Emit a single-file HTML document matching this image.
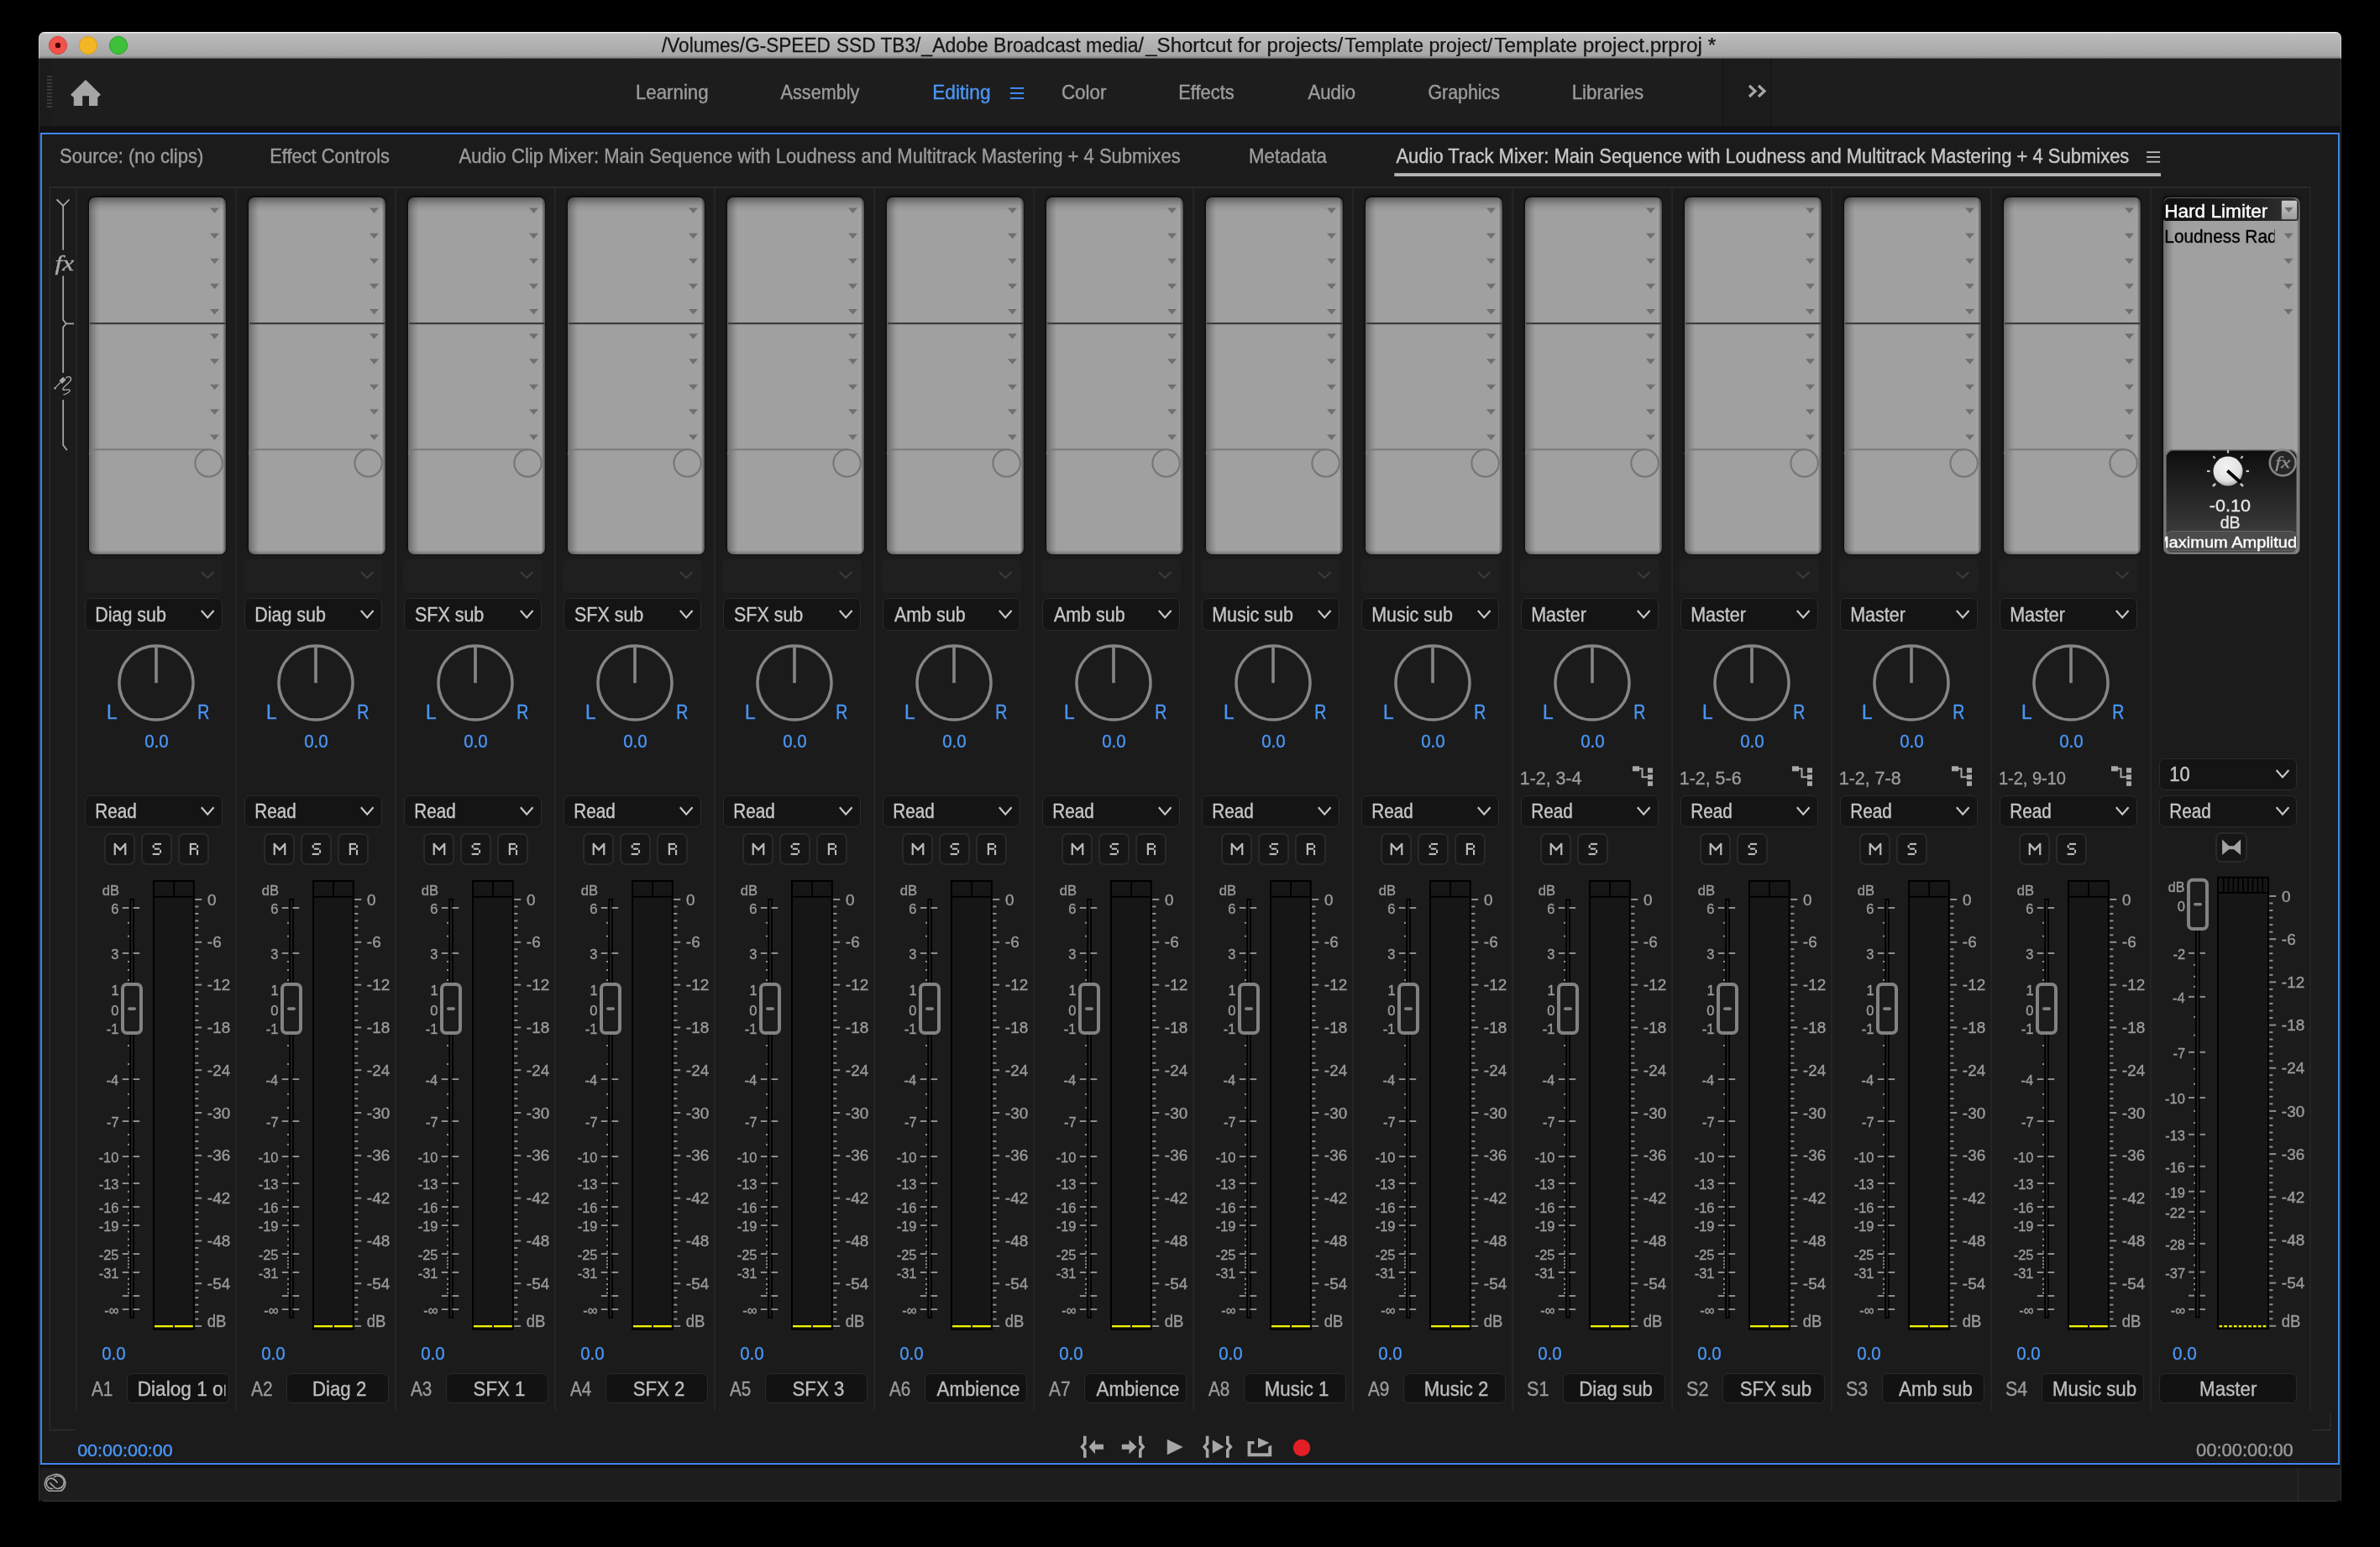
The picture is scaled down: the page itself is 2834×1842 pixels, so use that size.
<!DOCTYPE html>
<html><head><meta charset="utf-8"><style>
html,body{margin:0;padding:0;background:#000;}
body{width:2834px;height:1842px;position:relative;overflow:hidden;font-family:"Liberation Sans",sans-serif;}
#d>div{position:absolute;}
svg{position:absolute;left:0;top:0;}
svg text{font-family:"Liberation Sans",sans-serif;white-space:pre;}
svg{will-change:transform;}
</style></head><body>
<div id="d">
<div style="left:46.00px;top:38.00px;width:2742.00px;height:1750.00px;background:#1d1d1d;border-radius:7px 7px 6px 6px;overflow:hidden"></div>
<div style="left:46.00px;top:38.00px;width:2742.00px;height:32.00px;background:linear-gradient(#efefef 0px,#e6e6e6 1px,#bcbcbc 2.5px,#a6a6a6 28px,#8c8c8c 30.5px,#3a3a3a 32px);border-radius:7px 7px 0 0;box-shadow:inset 1px 0 0 rgba(255,255,255,.35),inset -1px 0 0 rgba(255,255,255,.35)"></div>
<div style="left:46.00px;top:70.00px;width:2742.00px;height:80.00px;background:#1d1d1d"></div>
<div style="left:46.00px;top:70.00px;width:16.00px;height:80.00px;background:#1b1b1b"></div>
<div style="left:2051.00px;top:70.00px;width:58.00px;height:80.00px;background:#1b1b1b"></div>
<div style="left:46.00px;top:150.00px;width:2742.00px;height:8.00px;background:#121212"></div>
<div style="left:48.00px;top:158.00px;width:2738.00px;height:1586.00px;background:#1b1b1b;box-sizing:border-box;border:2.4px solid #3f84ef"></div>
<div style="left:46.00px;top:1744.00px;width:2742.00px;height:44.00px;background:#1d1d1d;border-radius:0 0 6px 6px"></div>
<div style="left:46.00px;top:1744.00px;width:2742.00px;height:4.00px;background:#121212"></div>
<div style="left:105.80px;top:235.00px;width:163.70px;height:424.50px;border-radius:7px;background:linear-gradient(180deg,rgba(0,0,0,.41) 0px,rgba(0,0,0,.22) 5px,rgba(0,0,0,.08) 10px,rgba(0,0,0,0) 16px),linear-gradient(90deg,rgba(0,0,0,.34) 0px,rgba(0,0,0,.18) 5px,rgba(0,0,0,.05) 10px,rgba(0,0,0,0) 13px),linear-gradient(270deg,rgba(0,0,0,.5) 0px,rgba(0,0,0,0) 4px,rgba(255,255,255,.05) 5px,rgba(255,255,255,0) 7px),linear-gradient(0deg,rgba(0,0,0,.28) 0px,rgba(0,0,0,0) 5px),#a0a0a0;box-shadow:-1px -2px 3px rgba(0,0,0,.55), 0 0 0 1px rgba(0,0,0,.25)"></div>
<div style="left:100.20px;top:665.90px;width:165.70px;height:40.00px;background:#1f1f1f;border-radius:6px"></div>
<div style="left:101.00px;top:712.40px;width:164.40px;height:39.10px;background:#141414;box-sizing:border-box;border:1.6px solid #2b2b2b;border-radius:7px"></div>
<div style="left:101.00px;top:947.00px;width:164.20px;height:38.00px;background:#141414;box-sizing:border-box;border:1.6px solid #2b2b2b;border-radius:7px"></div>
<div style="left:124.20px;top:992.40px;width:37.30px;height:37.30px;background:#161616;box-sizing:border-box;border:2px solid #292929;border-radius:7px"></div>
<div style="left:168.15px;top:992.40px;width:37.30px;height:37.30px;background:#161616;box-sizing:border-box;border:2px solid #292929;border-radius:7px"></div>
<div style="left:212.10px;top:992.40px;width:37.30px;height:37.30px;background:#161616;box-sizing:border-box;border:2px solid #292929;border-radius:7px"></div>
<div style="left:150.70px;top:1634.80px;width:122.60px;height:36.40px;background:#121212;box-sizing:border-box;border:1.6px solid #2a2a2a;border-radius:7px"></div>
<div style="left:295.80px;top:235.00px;width:163.70px;height:424.50px;border-radius:7px;background:linear-gradient(180deg,rgba(0,0,0,.41) 0px,rgba(0,0,0,.22) 5px,rgba(0,0,0,.08) 10px,rgba(0,0,0,0) 16px),linear-gradient(90deg,rgba(0,0,0,.34) 0px,rgba(0,0,0,.18) 5px,rgba(0,0,0,.05) 10px,rgba(0,0,0,0) 13px),linear-gradient(270deg,rgba(0,0,0,.5) 0px,rgba(0,0,0,0) 4px,rgba(255,255,255,.05) 5px,rgba(255,255,255,0) 7px),linear-gradient(0deg,rgba(0,0,0,.28) 0px,rgba(0,0,0,0) 5px),#a0a0a0;box-shadow:-1px -2px 3px rgba(0,0,0,.55), 0 0 0 1px rgba(0,0,0,.25)"></div>
<div style="left:290.20px;top:665.90px;width:165.70px;height:40.00px;background:#1f1f1f;border-radius:6px"></div>
<div style="left:291.00px;top:712.40px;width:164.40px;height:39.10px;background:#141414;box-sizing:border-box;border:1.6px solid #2b2b2b;border-radius:7px"></div>
<div style="left:291.00px;top:947.00px;width:164.20px;height:38.00px;background:#141414;box-sizing:border-box;border:1.6px solid #2b2b2b;border-radius:7px"></div>
<div style="left:314.20px;top:992.40px;width:37.30px;height:37.30px;background:#161616;box-sizing:border-box;border:2px solid #292929;border-radius:7px"></div>
<div style="left:358.15px;top:992.40px;width:37.30px;height:37.30px;background:#161616;box-sizing:border-box;border:2px solid #292929;border-radius:7px"></div>
<div style="left:402.10px;top:992.40px;width:37.30px;height:37.30px;background:#161616;box-sizing:border-box;border:2px solid #292929;border-radius:7px"></div>
<div style="left:340.70px;top:1634.80px;width:122.60px;height:36.40px;background:#121212;box-sizing:border-box;border:1.6px solid #2a2a2a;border-radius:7px"></div>
<div style="left:485.80px;top:235.00px;width:163.70px;height:424.50px;border-radius:7px;background:linear-gradient(180deg,rgba(0,0,0,.41) 0px,rgba(0,0,0,.22) 5px,rgba(0,0,0,.08) 10px,rgba(0,0,0,0) 16px),linear-gradient(90deg,rgba(0,0,0,.34) 0px,rgba(0,0,0,.18) 5px,rgba(0,0,0,.05) 10px,rgba(0,0,0,0) 13px),linear-gradient(270deg,rgba(0,0,0,.5) 0px,rgba(0,0,0,0) 4px,rgba(255,255,255,.05) 5px,rgba(255,255,255,0) 7px),linear-gradient(0deg,rgba(0,0,0,.28) 0px,rgba(0,0,0,0) 5px),#a0a0a0;box-shadow:-1px -2px 3px rgba(0,0,0,.55), 0 0 0 1px rgba(0,0,0,.25)"></div>
<div style="left:480.20px;top:665.90px;width:165.70px;height:40.00px;background:#1f1f1f;border-radius:6px"></div>
<div style="left:481.00px;top:712.40px;width:164.40px;height:39.10px;background:#141414;box-sizing:border-box;border:1.6px solid #2b2b2b;border-radius:7px"></div>
<div style="left:481.00px;top:947.00px;width:164.20px;height:38.00px;background:#141414;box-sizing:border-box;border:1.6px solid #2b2b2b;border-radius:7px"></div>
<div style="left:504.20px;top:992.40px;width:37.30px;height:37.30px;background:#161616;box-sizing:border-box;border:2px solid #292929;border-radius:7px"></div>
<div style="left:548.15px;top:992.40px;width:37.30px;height:37.30px;background:#161616;box-sizing:border-box;border:2px solid #292929;border-radius:7px"></div>
<div style="left:592.10px;top:992.40px;width:37.30px;height:37.30px;background:#161616;box-sizing:border-box;border:2px solid #292929;border-radius:7px"></div>
<div style="left:530.70px;top:1634.80px;width:122.60px;height:36.40px;background:#121212;box-sizing:border-box;border:1.6px solid #2a2a2a;border-radius:7px"></div>
<div style="left:675.80px;top:235.00px;width:163.70px;height:424.50px;border-radius:7px;background:linear-gradient(180deg,rgba(0,0,0,.41) 0px,rgba(0,0,0,.22) 5px,rgba(0,0,0,.08) 10px,rgba(0,0,0,0) 16px),linear-gradient(90deg,rgba(0,0,0,.34) 0px,rgba(0,0,0,.18) 5px,rgba(0,0,0,.05) 10px,rgba(0,0,0,0) 13px),linear-gradient(270deg,rgba(0,0,0,.5) 0px,rgba(0,0,0,0) 4px,rgba(255,255,255,.05) 5px,rgba(255,255,255,0) 7px),linear-gradient(0deg,rgba(0,0,0,.28) 0px,rgba(0,0,0,0) 5px),#a0a0a0;box-shadow:-1px -2px 3px rgba(0,0,0,.55), 0 0 0 1px rgba(0,0,0,.25)"></div>
<div style="left:670.20px;top:665.90px;width:165.70px;height:40.00px;background:#1f1f1f;border-radius:6px"></div>
<div style="left:671.00px;top:712.40px;width:164.40px;height:39.10px;background:#141414;box-sizing:border-box;border:1.6px solid #2b2b2b;border-radius:7px"></div>
<div style="left:671.00px;top:947.00px;width:164.20px;height:38.00px;background:#141414;box-sizing:border-box;border:1.6px solid #2b2b2b;border-radius:7px"></div>
<div style="left:694.20px;top:992.40px;width:37.30px;height:37.30px;background:#161616;box-sizing:border-box;border:2px solid #292929;border-radius:7px"></div>
<div style="left:738.15px;top:992.40px;width:37.30px;height:37.30px;background:#161616;box-sizing:border-box;border:2px solid #292929;border-radius:7px"></div>
<div style="left:782.10px;top:992.40px;width:37.30px;height:37.30px;background:#161616;box-sizing:border-box;border:2px solid #292929;border-radius:7px"></div>
<div style="left:720.70px;top:1634.80px;width:122.60px;height:36.40px;background:#121212;box-sizing:border-box;border:1.6px solid #2a2a2a;border-radius:7px"></div>
<div style="left:865.80px;top:235.00px;width:163.70px;height:424.50px;border-radius:7px;background:linear-gradient(180deg,rgba(0,0,0,.41) 0px,rgba(0,0,0,.22) 5px,rgba(0,0,0,.08) 10px,rgba(0,0,0,0) 16px),linear-gradient(90deg,rgba(0,0,0,.34) 0px,rgba(0,0,0,.18) 5px,rgba(0,0,0,.05) 10px,rgba(0,0,0,0) 13px),linear-gradient(270deg,rgba(0,0,0,.5) 0px,rgba(0,0,0,0) 4px,rgba(255,255,255,.05) 5px,rgba(255,255,255,0) 7px),linear-gradient(0deg,rgba(0,0,0,.28) 0px,rgba(0,0,0,0) 5px),#a0a0a0;box-shadow:-1px -2px 3px rgba(0,0,0,.55), 0 0 0 1px rgba(0,0,0,.25)"></div>
<div style="left:860.20px;top:665.90px;width:165.70px;height:40.00px;background:#1f1f1f;border-radius:6px"></div>
<div style="left:861.00px;top:712.40px;width:164.40px;height:39.10px;background:#141414;box-sizing:border-box;border:1.6px solid #2b2b2b;border-radius:7px"></div>
<div style="left:861.00px;top:947.00px;width:164.20px;height:38.00px;background:#141414;box-sizing:border-box;border:1.6px solid #2b2b2b;border-radius:7px"></div>
<div style="left:884.20px;top:992.40px;width:37.30px;height:37.30px;background:#161616;box-sizing:border-box;border:2px solid #292929;border-radius:7px"></div>
<div style="left:928.15px;top:992.40px;width:37.30px;height:37.30px;background:#161616;box-sizing:border-box;border:2px solid #292929;border-radius:7px"></div>
<div style="left:972.10px;top:992.40px;width:37.30px;height:37.30px;background:#161616;box-sizing:border-box;border:2px solid #292929;border-radius:7px"></div>
<div style="left:910.70px;top:1634.80px;width:122.60px;height:36.40px;background:#121212;box-sizing:border-box;border:1.6px solid #2a2a2a;border-radius:7px"></div>
<div style="left:1055.80px;top:235.00px;width:163.70px;height:424.50px;border-radius:7px;background:linear-gradient(180deg,rgba(0,0,0,.41) 0px,rgba(0,0,0,.22) 5px,rgba(0,0,0,.08) 10px,rgba(0,0,0,0) 16px),linear-gradient(90deg,rgba(0,0,0,.34) 0px,rgba(0,0,0,.18) 5px,rgba(0,0,0,.05) 10px,rgba(0,0,0,0) 13px),linear-gradient(270deg,rgba(0,0,0,.5) 0px,rgba(0,0,0,0) 4px,rgba(255,255,255,.05) 5px,rgba(255,255,255,0) 7px),linear-gradient(0deg,rgba(0,0,0,.28) 0px,rgba(0,0,0,0) 5px),#a0a0a0;box-shadow:-1px -2px 3px rgba(0,0,0,.55), 0 0 0 1px rgba(0,0,0,.25)"></div>
<div style="left:1050.20px;top:665.90px;width:165.70px;height:40.00px;background:#1f1f1f;border-radius:6px"></div>
<div style="left:1051.00px;top:712.40px;width:164.40px;height:39.10px;background:#141414;box-sizing:border-box;border:1.6px solid #2b2b2b;border-radius:7px"></div>
<div style="left:1051.00px;top:947.00px;width:164.20px;height:38.00px;background:#141414;box-sizing:border-box;border:1.6px solid #2b2b2b;border-radius:7px"></div>
<div style="left:1074.20px;top:992.40px;width:37.30px;height:37.30px;background:#161616;box-sizing:border-box;border:2px solid #292929;border-radius:7px"></div>
<div style="left:1118.15px;top:992.40px;width:37.30px;height:37.30px;background:#161616;box-sizing:border-box;border:2px solid #292929;border-radius:7px"></div>
<div style="left:1162.10px;top:992.40px;width:37.30px;height:37.30px;background:#161616;box-sizing:border-box;border:2px solid #292929;border-radius:7px"></div>
<div style="left:1100.70px;top:1634.80px;width:122.60px;height:36.40px;background:#121212;box-sizing:border-box;border:1.6px solid #2a2a2a;border-radius:7px"></div>
<div style="left:1245.80px;top:235.00px;width:163.70px;height:424.50px;border-radius:7px;background:linear-gradient(180deg,rgba(0,0,0,.41) 0px,rgba(0,0,0,.22) 5px,rgba(0,0,0,.08) 10px,rgba(0,0,0,0) 16px),linear-gradient(90deg,rgba(0,0,0,.34) 0px,rgba(0,0,0,.18) 5px,rgba(0,0,0,.05) 10px,rgba(0,0,0,0) 13px),linear-gradient(270deg,rgba(0,0,0,.5) 0px,rgba(0,0,0,0) 4px,rgba(255,255,255,.05) 5px,rgba(255,255,255,0) 7px),linear-gradient(0deg,rgba(0,0,0,.28) 0px,rgba(0,0,0,0) 5px),#a0a0a0;box-shadow:-1px -2px 3px rgba(0,0,0,.55), 0 0 0 1px rgba(0,0,0,.25)"></div>
<div style="left:1240.20px;top:665.90px;width:165.70px;height:40.00px;background:#1f1f1f;border-radius:6px"></div>
<div style="left:1241.00px;top:712.40px;width:164.40px;height:39.10px;background:#141414;box-sizing:border-box;border:1.6px solid #2b2b2b;border-radius:7px"></div>
<div style="left:1241.00px;top:947.00px;width:164.20px;height:38.00px;background:#141414;box-sizing:border-box;border:1.6px solid #2b2b2b;border-radius:7px"></div>
<div style="left:1264.20px;top:992.40px;width:37.30px;height:37.30px;background:#161616;box-sizing:border-box;border:2px solid #292929;border-radius:7px"></div>
<div style="left:1308.15px;top:992.40px;width:37.30px;height:37.30px;background:#161616;box-sizing:border-box;border:2px solid #292929;border-radius:7px"></div>
<div style="left:1352.10px;top:992.40px;width:37.30px;height:37.30px;background:#161616;box-sizing:border-box;border:2px solid #292929;border-radius:7px"></div>
<div style="left:1290.70px;top:1634.80px;width:122.60px;height:36.40px;background:#121212;box-sizing:border-box;border:1.6px solid #2a2a2a;border-radius:7px"></div>
<div style="left:1435.80px;top:235.00px;width:163.70px;height:424.50px;border-radius:7px;background:linear-gradient(180deg,rgba(0,0,0,.41) 0px,rgba(0,0,0,.22) 5px,rgba(0,0,0,.08) 10px,rgba(0,0,0,0) 16px),linear-gradient(90deg,rgba(0,0,0,.34) 0px,rgba(0,0,0,.18) 5px,rgba(0,0,0,.05) 10px,rgba(0,0,0,0) 13px),linear-gradient(270deg,rgba(0,0,0,.5) 0px,rgba(0,0,0,0) 4px,rgba(255,255,255,.05) 5px,rgba(255,255,255,0) 7px),linear-gradient(0deg,rgba(0,0,0,.28) 0px,rgba(0,0,0,0) 5px),#a0a0a0;box-shadow:-1px -2px 3px rgba(0,0,0,.55), 0 0 0 1px rgba(0,0,0,.25)"></div>
<div style="left:1430.20px;top:665.90px;width:165.70px;height:40.00px;background:#1f1f1f;border-radius:6px"></div>
<div style="left:1431.00px;top:712.40px;width:164.40px;height:39.10px;background:#141414;box-sizing:border-box;border:1.6px solid #2b2b2b;border-radius:7px"></div>
<div style="left:1431.00px;top:947.00px;width:164.20px;height:38.00px;background:#141414;box-sizing:border-box;border:1.6px solid #2b2b2b;border-radius:7px"></div>
<div style="left:1454.20px;top:992.40px;width:37.30px;height:37.30px;background:#161616;box-sizing:border-box;border:2px solid #292929;border-radius:7px"></div>
<div style="left:1498.15px;top:992.40px;width:37.30px;height:37.30px;background:#161616;box-sizing:border-box;border:2px solid #292929;border-radius:7px"></div>
<div style="left:1542.10px;top:992.40px;width:37.30px;height:37.30px;background:#161616;box-sizing:border-box;border:2px solid #292929;border-radius:7px"></div>
<div style="left:1480.70px;top:1634.80px;width:122.60px;height:36.40px;background:#121212;box-sizing:border-box;border:1.6px solid #2a2a2a;border-radius:7px"></div>
<div style="left:1625.80px;top:235.00px;width:163.70px;height:424.50px;border-radius:7px;background:linear-gradient(180deg,rgba(0,0,0,.41) 0px,rgba(0,0,0,.22) 5px,rgba(0,0,0,.08) 10px,rgba(0,0,0,0) 16px),linear-gradient(90deg,rgba(0,0,0,.34) 0px,rgba(0,0,0,.18) 5px,rgba(0,0,0,.05) 10px,rgba(0,0,0,0) 13px),linear-gradient(270deg,rgba(0,0,0,.5) 0px,rgba(0,0,0,0) 4px,rgba(255,255,255,.05) 5px,rgba(255,255,255,0) 7px),linear-gradient(0deg,rgba(0,0,0,.28) 0px,rgba(0,0,0,0) 5px),#a0a0a0;box-shadow:-1px -2px 3px rgba(0,0,0,.55), 0 0 0 1px rgba(0,0,0,.25)"></div>
<div style="left:1620.20px;top:665.90px;width:165.70px;height:40.00px;background:#1f1f1f;border-radius:6px"></div>
<div style="left:1621.00px;top:712.40px;width:164.40px;height:39.10px;background:#141414;box-sizing:border-box;border:1.6px solid #2b2b2b;border-radius:7px"></div>
<div style="left:1621.00px;top:947.00px;width:164.20px;height:38.00px;background:#141414;box-sizing:border-box;border:1.6px solid #2b2b2b;border-radius:7px"></div>
<div style="left:1644.20px;top:992.40px;width:37.30px;height:37.30px;background:#161616;box-sizing:border-box;border:2px solid #292929;border-radius:7px"></div>
<div style="left:1688.15px;top:992.40px;width:37.30px;height:37.30px;background:#161616;box-sizing:border-box;border:2px solid #292929;border-radius:7px"></div>
<div style="left:1732.10px;top:992.40px;width:37.30px;height:37.30px;background:#161616;box-sizing:border-box;border:2px solid #292929;border-radius:7px"></div>
<div style="left:1670.70px;top:1634.80px;width:122.60px;height:36.40px;background:#121212;box-sizing:border-box;border:1.6px solid #2a2a2a;border-radius:7px"></div>
<div style="left:1815.80px;top:235.00px;width:163.70px;height:424.50px;border-radius:7px;background:linear-gradient(180deg,rgba(0,0,0,.41) 0px,rgba(0,0,0,.22) 5px,rgba(0,0,0,.08) 10px,rgba(0,0,0,0) 16px),linear-gradient(90deg,rgba(0,0,0,.34) 0px,rgba(0,0,0,.18) 5px,rgba(0,0,0,.05) 10px,rgba(0,0,0,0) 13px),linear-gradient(270deg,rgba(0,0,0,.5) 0px,rgba(0,0,0,0) 4px,rgba(255,255,255,.05) 5px,rgba(255,255,255,0) 7px),linear-gradient(0deg,rgba(0,0,0,.28) 0px,rgba(0,0,0,0) 5px),#a0a0a0;box-shadow:-1px -2px 3px rgba(0,0,0,.55), 0 0 0 1px rgba(0,0,0,.25)"></div>
<div style="left:1810.20px;top:665.90px;width:165.70px;height:40.00px;background:#1f1f1f;border-radius:6px"></div>
<div style="left:1811.00px;top:712.40px;width:164.40px;height:39.10px;background:#141414;box-sizing:border-box;border:1.6px solid #2b2b2b;border-radius:7px"></div>
<div style="left:1811.00px;top:947.00px;width:164.20px;height:38.00px;background:#141414;box-sizing:border-box;border:1.6px solid #2b2b2b;border-radius:7px"></div>
<div style="left:1834.20px;top:992.40px;width:37.30px;height:37.30px;background:#161616;box-sizing:border-box;border:2px solid #292929;border-radius:7px"></div>
<div style="left:1878.15px;top:992.40px;width:37.30px;height:37.30px;background:#161616;box-sizing:border-box;border:2px solid #292929;border-radius:7px"></div>
<div style="left:1860.70px;top:1634.80px;width:122.60px;height:36.40px;background:#121212;box-sizing:border-box;border:1.6px solid #2a2a2a;border-radius:7px"></div>
<div style="left:2005.80px;top:235.00px;width:163.70px;height:424.50px;border-radius:7px;background:linear-gradient(180deg,rgba(0,0,0,.41) 0px,rgba(0,0,0,.22) 5px,rgba(0,0,0,.08) 10px,rgba(0,0,0,0) 16px),linear-gradient(90deg,rgba(0,0,0,.34) 0px,rgba(0,0,0,.18) 5px,rgba(0,0,0,.05) 10px,rgba(0,0,0,0) 13px),linear-gradient(270deg,rgba(0,0,0,.5) 0px,rgba(0,0,0,0) 4px,rgba(255,255,255,.05) 5px,rgba(255,255,255,0) 7px),linear-gradient(0deg,rgba(0,0,0,.28) 0px,rgba(0,0,0,0) 5px),#a0a0a0;box-shadow:-1px -2px 3px rgba(0,0,0,.55), 0 0 0 1px rgba(0,0,0,.25)"></div>
<div style="left:2000.20px;top:665.90px;width:165.70px;height:40.00px;background:#1f1f1f;border-radius:6px"></div>
<div style="left:2001.00px;top:712.40px;width:164.40px;height:39.10px;background:#141414;box-sizing:border-box;border:1.6px solid #2b2b2b;border-radius:7px"></div>
<div style="left:2001.00px;top:947.00px;width:164.20px;height:38.00px;background:#141414;box-sizing:border-box;border:1.6px solid #2b2b2b;border-radius:7px"></div>
<div style="left:2024.20px;top:992.40px;width:37.30px;height:37.30px;background:#161616;box-sizing:border-box;border:2px solid #292929;border-radius:7px"></div>
<div style="left:2068.15px;top:992.40px;width:37.30px;height:37.30px;background:#161616;box-sizing:border-box;border:2px solid #292929;border-radius:7px"></div>
<div style="left:2050.70px;top:1634.80px;width:122.60px;height:36.40px;background:#121212;box-sizing:border-box;border:1.6px solid #2a2a2a;border-radius:7px"></div>
<div style="left:2195.80px;top:235.00px;width:163.70px;height:424.50px;border-radius:7px;background:linear-gradient(180deg,rgba(0,0,0,.41) 0px,rgba(0,0,0,.22) 5px,rgba(0,0,0,.08) 10px,rgba(0,0,0,0) 16px),linear-gradient(90deg,rgba(0,0,0,.34) 0px,rgba(0,0,0,.18) 5px,rgba(0,0,0,.05) 10px,rgba(0,0,0,0) 13px),linear-gradient(270deg,rgba(0,0,0,.5) 0px,rgba(0,0,0,0) 4px,rgba(255,255,255,.05) 5px,rgba(255,255,255,0) 7px),linear-gradient(0deg,rgba(0,0,0,.28) 0px,rgba(0,0,0,0) 5px),#a0a0a0;box-shadow:-1px -2px 3px rgba(0,0,0,.55), 0 0 0 1px rgba(0,0,0,.25)"></div>
<div style="left:2190.20px;top:665.90px;width:165.70px;height:40.00px;background:#1f1f1f;border-radius:6px"></div>
<div style="left:2191.00px;top:712.40px;width:164.40px;height:39.10px;background:#141414;box-sizing:border-box;border:1.6px solid #2b2b2b;border-radius:7px"></div>
<div style="left:2191.00px;top:947.00px;width:164.20px;height:38.00px;background:#141414;box-sizing:border-box;border:1.6px solid #2b2b2b;border-radius:7px"></div>
<div style="left:2214.20px;top:992.40px;width:37.30px;height:37.30px;background:#161616;box-sizing:border-box;border:2px solid #292929;border-radius:7px"></div>
<div style="left:2258.15px;top:992.40px;width:37.30px;height:37.30px;background:#161616;box-sizing:border-box;border:2px solid #292929;border-radius:7px"></div>
<div style="left:2240.70px;top:1634.80px;width:122.60px;height:36.40px;background:#121212;box-sizing:border-box;border:1.6px solid #2a2a2a;border-radius:7px"></div>
<div style="left:2385.80px;top:235.00px;width:163.70px;height:424.50px;border-radius:7px;background:linear-gradient(180deg,rgba(0,0,0,.41) 0px,rgba(0,0,0,.22) 5px,rgba(0,0,0,.08) 10px,rgba(0,0,0,0) 16px),linear-gradient(90deg,rgba(0,0,0,.34) 0px,rgba(0,0,0,.18) 5px,rgba(0,0,0,.05) 10px,rgba(0,0,0,0) 13px),linear-gradient(270deg,rgba(0,0,0,.5) 0px,rgba(0,0,0,0) 4px,rgba(255,255,255,.05) 5px,rgba(255,255,255,0) 7px),linear-gradient(0deg,rgba(0,0,0,.28) 0px,rgba(0,0,0,0) 5px),#a0a0a0;box-shadow:-1px -2px 3px rgba(0,0,0,.55), 0 0 0 1px rgba(0,0,0,.25)"></div>
<div style="left:2380.20px;top:665.90px;width:165.70px;height:40.00px;background:#1f1f1f;border-radius:6px"></div>
<div style="left:2381.00px;top:712.40px;width:164.40px;height:39.10px;background:#141414;box-sizing:border-box;border:1.6px solid #2b2b2b;border-radius:7px"></div>
<div style="left:2381.00px;top:947.00px;width:164.20px;height:38.00px;background:#141414;box-sizing:border-box;border:1.6px solid #2b2b2b;border-radius:7px"></div>
<div style="left:2404.20px;top:992.40px;width:37.30px;height:37.30px;background:#161616;box-sizing:border-box;border:2px solid #292929;border-radius:7px"></div>
<div style="left:2448.15px;top:992.40px;width:37.30px;height:37.30px;background:#161616;box-sizing:border-box;border:2px solid #292929;border-radius:7px"></div>
<div style="left:2430.70px;top:1634.80px;width:122.60px;height:36.40px;background:#121212;box-sizing:border-box;border:1.6px solid #2a2a2a;border-radius:7px"></div>
<div style="left:2575.80px;top:235.00px;width:163.70px;height:424.50px;border-radius:7px;background:linear-gradient(180deg,rgba(0,0,0,.41) 0px,rgba(0,0,0,.22) 5px,rgba(0,0,0,.08) 10px,rgba(0,0,0,0) 16px),linear-gradient(90deg,rgba(0,0,0,.34) 0px,rgba(0,0,0,.18) 5px,rgba(0,0,0,.05) 10px,rgba(0,0,0,0) 13px),linear-gradient(270deg,rgba(0,0,0,.5) 0px,rgba(0,0,0,0) 4px,rgba(255,255,255,.05) 5px,rgba(255,255,255,0) 7px),linear-gradient(0deg,rgba(0,0,0,.28) 0px,rgba(0,0,0,0) 5px),#a0a0a0;box-shadow:-1px -2px 3px rgba(0,0,0,.55), 0 0 0 1px rgba(0,0,0,.25)"></div>
<div style="left:2575.50px;top:236.00px;width:161.00px;height:27.40px;background:linear-gradient(90deg,#0e0e0e,#222 70%,#333);border-radius:8px 8px 3px 3px"></div>
<div style="left:2716.00px;top:237.50px;width:19.50px;height:24.50px;background:linear-gradient(#c8c8c8,#9c9c9c);box-sizing:border-box;border:1px solid #444;border-radius:2px"></div>
<div style="left:2577.80px;top:535.40px;width:158.20px;height:123.30px;background:linear-gradient(#0d0d0d,#262626 45%,#3a3a3a 80%,#444);border-radius:10px 10px 8px 8px;box-shadow:inset 0 0 0 1.5px #7a7a7a"></div>
<div style="left:2577.80px;top:631.80px;width:158.20px;height:24.50px;background:#4b4b4b;box-sizing:border-box;border:1.5px solid #666;border-radius:8px"></div>
<div style="left:2570.90px;top:902.50px;width:164.40px;height:38.80px;background:#141414;box-sizing:border-box;border:1.6px solid #2b2b2b;border-radius:7px"></div>
<div style="left:2570.90px;top:946.70px;width:164.40px;height:38.80px;background:#141414;box-sizing:border-box;border:1.6px solid #2b2b2b;border-radius:7px"></div>
<div style="left:2638.00px;top:990.50px;width:37.60px;height:36.90px;background:#161616;box-sizing:border-box;border:2px solid #292929;border-radius:7px"></div>
<div style="left:2571.00px;top:1635.00px;width:164.00px;height:36.00px;background:#121212;box-sizing:border-box;border:1.6px solid #2a2a2a;border-radius:7px"></div>
</div>
<svg width="2834" height="1842" viewBox="0 0 2834 1842">
<defs><clipPath id="nm0"><rect x="153" y="1630" width="115.5" height="50"/></clipPath><clipPath id="lr"><rect x="2575" y="265" width="133.5" height="30"/></clipPath><clipPath id="ma"><rect x="2577.8" y="625" width="158.2" height="35"/></clipPath></defs>
<circle cx="69" cy="54" r="10.6" fill="#f2524c" stroke="#d8403a" stroke-width="1"/>
<circle cx="105" cy="54" r="10.6" fill="#f5b625" stroke="#d9a017" stroke-width="1"/>
<circle cx="141" cy="54" r="10.6" fill="#3ec03a" stroke="#2aa22a" stroke-width="1"/>
<circle cx="69" cy="54" r="3.2" fill="#4d0000"/>
<text transform="translate(788.00,62.00) scale(0.9808,1)" font-size="23.04" fill="#141414" stroke="#141414" stroke-width="0.25" >/Volumes/G-SPEED</text>
<text transform="translate(995.98,62.00) scale(0.9847,1)" font-size="23.04" fill="#141414" stroke="#141414" stroke-width="0.25" >SSD TB3/</text>
<text transform="translate(1097.35,62.00) scale(0.9986,1)" font-size="23.04" fill="#141414" stroke="#141414" stroke-width="0.25" >_Adobe Broadcast media/</text>
<text transform="translate(1364.26,62.00) scale(1.0433,1)" font-size="23.04" fill="#141414" stroke="#141414" stroke-width="0.25" >_Shortcut for projects/</text>
<text transform="translate(1601.34,62.00) scale(1.0033,1)" font-size="23.04" fill="#141414" stroke="#141414" stroke-width="0.25" >Template project/</text>
<text transform="translate(1779.21,62.00) scale(1.0575,1)" font-size="23.04" fill="#141414" stroke="#141414" stroke-width="0.25" >Template project.prproj *</text>
<rect x="46.00" y="70.00" width="1.00" height="1718.00" fill="#2e2e2e" />
<rect x="2787.00" y="70.00" width="1.00" height="1718.00" fill="#2e2e2e" />
<rect x="56.00" y="90.00" width="6.00" height="2.00" fill="#3a3a3a" />
<rect x="56.00" y="94.00" width="6.00" height="2.00" fill="#3a3a3a" />
<rect x="56.00" y="98.00" width="6.00" height="2.00" fill="#3a3a3a" />
<rect x="56.00" y="102.00" width="6.00" height="2.00" fill="#3a3a3a" />
<rect x="56.00" y="106.00" width="6.00" height="2.00" fill="#3a3a3a" />
<rect x="56.00" y="110.00" width="6.00" height="2.00" fill="#3a3a3a" />
<rect x="56.00" y="114.00" width="6.00" height="2.00" fill="#3a3a3a" />
<rect x="56.00" y="118.00" width="6.00" height="2.00" fill="#3a3a3a" />
<rect x="56.00" y="122.00" width="6.00" height="2.00" fill="#3a3a3a" />
<rect x="56.00" y="126.00" width="6.00" height="2.00" fill="#3a3a3a" />
<path d="M102 95 L120 112.8 L116.3 116 L116.3 126 L106 126 L106 114.2 L98.2 114.2 L98.2 126 L87.8 126 L87.8 116 L84 112.8 Z" fill="#a6a6a6"/>
<text transform="translate(756.92,118.00) scale(0.9676,1)" font-size="23.04" fill="#9c9c9c" stroke="#9c9c9c" stroke-width="0.4" >Learning</text>
<text transform="translate(929.60,118.00) scale(0.9390,1)" font-size="23.04" fill="#9c9c9c" stroke="#9c9c9c" stroke-width="0.4" >Assembly</text>
<text transform="translate(1110.19,118.00) scale(0.9842,1)" font-size="23.04" fill="#4a96f5" stroke="#4a96f5" stroke-width="0.4" >Editing</text>
<text transform="translate(1263.88,118.00) scale(0.9727,1)" font-size="23.04" fill="#9c9c9c" stroke="#9c9c9c" stroke-width="0.4" >Color</text>
<text transform="translate(1403.25,118.00) scale(0.9495,1)" font-size="23.04" fill="#9c9c9c" stroke="#9c9c9c" stroke-width="0.4" >Effects</text>
<text transform="translate(1557.40,118.00) scale(0.9628,1)" font-size="23.04" fill="#9c9c9c" stroke="#9c9c9c" stroke-width="0.4" >Audio</text>
<text transform="translate(1700.43,118.00) scale(0.9289,1)" font-size="23.04" fill="#9c9c9c" stroke="#9c9c9c" stroke-width="0.4" >Graphics</text>
<text transform="translate(1871.72,118.00) scale(0.9682,1)" font-size="23.04" fill="#9c9c9c" stroke="#9c9c9c" stroke-width="0.4" >Libraries</text>
<rect x="1203.00" y="104.00" width="16.20" height="2.00" fill="#3f88f2" />
<rect x="1203.00" y="110.00" width="16.20" height="2.00" fill="#3f88f2" />
<rect x="1203.00" y="116.00" width="16.20" height="2.00" fill="#3f88f2" />
<rect x="2050.00" y="70.00" width="1.50" height="80.00" fill="#161616" />
<rect x="2108.50" y="70.00" width="1.50" height="80.00" fill="#161616" />
<path d="M2083 102 L2090 108.5 L2083 115 M2094 102 L2101 108.5 L2094 115" fill="none" stroke="#a6a6a6" stroke-width="3.2"/>
<rect x="52.00" y="1786.60" width="2730.00" height="1.20" fill="#343434" />
<rect x="2735.50" y="1749.00" width="1.50" height="39.00" fill="#2a2a2a" />
<g fill="none" stroke="#a3a3a3" stroke-width="1.6" stroke-linecap="round"><path d="M58.4 1775.3 A10 10 0 0 1 61.8 1756.8 A10.6 10.6 0 1 1 72.5 1775.3 Z"/><path d="M62.8 1772.5 A6.3 6.3 0 1 1 60.5 1760.1 Q64.5 1760.1 68.2 1765.2"/><path d="M59.6 1765.8 L65.5 1771.3 Q67.3 1772.9 69.8 1772.4 A7.6 7.6 0 1 0 64.6 1758.5"/></g>
<text transform="translate(71.01,194.40) scale(0.9044,1)" font-size="24.35" fill="#9c9c9c" stroke="#9c9c9c" stroke-width="0.4" >Source: (no clips)</text>
<text transform="translate(321.25,194.40) scale(0.8962,1)" font-size="24.35" fill="#9c9c9c" stroke="#9c9c9c" stroke-width="0.4" >Effect Controls</text>
<text transform="translate(546.50,194.40) scale(0.9051,1)" font-size="24.35" fill="#9c9c9c" stroke="#9c9c9c" stroke-width="0.4" >Audio Clip Mixer: Main Sequence with Loudness and Multitrack Mastering + 4 Submixes</text>
<text transform="translate(1487.02,194.40) scale(0.9158,1)" font-size="24.35" fill="#9c9c9c" stroke="#9c9c9c" stroke-width="0.4" >Metadata</text>
<text transform="translate(1662.40,194.40) scale(0.9033,1)" font-size="24.35" fill="#c8c8c8" stroke="#c8c8c8" stroke-width="0.4" >Audio Track Mixer: Main Sequence with Loudness and Multitrack Mastering + 4 Submixes</text>
<rect x="2556.10" y="180.30" width="16.00" height="1.80" fill="#bdbdbd" />
<rect x="2556.10" y="186.10" width="16.00" height="1.80" fill="#bdbdbd" />
<rect x="2556.10" y="191.80" width="16.00" height="1.80" fill="#bdbdbd" />
<rect x="1660.30" y="206.10" width="912.70" height="3.90" fill="#b4b4b4" />
<rect x="58.50" y="222.00" width="2692.50" height="2.00" fill="#2a2a2a" />
<rect x="58.50" y="222.00" width="1.60" height="1481.70" fill="#2a2a2a" />
<rect x="58.50" y="1701.90" width="31.20" height="1.80" fill="#2a2a2a" />
<rect x="2774.00" y="1682.00" width="1.60" height="21.70" fill="#2a2a2a" />
<rect x="2754.00" y="1701.90" width="21.60" height="1.80" fill="#2a2a2a" />
<path d="M67.5 237.5 L75.2 245 L82.5 237.5 M75.2 245 L75.2 297.8" fill="none" stroke="#a8a8a8" stroke-width="1.75"/>
<text transform="translate(65.49,322.00) scale(1.2304,1)" font-size="25.36" fill="#a8a8a8" font-style="italic" font-family="Liberation Serif" stroke="#a8a8a8" stroke-width="0.4" style="font-family:Liberation Serif">fx</text>
<path d="M75.2 328.5 L75.2 381 L78.8 385.3 L75.2 389.6 L75.2 444 M78.8 385.3 L88 385.3" fill="none" stroke="#a8a8a8" stroke-width="1.75"/>
<g fill="#a8a8a8"><rect x="-3.3" y="-2.5" width="6.6" height="5" transform="translate(74.5,452.8) rotate(-45)"/><circle cx="65.6" cy="462.2" r="1.3"/></g><path d="M71.8 455.5 L65.6 461.8" stroke="#a8a8a8" stroke-width="1.2"/><path d="M78.3 450.4 C80.5 447.5 84.8 448.3 84.5 451.8 C84.2 455 76.5 459.5 75 462.8 C74 466 80.5 462.8 82.8 464.2 C84.5 465.6 80 469 75.4 470.2" fill="none" stroke="#a8a8a8" stroke-width="1.35"/>
<path d="M75.2 476 L75.2 530 L79.8 536" fill="none" stroke="#a8a8a8" stroke-width="1.75"/>
<rect x="90.20" y="224.00" width="1.60" height="1455.50" fill="#272727" />
<rect x="107.00" y="384.00" width="161.50" height="2.20" fill="#3c3c3c" />
<path d="M250.00 247.45 L261.00 247.45 L255.50 253.95 Z" fill="#6f6f6f"/>
<path d="M250.00 277.75 L261.00 277.75 L255.50 284.25 Z" fill="#6f6f6f"/>
<path d="M250.00 307.75 L261.00 307.75 L255.50 314.25 Z" fill="#6f6f6f"/>
<path d="M250.00 337.75 L261.00 337.75 L255.50 344.25 Z" fill="#6f6f6f"/>
<path d="M250.00 368.05 L261.00 368.05 L255.50 374.55 Z" fill="#6f6f6f"/>
<path d="M250.00 397.15 L261.00 397.15 L255.50 403.65 Z" fill="#6f6f6f"/>
<path d="M250.00 427.35 L261.00 427.35 L255.50 433.85 Z" fill="#6f6f6f"/>
<path d="M250.00 457.75 L261.00 457.75 L255.50 464.25 Z" fill="#6f6f6f"/>
<path d="M250.00 487.35 L261.00 487.35 L255.50 493.85 Z" fill="#6f6f6f"/>
<path d="M250.00 517.45 L261.00 517.45 L255.50 523.95 Z" fill="#6f6f6f"/>
<path d="M106.5 541 Q107.5 535.3 114 535.3 L248.6 535.3" fill="none" stroke="#7a7a7a" stroke-width="2"/>
<circle cx="248.6" cy="551.4" r="16.2" fill="none" stroke="#777" stroke-width="2.2"/>
<path d="M239.85 681.00 L247.20 688.00 L254.55 681.00" fill="none" stroke="#3a3a3a" stroke-width="2.2"/>
<text transform="translate(113.18,740.00) scale(0.8879,1)" font-size="24.20" fill="#c6c6c6" stroke="#c6c6c6" stroke-width="0.4" >Diag sub</text>
<path d="M239.85 727.00 L247.20 735.40 L254.55 727.00" fill="none" stroke="#c8c8c8" stroke-width="2.2"/>
<circle cx="186" cy="813" r="44.05" fill="none" stroke="#858585" stroke-width="3.4"/>
<rect x="184.20" y="770.60" width="3.60" height="42.60" fill="#858585" />
<text transform="translate(127.08,856.20) scale(0.9788,1)" font-size="23.19" fill="#4a96f5" stroke="#4a96f5" stroke-width="0.4" >L</text>
<text transform="translate(235.14,856.20) scale(0.8408,1)" font-size="23.19" fill="#4a96f5" stroke="#4a96f5" stroke-width="0.4" >R</text>
<text transform="translate(172.18,890.00) scale(0.9260,1)" font-size="22.17" fill="#4a96f5" stroke="#4a96f5" stroke-width="0.4" >0.0</text>
<text transform="translate(113.24,973.50) scale(0.8932,1)" font-size="23.19" fill="#c6c6c6" stroke="#c6c6c6" stroke-width="0.4" >Read</text>
<path d="M239.85 961.30 L247.20 969.70 L254.55 961.30" fill="none" stroke="#c8c8c8" stroke-width="2.2"/>
<g fill="#bababa"><rect x="135.65" y="1003.9" width="2.2" height="14.2"/><rect x="148.15" y="1003.9" width="2.2" height="14.2"/></g>
<path d="M136.75 1005.10 L143.00 1011.80 L149.25 1005.10" fill="none" stroke="#bababa" stroke-width="2.3"/>
<g fill="#bababa"><rect x="183.85" y="1003.90" width="8.2" height="2.2"/><rect x="181.65" y="1006.10" width="2.2" height="3.5"/><rect x="183.85" y="1009.60" width="6.2" height="2.2"/><rect x="190.05" y="1011.80" width="2.0" height="4.1"/><rect x="181.65" y="1015.90" width="8.4" height="2.2"/></g>
<g fill="#bababa"><rect x="225.80" y="1003.90" width="2.2" height="14.2"/><rect x="228.00" y="1003.90" width="6.0" height="2.2"/><rect x="234.00" y="1006.10" width="2.1" height="3.5"/><rect x="228.00" y="1009.60" width="6.0" height="2.2"/><rect x="234.00" y="1011.80" width="2.1" height="6.3"/></g>
<text transform="translate(121.84,1065.70) scale(0.9929,1)" font-size="16.67" fill="#9a9a9a" stroke="#9a9a9a" stroke-width="0.4" >dB</text>
<rect x="182.00" y="1048.00" width="49.80" height="535.60" fill="#000" />
<rect x="184.00" y="1050.00" width="45.80" height="531.60" fill="#161616" />
<rect x="184.00" y="1066.80" width="45.80" height="2.00" fill="#000" />
<rect x="206.20" y="1050.00" width="1.80" height="17.00" fill="#000" />
<rect x="184.00" y="1578.00" width="22.00" height="2.30" fill="#f2f200" />
<rect x="208.00" y="1578.00" width="21.80" height="2.30" fill="#f2f200" />
<rect x="232.20" y="1070.00" width="8.00" height="2.00" fill="#8e8e8e" />
<rect x="232.20" y="1078.47" width="4.20" height="2.00" fill="#8e8e8e" />
<rect x="232.20" y="1086.93" width="4.20" height="2.00" fill="#8e8e8e" />
<rect x="232.20" y="1095.40" width="4.20" height="2.00" fill="#8e8e8e" />
<rect x="232.20" y="1103.87" width="4.20" height="2.00" fill="#8e8e8e" />
<rect x="232.20" y="1112.33" width="4.20" height="2.00" fill="#8e8e8e" />
<rect x="232.20" y="1120.80" width="8.00" height="2.00" fill="#8e8e8e" />
<rect x="232.20" y="1129.27" width="4.20" height="2.00" fill="#8e8e8e" />
<rect x="232.20" y="1137.73" width="4.20" height="2.00" fill="#8e8e8e" />
<rect x="232.20" y="1146.20" width="4.20" height="2.00" fill="#8e8e8e" />
<rect x="232.20" y="1154.67" width="4.20" height="2.00" fill="#8e8e8e" />
<rect x="232.20" y="1163.13" width="4.20" height="2.00" fill="#8e8e8e" />
<rect x="232.20" y="1171.60" width="8.00" height="2.00" fill="#8e8e8e" />
<rect x="232.20" y="1180.07" width="4.20" height="2.00" fill="#8e8e8e" />
<rect x="232.20" y="1188.53" width="4.20" height="2.00" fill="#8e8e8e" />
<rect x="232.20" y="1197.00" width="4.20" height="2.00" fill="#8e8e8e" />
<rect x="232.20" y="1205.47" width="4.20" height="2.00" fill="#8e8e8e" />
<rect x="232.20" y="1213.93" width="4.20" height="2.00" fill="#8e8e8e" />
<rect x="232.20" y="1222.40" width="8.00" height="2.00" fill="#8e8e8e" />
<rect x="232.20" y="1230.87" width="4.20" height="2.00" fill="#8e8e8e" />
<rect x="232.20" y="1239.33" width="4.20" height="2.00" fill="#8e8e8e" />
<rect x="232.20" y="1247.80" width="4.20" height="2.00" fill="#8e8e8e" />
<rect x="232.20" y="1256.27" width="4.20" height="2.00" fill="#8e8e8e" />
<rect x="232.20" y="1264.73" width="4.20" height="2.00" fill="#8e8e8e" />
<rect x="232.20" y="1273.20" width="8.00" height="2.00" fill="#8e8e8e" />
<rect x="232.20" y="1281.67" width="4.20" height="2.00" fill="#8e8e8e" />
<rect x="232.20" y="1290.13" width="4.20" height="2.00" fill="#8e8e8e" />
<rect x="232.20" y="1298.60" width="4.20" height="2.00" fill="#8e8e8e" />
<rect x="232.20" y="1307.07" width="4.20" height="2.00" fill="#8e8e8e" />
<rect x="232.20" y="1315.53" width="4.20" height="2.00" fill="#8e8e8e" />
<rect x="232.20" y="1324.00" width="8.00" height="2.00" fill="#8e8e8e" />
<rect x="232.20" y="1332.47" width="4.20" height="2.00" fill="#8e8e8e" />
<rect x="232.20" y="1340.93" width="4.20" height="2.00" fill="#8e8e8e" />
<rect x="232.20" y="1349.40" width="4.20" height="2.00" fill="#8e8e8e" />
<rect x="232.20" y="1357.87" width="4.20" height="2.00" fill="#8e8e8e" />
<rect x="232.20" y="1366.33" width="4.20" height="2.00" fill="#8e8e8e" />
<rect x="232.20" y="1374.80" width="8.00" height="2.00" fill="#8e8e8e" />
<rect x="232.20" y="1383.27" width="4.20" height="2.00" fill="#8e8e8e" />
<rect x="232.20" y="1391.73" width="4.20" height="2.00" fill="#8e8e8e" />
<rect x="232.20" y="1400.20" width="4.20" height="2.00" fill="#8e8e8e" />
<rect x="232.20" y="1408.67" width="4.20" height="2.00" fill="#8e8e8e" />
<rect x="232.20" y="1417.13" width="4.20" height="2.00" fill="#8e8e8e" />
<rect x="232.20" y="1425.60" width="8.00" height="2.00" fill="#8e8e8e" />
<rect x="232.20" y="1434.07" width="4.20" height="2.00" fill="#8e8e8e" />
<rect x="232.20" y="1442.53" width="4.20" height="2.00" fill="#8e8e8e" />
<rect x="232.20" y="1451.00" width="4.20" height="2.00" fill="#8e8e8e" />
<rect x="232.20" y="1459.47" width="4.20" height="2.00" fill="#8e8e8e" />
<rect x="232.20" y="1467.93" width="4.20" height="2.00" fill="#8e8e8e" />
<rect x="232.20" y="1476.40" width="8.00" height="2.00" fill="#8e8e8e" />
<rect x="232.20" y="1484.87" width="4.20" height="2.00" fill="#8e8e8e" />
<rect x="232.20" y="1493.34" width="4.20" height="2.00" fill="#8e8e8e" />
<rect x="232.20" y="1501.80" width="4.20" height="2.00" fill="#8e8e8e" />
<rect x="232.20" y="1510.27" width="4.20" height="2.00" fill="#8e8e8e" />
<rect x="232.20" y="1518.74" width="4.20" height="2.00" fill="#8e8e8e" />
<rect x="232.20" y="1527.20" width="8.00" height="2.00" fill="#8e8e8e" />
<rect x="232.20" y="1535.67" width="4.20" height="2.00" fill="#8e8e8e" />
<rect x="232.20" y="1544.14" width="4.20" height="2.00" fill="#8e8e8e" />
<rect x="232.20" y="1552.60" width="4.20" height="2.00" fill="#8e8e8e" />
<rect x="232.20" y="1561.07" width="4.20" height="2.00" fill="#8e8e8e" />
<rect x="232.20" y="1569.54" width="4.20" height="2.00" fill="#8e8e8e" />
<rect x="232.20" y="1578.00" width="8.00" height="2.00" fill="#8e8e8e" />
<text transform="translate(246.94,1077.60) scale(1.0351,1)" font-size="18.26" fill="#9a9a9a" stroke="#9a9a9a" stroke-width="0.4" >0</text>
<text transform="translate(246.85,1128.40) scale(1.0351,1)" font-size="18.26" fill="#9a9a9a" stroke="#9a9a9a" stroke-width="0.4" >-6</text>
<text transform="translate(246.85,1179.20) scale(1.0351,1)" font-size="18.26" fill="#9a9a9a" stroke="#9a9a9a" stroke-width="0.4" >-12</text>
<text transform="translate(246.85,1230.00) scale(1.0351,1)" font-size="18.26" fill="#9a9a9a" stroke="#9a9a9a" stroke-width="0.4" >-18</text>
<text transform="translate(246.85,1280.80) scale(1.0351,1)" font-size="18.26" fill="#9a9a9a" stroke="#9a9a9a" stroke-width="0.4" >-24</text>
<text transform="translate(246.85,1331.60) scale(1.0351,1)" font-size="18.26" fill="#9a9a9a" stroke="#9a9a9a" stroke-width="0.4" >-30</text>
<text transform="translate(246.85,1382.40) scale(1.0351,1)" font-size="18.26" fill="#9a9a9a" stroke="#9a9a9a" stroke-width="0.4" >-36</text>
<text transform="translate(246.85,1433.20) scale(1.0351,1)" font-size="18.26" fill="#9a9a9a" stroke="#9a9a9a" stroke-width="0.4" >-42</text>
<text transform="translate(246.85,1484.00) scale(1.0351,1)" font-size="18.26" fill="#9a9a9a" stroke="#9a9a9a" stroke-width="0.4" >-48</text>
<text transform="translate(246.85,1534.80) scale(1.0351,1)" font-size="18.26" fill="#9a9a9a" stroke="#9a9a9a" stroke-width="0.4" >-54</text>
<text transform="translate(246.76,1580.00) scale(0.8987,1)" font-size="20.58" fill="#9a9a9a" stroke="#9a9a9a" stroke-width="0.4" >dB</text>
<rect x="154.30" y="1070.00" width="5.60" height="499.70" fill="#000" />
<rect x="156.10" y="1072.00" width="2.00" height="495.70" fill="#1f1f1f" />
<rect x="145.80" y="1080.00" width="7.60" height="2.00" fill="#8e8e8e" />
<rect x="158.60" y="1080.00" width="7.60" height="2.00" fill="#8e8e8e" />
<text transform="translate(132.31,1088.00) scale(0.9478,1)" font-size="17.39" fill="#9a9a9a" stroke="#9a9a9a" stroke-width="0.4" >6</text>
<rect x="145.80" y="1134.00" width="7.60" height="2.00" fill="#8e8e8e" />
<rect x="158.60" y="1134.00" width="7.60" height="2.00" fill="#8e8e8e" />
<text transform="translate(132.31,1142.00) scale(0.9478,1)" font-size="17.39" fill="#9a9a9a" stroke="#9a9a9a" stroke-width="0.4" >3</text>
<rect x="145.80" y="1177.00" width="7.60" height="2.00" fill="#8e8e8e" />
<rect x="158.60" y="1177.00" width="7.60" height="2.00" fill="#8e8e8e" />
<text transform="translate(132.39,1185.00) scale(0.9478,1)" font-size="17.39" fill="#9a9a9a" stroke="#9a9a9a" stroke-width="0.4" >1</text>
<rect x="145.80" y="1201.00" width="7.60" height="2.00" fill="#8e8e8e" />
<rect x="158.60" y="1201.00" width="7.60" height="2.00" fill="#8e8e8e" />
<text transform="translate(132.23,1209.00) scale(0.9478,1)" font-size="17.39" fill="#9a9a9a" stroke="#9a9a9a" stroke-width="0.4" >0</text>
<rect x="145.80" y="1223.00" width="7.60" height="2.00" fill="#8e8e8e" />
<rect x="158.60" y="1223.00" width="7.60" height="2.00" fill="#8e8e8e" />
<text transform="translate(126.87,1231.00) scale(0.9478,1)" font-size="17.39" fill="#9a9a9a" stroke="#9a9a9a" stroke-width="0.4" >-1</text>
<rect x="145.80" y="1284.00" width="7.60" height="2.00" fill="#8e8e8e" />
<rect x="158.60" y="1284.00" width="7.60" height="2.00" fill="#8e8e8e" />
<text transform="translate(126.62,1292.00) scale(0.9478,1)" font-size="17.39" fill="#9a9a9a" stroke="#9a9a9a" stroke-width="0.4" >-4</text>
<rect x="145.80" y="1334.00" width="7.60" height="2.00" fill="#8e8e8e" />
<rect x="158.60" y="1334.00" width="7.60" height="2.00" fill="#8e8e8e" />
<text transform="translate(126.95,1342.00) scale(0.9478,1)" font-size="17.39" fill="#9a9a9a" stroke="#9a9a9a" stroke-width="0.4" >-7</text>
<rect x="145.80" y="1376.00" width="7.60" height="2.00" fill="#8e8e8e" />
<rect x="158.60" y="1376.00" width="7.60" height="2.00" fill="#8e8e8e" />
<text transform="translate(117.56,1384.00) scale(0.9478,1)" font-size="17.39" fill="#9a9a9a" stroke="#9a9a9a" stroke-width="0.4" >-10</text>
<rect x="145.80" y="1408.00" width="7.60" height="2.00" fill="#8e8e8e" />
<rect x="158.60" y="1408.00" width="7.60" height="2.00" fill="#8e8e8e" />
<text transform="translate(117.64,1416.00) scale(0.9478,1)" font-size="17.39" fill="#9a9a9a" stroke="#9a9a9a" stroke-width="0.4" >-13</text>
<rect x="145.80" y="1436.00" width="7.60" height="2.00" fill="#8e8e8e" />
<rect x="158.60" y="1436.00" width="7.60" height="2.00" fill="#8e8e8e" />
<text transform="translate(117.64,1444.00) scale(0.9478,1)" font-size="17.39" fill="#9a9a9a" stroke="#9a9a9a" stroke-width="0.4" >-16</text>
<rect x="145.80" y="1458.00" width="7.60" height="2.00" fill="#8e8e8e" />
<rect x="158.60" y="1458.00" width="7.60" height="2.00" fill="#8e8e8e" />
<text transform="translate(117.72,1466.00) scale(0.9478,1)" font-size="17.39" fill="#9a9a9a" stroke="#9a9a9a" stroke-width="0.4" >-19</text>
<rect x="145.80" y="1492.00" width="7.60" height="2.00" fill="#8e8e8e" />
<rect x="158.60" y="1492.00" width="7.60" height="2.00" fill="#8e8e8e" />
<text transform="translate(117.64,1500.00) scale(0.9478,1)" font-size="17.39" fill="#9a9a9a" stroke="#9a9a9a" stroke-width="0.4" >-25</text>
<rect x="145.80" y="1514.00" width="7.60" height="2.00" fill="#8e8e8e" />
<rect x="158.60" y="1514.00" width="7.60" height="2.00" fill="#8e8e8e" />
<text transform="translate(117.72,1522.00) scale(0.9478,1)" font-size="17.39" fill="#9a9a9a" stroke="#9a9a9a" stroke-width="0.4" >-31</text>
<rect x="145.80" y="1542.00" width="7.60" height="2.00" fill="#8e8e8e" />
<rect x="158.60" y="1542.00" width="7.60" height="2.00" fill="#8e8e8e" />
<rect x="145.80" y="1558.00" width="7.60" height="2.00" fill="#8e8e8e" />
<rect x="158.60" y="1558.00" width="7.60" height="2.00" fill="#8e8e8e" />
<text transform="translate(124.23,1566.00) scale(0.9478,1)" font-size="17.39" fill="#9a9a9a" stroke="#9a9a9a" stroke-width="0.4" >-∞</text>
<rect x="152.00" y="1097.80" width="2.00" height="2.00" fill="#8e8e8e" />
<rect x="152.00" y="1113.70" width="2.00" height="2.00" fill="#8e8e8e" />
<rect x="152.00" y="1144.00" width="2.00" height="2.00" fill="#8e8e8e" />
<rect x="152.00" y="1154.00" width="2.00" height="2.00" fill="#8e8e8e" />
<rect x="152.00" y="1166.00" width="2.00" height="2.00" fill="#8e8e8e" />
<rect x="152.00" y="1244.00" width="2.00" height="2.00" fill="#8e8e8e" />
<rect x="152.00" y="1266.00" width="2.00" height="2.00" fill="#8e8e8e" />
<rect x="152.00" y="1301.80" width="2.00" height="2.00" fill="#8e8e8e" />
<rect x="152.00" y="1318.00" width="2.00" height="2.00" fill="#8e8e8e" />
<rect x="152.00" y="1350.00" width="2.00" height="2.00" fill="#8e8e8e" />
<rect x="152.00" y="1361.80" width="2.00" height="2.00" fill="#8e8e8e" />
<rect x="152.00" y="1387.80" width="2.00" height="2.00" fill="#8e8e8e" />
<rect x="152.00" y="1397.70" width="2.00" height="2.00" fill="#8e8e8e" />
<rect x="152.00" y="1417.80" width="2.00" height="2.00" fill="#8e8e8e" />
<rect x="152.00" y="1428.00" width="2.00" height="2.00" fill="#8e8e8e" />
<rect x="152.00" y="1443.60" width="2.00" height="2.00" fill="#8e8e8e" />
<rect x="152.00" y="1452.00" width="2.00" height="2.00" fill="#8e8e8e" />
<rect x="152.00" y="1465.50" width="2.00" height="2.00" fill="#8e8e8e" />
<rect x="152.00" y="1474.60" width="2.00" height="2.00" fill="#8e8e8e" />
<rect x="152.00" y="1482.00" width="2.00" height="2.00" fill="#8e8e8e" />
<rect x="152.00" y="1489.50" width="2.00" height="2.00" fill="#8e8e8e" />
<rect x="152.00" y="1496.60" width="2.00" height="2.00" fill="#8e8e8e" />
<rect x="152.00" y="1500.40" width="2.00" height="2.00" fill="#8e8e8e" />
<rect x="152.00" y="1504.30" width="2.00" height="2.00" fill="#8e8e8e" />
<rect x="152.00" y="1508.20" width="2.00" height="2.00" fill="#8e8e8e" />
<rect x="152.00" y="1521.80" width="2.00" height="2.00" fill="#8e8e8e" />
<rect x="152.00" y="1528.20" width="2.00" height="2.00" fill="#8e8e8e" />
<rect x="152.00" y="1534.00" width="2.00" height="2.00" fill="#8e8e8e" />
<rect x="152.00" y="1538.60" width="2.00" height="2.00" fill="#8e8e8e" />
<rect x="146" y="1172" width="22" height="58" rx="5" fill="#1b1b1b" stroke="#828282" stroke-width="4"/>
<rect x="152" y="1199.3" width="10" height="3.6" rx="1.8" fill="#828282"/>
<text transform="translate(121.18,1619.00) scale(0.8967,1)" font-size="22.90" fill="#4a96f5" stroke="#4a96f5" stroke-width="0.4" >0.0</text>
<text transform="translate(109.00,1662.00) scale(0.8845,1)" font-size="23.48" fill="#9a9a9a" stroke="#9a9a9a" stroke-width="0.4" >A1</text>
<g clip-path="url(#nm0)"><text transform="translate(163.69,1662.00) scale(0.9424,1)" font-size="24.06" fill="#bdbdbd" stroke="#bdbdbd" stroke-width="0.4" >Dialog 1 or</text></g>
<rect x="280.20" y="224.00" width="1.60" height="1455.50" fill="#272727" />
<rect x="297.00" y="384.00" width="161.50" height="2.20" fill="#3c3c3c" />
<path d="M440.00 247.45 L451.00 247.45 L445.50 253.95 Z" fill="#6f6f6f"/>
<path d="M440.00 277.75 L451.00 277.75 L445.50 284.25 Z" fill="#6f6f6f"/>
<path d="M440.00 307.75 L451.00 307.75 L445.50 314.25 Z" fill="#6f6f6f"/>
<path d="M440.00 337.75 L451.00 337.75 L445.50 344.25 Z" fill="#6f6f6f"/>
<path d="M440.00 368.05 L451.00 368.05 L445.50 374.55 Z" fill="#6f6f6f"/>
<path d="M440.00 397.15 L451.00 397.15 L445.50 403.65 Z" fill="#6f6f6f"/>
<path d="M440.00 427.35 L451.00 427.35 L445.50 433.85 Z" fill="#6f6f6f"/>
<path d="M440.00 457.75 L451.00 457.75 L445.50 464.25 Z" fill="#6f6f6f"/>
<path d="M440.00 487.35 L451.00 487.35 L445.50 493.85 Z" fill="#6f6f6f"/>
<path d="M440.00 517.45 L451.00 517.45 L445.50 523.95 Z" fill="#6f6f6f"/>
<path d="M296.5 541 Q297.5 535.3 304 535.3 L438.6 535.3" fill="none" stroke="#7a7a7a" stroke-width="2"/>
<circle cx="438.6" cy="551.4" r="16.2" fill="none" stroke="#777" stroke-width="2.2"/>
<path d="M429.85 681.00 L437.20 688.00 L444.55 681.00" fill="none" stroke="#3a3a3a" stroke-width="2.2"/>
<text transform="translate(303.18,740.00) scale(0.8879,1)" font-size="24.20" fill="#c6c6c6" stroke="#c6c6c6" stroke-width="0.4" >Diag sub</text>
<path d="M429.85 727.00 L437.20 735.40 L444.55 727.00" fill="none" stroke="#c8c8c8" stroke-width="2.2"/>
<circle cx="376" cy="813" r="44.05" fill="none" stroke="#858585" stroke-width="3.4"/>
<rect x="374.20" y="770.60" width="3.60" height="42.60" fill="#858585" />
<text transform="translate(317.08,856.20) scale(0.9788,1)" font-size="23.19" fill="#4a96f5" stroke="#4a96f5" stroke-width="0.4" >L</text>
<text transform="translate(425.14,856.20) scale(0.8408,1)" font-size="23.19" fill="#4a96f5" stroke="#4a96f5" stroke-width="0.4" >R</text>
<text transform="translate(362.18,890.00) scale(0.9260,1)" font-size="22.17" fill="#4a96f5" stroke="#4a96f5" stroke-width="0.4" >0.0</text>
<text transform="translate(303.24,973.50) scale(0.8932,1)" font-size="23.19" fill="#c6c6c6" stroke="#c6c6c6" stroke-width="0.4" >Read</text>
<path d="M429.85 961.30 L437.20 969.70 L444.55 961.30" fill="none" stroke="#c8c8c8" stroke-width="2.2"/>
<g fill="#bababa"><rect x="325.65" y="1003.9" width="2.2" height="14.2"/><rect x="338.15" y="1003.9" width="2.2" height="14.2"/></g>
<path d="M326.75 1005.10 L333.00 1011.80 L339.25 1005.10" fill="none" stroke="#bababa" stroke-width="2.3"/>
<g fill="#bababa"><rect x="373.85" y="1003.90" width="8.2" height="2.2"/><rect x="371.65" y="1006.10" width="2.2" height="3.5"/><rect x="373.85" y="1009.60" width="6.2" height="2.2"/><rect x="380.05" y="1011.80" width="2.0" height="4.1"/><rect x="371.65" y="1015.90" width="8.4" height="2.2"/></g>
<g fill="#bababa"><rect x="415.80" y="1003.90" width="2.2" height="14.2"/><rect x="418.00" y="1003.90" width="6.0" height="2.2"/><rect x="424.00" y="1006.10" width="2.1" height="3.5"/><rect x="418.00" y="1009.60" width="6.0" height="2.2"/><rect x="424.00" y="1011.80" width="2.1" height="6.3"/></g>
<text transform="translate(311.84,1065.70) scale(0.9929,1)" font-size="16.67" fill="#9a9a9a" stroke="#9a9a9a" stroke-width="0.4" >dB</text>
<rect x="372.00" y="1048.00" width="49.80" height="535.60" fill="#000" />
<rect x="374.00" y="1050.00" width="45.80" height="531.60" fill="#161616" />
<rect x="374.00" y="1066.80" width="45.80" height="2.00" fill="#000" />
<rect x="396.20" y="1050.00" width="1.80" height="17.00" fill="#000" />
<rect x="374.00" y="1578.00" width="22.00" height="2.30" fill="#f2f200" />
<rect x="398.00" y="1578.00" width="21.80" height="2.30" fill="#f2f200" />
<rect x="422.20" y="1070.00" width="8.00" height="2.00" fill="#8e8e8e" />
<rect x="422.20" y="1078.47" width="4.20" height="2.00" fill="#8e8e8e" />
<rect x="422.20" y="1086.93" width="4.20" height="2.00" fill="#8e8e8e" />
<rect x="422.20" y="1095.40" width="4.20" height="2.00" fill="#8e8e8e" />
<rect x="422.20" y="1103.87" width="4.20" height="2.00" fill="#8e8e8e" />
<rect x="422.20" y="1112.33" width="4.20" height="2.00" fill="#8e8e8e" />
<rect x="422.20" y="1120.80" width="8.00" height="2.00" fill="#8e8e8e" />
<rect x="422.20" y="1129.27" width="4.20" height="2.00" fill="#8e8e8e" />
<rect x="422.20" y="1137.73" width="4.20" height="2.00" fill="#8e8e8e" />
<rect x="422.20" y="1146.20" width="4.20" height="2.00" fill="#8e8e8e" />
<rect x="422.20" y="1154.67" width="4.20" height="2.00" fill="#8e8e8e" />
<rect x="422.20" y="1163.13" width="4.20" height="2.00" fill="#8e8e8e" />
<rect x="422.20" y="1171.60" width="8.00" height="2.00" fill="#8e8e8e" />
<rect x="422.20" y="1180.07" width="4.20" height="2.00" fill="#8e8e8e" />
<rect x="422.20" y="1188.53" width="4.20" height="2.00" fill="#8e8e8e" />
<rect x="422.20" y="1197.00" width="4.20" height="2.00" fill="#8e8e8e" />
<rect x="422.20" y="1205.47" width="4.20" height="2.00" fill="#8e8e8e" />
<rect x="422.20" y="1213.93" width="4.20" height="2.00" fill="#8e8e8e" />
<rect x="422.20" y="1222.40" width="8.00" height="2.00" fill="#8e8e8e" />
<rect x="422.20" y="1230.87" width="4.20" height="2.00" fill="#8e8e8e" />
<rect x="422.20" y="1239.33" width="4.20" height="2.00" fill="#8e8e8e" />
<rect x="422.20" y="1247.80" width="4.20" height="2.00" fill="#8e8e8e" />
<rect x="422.20" y="1256.27" width="4.20" height="2.00" fill="#8e8e8e" />
<rect x="422.20" y="1264.73" width="4.20" height="2.00" fill="#8e8e8e" />
<rect x="422.20" y="1273.20" width="8.00" height="2.00" fill="#8e8e8e" />
<rect x="422.20" y="1281.67" width="4.20" height="2.00" fill="#8e8e8e" />
<rect x="422.20" y="1290.13" width="4.20" height="2.00" fill="#8e8e8e" />
<rect x="422.20" y="1298.60" width="4.20" height="2.00" fill="#8e8e8e" />
<rect x="422.20" y="1307.07" width="4.20" height="2.00" fill="#8e8e8e" />
<rect x="422.20" y="1315.53" width="4.20" height="2.00" fill="#8e8e8e" />
<rect x="422.20" y="1324.00" width="8.00" height="2.00" fill="#8e8e8e" />
<rect x="422.20" y="1332.47" width="4.20" height="2.00" fill="#8e8e8e" />
<rect x="422.20" y="1340.93" width="4.20" height="2.00" fill="#8e8e8e" />
<rect x="422.20" y="1349.40" width="4.20" height="2.00" fill="#8e8e8e" />
<rect x="422.20" y="1357.87" width="4.20" height="2.00" fill="#8e8e8e" />
<rect x="422.20" y="1366.33" width="4.20" height="2.00" fill="#8e8e8e" />
<rect x="422.20" y="1374.80" width="8.00" height="2.00" fill="#8e8e8e" />
<rect x="422.20" y="1383.27" width="4.20" height="2.00" fill="#8e8e8e" />
<rect x="422.20" y="1391.73" width="4.20" height="2.00" fill="#8e8e8e" />
<rect x="422.20" y="1400.20" width="4.20" height="2.00" fill="#8e8e8e" />
<rect x="422.20" y="1408.67" width="4.20" height="2.00" fill="#8e8e8e" />
<rect x="422.20" y="1417.13" width="4.20" height="2.00" fill="#8e8e8e" />
<rect x="422.20" y="1425.60" width="8.00" height="2.00" fill="#8e8e8e" />
<rect x="422.20" y="1434.07" width="4.20" height="2.00" fill="#8e8e8e" />
<rect x="422.20" y="1442.53" width="4.20" height="2.00" fill="#8e8e8e" />
<rect x="422.20" y="1451.00" width="4.20" height="2.00" fill="#8e8e8e" />
<rect x="422.20" y="1459.47" width="4.20" height="2.00" fill="#8e8e8e" />
<rect x="422.20" y="1467.93" width="4.20" height="2.00" fill="#8e8e8e" />
<rect x="422.20" y="1476.40" width="8.00" height="2.00" fill="#8e8e8e" />
<rect x="422.20" y="1484.87" width="4.20" height="2.00" fill="#8e8e8e" />
<rect x="422.20" y="1493.34" width="4.20" height="2.00" fill="#8e8e8e" />
<rect x="422.20" y="1501.80" width="4.20" height="2.00" fill="#8e8e8e" />
<rect x="422.20" y="1510.27" width="4.20" height="2.00" fill="#8e8e8e" />
<rect x="422.20" y="1518.74" width="4.20" height="2.00" fill="#8e8e8e" />
<rect x="422.20" y="1527.20" width="8.00" height="2.00" fill="#8e8e8e" />
<rect x="422.20" y="1535.67" width="4.20" height="2.00" fill="#8e8e8e" />
<rect x="422.20" y="1544.14" width="4.20" height="2.00" fill="#8e8e8e" />
<rect x="422.20" y="1552.60" width="4.20" height="2.00" fill="#8e8e8e" />
<rect x="422.20" y="1561.07" width="4.20" height="2.00" fill="#8e8e8e" />
<rect x="422.20" y="1569.54" width="4.20" height="2.00" fill="#8e8e8e" />
<rect x="422.20" y="1578.00" width="8.00" height="2.00" fill="#8e8e8e" />
<text transform="translate(436.94,1077.60) scale(1.0351,1)" font-size="18.26" fill="#9a9a9a" stroke="#9a9a9a" stroke-width="0.4" >0</text>
<text transform="translate(436.85,1128.40) scale(1.0351,1)" font-size="18.26" fill="#9a9a9a" stroke="#9a9a9a" stroke-width="0.4" >-6</text>
<text transform="translate(436.85,1179.20) scale(1.0351,1)" font-size="18.26" fill="#9a9a9a" stroke="#9a9a9a" stroke-width="0.4" >-12</text>
<text transform="translate(436.85,1230.00) scale(1.0351,1)" font-size="18.26" fill="#9a9a9a" stroke="#9a9a9a" stroke-width="0.4" >-18</text>
<text transform="translate(436.85,1280.80) scale(1.0351,1)" font-size="18.26" fill="#9a9a9a" stroke="#9a9a9a" stroke-width="0.4" >-24</text>
<text transform="translate(436.85,1331.60) scale(1.0351,1)" font-size="18.26" fill="#9a9a9a" stroke="#9a9a9a" stroke-width="0.4" >-30</text>
<text transform="translate(436.85,1382.40) scale(1.0351,1)" font-size="18.26" fill="#9a9a9a" stroke="#9a9a9a" stroke-width="0.4" >-36</text>
<text transform="translate(436.85,1433.20) scale(1.0351,1)" font-size="18.26" fill="#9a9a9a" stroke="#9a9a9a" stroke-width="0.4" >-42</text>
<text transform="translate(436.85,1484.00) scale(1.0351,1)" font-size="18.26" fill="#9a9a9a" stroke="#9a9a9a" stroke-width="0.4" >-48</text>
<text transform="translate(436.85,1534.80) scale(1.0351,1)" font-size="18.26" fill="#9a9a9a" stroke="#9a9a9a" stroke-width="0.4" >-54</text>
<text transform="translate(436.76,1580.00) scale(0.8987,1)" font-size="20.58" fill="#9a9a9a" stroke="#9a9a9a" stroke-width="0.4" >dB</text>
<rect x="344.30" y="1070.00" width="5.60" height="499.70" fill="#000" />
<rect x="346.10" y="1072.00" width="2.00" height="495.70" fill="#1f1f1f" />
<rect x="335.80" y="1080.00" width="7.60" height="2.00" fill="#8e8e8e" />
<rect x="348.60" y="1080.00" width="7.60" height="2.00" fill="#8e8e8e" />
<text transform="translate(322.31,1088.00) scale(0.9478,1)" font-size="17.39" fill="#9a9a9a" stroke="#9a9a9a" stroke-width="0.4" >6</text>
<rect x="335.80" y="1134.00" width="7.60" height="2.00" fill="#8e8e8e" />
<rect x="348.60" y="1134.00" width="7.60" height="2.00" fill="#8e8e8e" />
<text transform="translate(322.31,1142.00) scale(0.9478,1)" font-size="17.39" fill="#9a9a9a" stroke="#9a9a9a" stroke-width="0.4" >3</text>
<rect x="335.80" y="1177.00" width="7.60" height="2.00" fill="#8e8e8e" />
<rect x="348.60" y="1177.00" width="7.60" height="2.00" fill="#8e8e8e" />
<text transform="translate(322.39,1185.00) scale(0.9478,1)" font-size="17.39" fill="#9a9a9a" stroke="#9a9a9a" stroke-width="0.4" >1</text>
<rect x="335.80" y="1201.00" width="7.60" height="2.00" fill="#8e8e8e" />
<rect x="348.60" y="1201.00" width="7.60" height="2.00" fill="#8e8e8e" />
<text transform="translate(322.23,1209.00) scale(0.9478,1)" font-size="17.39" fill="#9a9a9a" stroke="#9a9a9a" stroke-width="0.4" >0</text>
<rect x="335.80" y="1223.00" width="7.60" height="2.00" fill="#8e8e8e" />
<rect x="348.60" y="1223.00" width="7.60" height="2.00" fill="#8e8e8e" />
<text transform="translate(316.87,1231.00) scale(0.9478,1)" font-size="17.39" fill="#9a9a9a" stroke="#9a9a9a" stroke-width="0.4" >-1</text>
<rect x="335.80" y="1284.00" width="7.60" height="2.00" fill="#8e8e8e" />
<rect x="348.60" y="1284.00" width="7.60" height="2.00" fill="#8e8e8e" />
<text transform="translate(316.62,1292.00) scale(0.9478,1)" font-size="17.39" fill="#9a9a9a" stroke="#9a9a9a" stroke-width="0.4" >-4</text>
<rect x="335.80" y="1334.00" width="7.60" height="2.00" fill="#8e8e8e" />
<rect x="348.60" y="1334.00" width="7.60" height="2.00" fill="#8e8e8e" />
<text transform="translate(316.95,1342.00) scale(0.9478,1)" font-size="17.39" fill="#9a9a9a" stroke="#9a9a9a" stroke-width="0.4" >-7</text>
<rect x="335.80" y="1376.00" width="7.60" height="2.00" fill="#8e8e8e" />
<rect x="348.60" y="1376.00" width="7.60" height="2.00" fill="#8e8e8e" />
<text transform="translate(307.56,1384.00) scale(0.9478,1)" font-size="17.39" fill="#9a9a9a" stroke="#9a9a9a" stroke-width="0.4" >-10</text>
<rect x="335.80" y="1408.00" width="7.60" height="2.00" fill="#8e8e8e" />
<rect x="348.60" y="1408.00" width="7.60" height="2.00" fill="#8e8e8e" />
<text transform="translate(307.64,1416.00) scale(0.9478,1)" font-size="17.39" fill="#9a9a9a" stroke="#9a9a9a" stroke-width="0.4" >-13</text>
<rect x="335.80" y="1436.00" width="7.60" height="2.00" fill="#8e8e8e" />
<rect x="348.60" y="1436.00" width="7.60" height="2.00" fill="#8e8e8e" />
<text transform="translate(307.64,1444.00) scale(0.9478,1)" font-size="17.39" fill="#9a9a9a" stroke="#9a9a9a" stroke-width="0.4" >-16</text>
<rect x="335.80" y="1458.00" width="7.60" height="2.00" fill="#8e8e8e" />
<rect x="348.60" y="1458.00" width="7.60" height="2.00" fill="#8e8e8e" />
<text transform="translate(307.72,1466.00) scale(0.9478,1)" font-size="17.39" fill="#9a9a9a" stroke="#9a9a9a" stroke-width="0.4" >-19</text>
<rect x="335.80" y="1492.00" width="7.60" height="2.00" fill="#8e8e8e" />
<rect x="348.60" y="1492.00" width="7.60" height="2.00" fill="#8e8e8e" />
<text transform="translate(307.64,1500.00) scale(0.9478,1)" font-size="17.39" fill="#9a9a9a" stroke="#9a9a9a" stroke-width="0.4" >-25</text>
<rect x="335.80" y="1514.00" width="7.60" height="2.00" fill="#8e8e8e" />
<rect x="348.60" y="1514.00" width="7.60" height="2.00" fill="#8e8e8e" />
<text transform="translate(307.72,1522.00) scale(0.9478,1)" font-size="17.39" fill="#9a9a9a" stroke="#9a9a9a" stroke-width="0.4" >-31</text>
<rect x="335.80" y="1542.00" width="7.60" height="2.00" fill="#8e8e8e" />
<rect x="348.60" y="1542.00" width="7.60" height="2.00" fill="#8e8e8e" />
<rect x="335.80" y="1558.00" width="7.60" height="2.00" fill="#8e8e8e" />
<rect x="348.60" y="1558.00" width="7.60" height="2.00" fill="#8e8e8e" />
<text transform="translate(314.23,1566.00) scale(0.9478,1)" font-size="17.39" fill="#9a9a9a" stroke="#9a9a9a" stroke-width="0.4" >-∞</text>
<rect x="342.00" y="1097.80" width="2.00" height="2.00" fill="#8e8e8e" />
<rect x="342.00" y="1113.70" width="2.00" height="2.00" fill="#8e8e8e" />
<rect x="342.00" y="1144.00" width="2.00" height="2.00" fill="#8e8e8e" />
<rect x="342.00" y="1154.00" width="2.00" height="2.00" fill="#8e8e8e" />
<rect x="342.00" y="1166.00" width="2.00" height="2.00" fill="#8e8e8e" />
<rect x="342.00" y="1244.00" width="2.00" height="2.00" fill="#8e8e8e" />
<rect x="342.00" y="1266.00" width="2.00" height="2.00" fill="#8e8e8e" />
<rect x="342.00" y="1301.80" width="2.00" height="2.00" fill="#8e8e8e" />
<rect x="342.00" y="1318.00" width="2.00" height="2.00" fill="#8e8e8e" />
<rect x="342.00" y="1350.00" width="2.00" height="2.00" fill="#8e8e8e" />
<rect x="342.00" y="1361.80" width="2.00" height="2.00" fill="#8e8e8e" />
<rect x="342.00" y="1387.80" width="2.00" height="2.00" fill="#8e8e8e" />
<rect x="342.00" y="1397.70" width="2.00" height="2.00" fill="#8e8e8e" />
<rect x="342.00" y="1417.80" width="2.00" height="2.00" fill="#8e8e8e" />
<rect x="342.00" y="1428.00" width="2.00" height="2.00" fill="#8e8e8e" />
<rect x="342.00" y="1443.60" width="2.00" height="2.00" fill="#8e8e8e" />
<rect x="342.00" y="1452.00" width="2.00" height="2.00" fill="#8e8e8e" />
<rect x="342.00" y="1465.50" width="2.00" height="2.00" fill="#8e8e8e" />
<rect x="342.00" y="1474.60" width="2.00" height="2.00" fill="#8e8e8e" />
<rect x="342.00" y="1482.00" width="2.00" height="2.00" fill="#8e8e8e" />
<rect x="342.00" y="1489.50" width="2.00" height="2.00" fill="#8e8e8e" />
<rect x="342.00" y="1496.60" width="2.00" height="2.00" fill="#8e8e8e" />
<rect x="342.00" y="1500.40" width="2.00" height="2.00" fill="#8e8e8e" />
<rect x="342.00" y="1504.30" width="2.00" height="2.00" fill="#8e8e8e" />
<rect x="342.00" y="1508.20" width="2.00" height="2.00" fill="#8e8e8e" />
<rect x="342.00" y="1521.80" width="2.00" height="2.00" fill="#8e8e8e" />
<rect x="342.00" y="1528.20" width="2.00" height="2.00" fill="#8e8e8e" />
<rect x="342.00" y="1534.00" width="2.00" height="2.00" fill="#8e8e8e" />
<rect x="342.00" y="1538.60" width="2.00" height="2.00" fill="#8e8e8e" />
<rect x="336" y="1172" width="22" height="58" rx="5" fill="#1b1b1b" stroke="#828282" stroke-width="4"/>
<rect x="342" y="1199.3" width="10" height="3.6" rx="1.8" fill="#828282"/>
<text transform="translate(311.18,1619.00) scale(0.8967,1)" font-size="22.90" fill="#4a96f5" stroke="#4a96f5" stroke-width="0.4" >0.0</text>
<text transform="translate(299.00,1662.00) scale(0.8883,1)" font-size="23.48" fill="#9a9a9a" stroke="#9a9a9a" stroke-width="0.4" >A2</text>
<text transform="translate(372.01,1662.00) scale(0.9248,1)" font-size="24.06" fill="#bdbdbd" stroke="#bdbdbd" stroke-width="0.4" >Diag 2</text>
<rect x="470.20" y="224.00" width="1.60" height="1455.50" fill="#272727" />
<rect x="487.00" y="384.00" width="161.50" height="2.20" fill="#3c3c3c" />
<path d="M630.00 247.45 L641.00 247.45 L635.50 253.95 Z" fill="#6f6f6f"/>
<path d="M630.00 277.75 L641.00 277.75 L635.50 284.25 Z" fill="#6f6f6f"/>
<path d="M630.00 307.75 L641.00 307.75 L635.50 314.25 Z" fill="#6f6f6f"/>
<path d="M630.00 337.75 L641.00 337.75 L635.50 344.25 Z" fill="#6f6f6f"/>
<path d="M630.00 368.05 L641.00 368.05 L635.50 374.55 Z" fill="#6f6f6f"/>
<path d="M630.00 397.15 L641.00 397.15 L635.50 403.65 Z" fill="#6f6f6f"/>
<path d="M630.00 427.35 L641.00 427.35 L635.50 433.85 Z" fill="#6f6f6f"/>
<path d="M630.00 457.75 L641.00 457.75 L635.50 464.25 Z" fill="#6f6f6f"/>
<path d="M630.00 487.35 L641.00 487.35 L635.50 493.85 Z" fill="#6f6f6f"/>
<path d="M630.00 517.45 L641.00 517.45 L635.50 523.95 Z" fill="#6f6f6f"/>
<path d="M486.5 541 Q487.5 535.3 494 535.3 L628.6 535.3" fill="none" stroke="#7a7a7a" stroke-width="2"/>
<circle cx="628.6" cy="551.4" r="16.2" fill="none" stroke="#777" stroke-width="2.2"/>
<path d="M619.85 681.00 L627.20 688.00 L634.55 681.00" fill="none" stroke="#3a3a3a" stroke-width="2.2"/>
<text transform="translate(493.93,740.00) scale(0.8879,1)" font-size="24.20" fill="#c6c6c6" stroke="#c6c6c6" stroke-width="0.4" >SFX sub</text>
<path d="M619.85 727.00 L627.20 735.40 L634.55 727.00" fill="none" stroke="#c8c8c8" stroke-width="2.2"/>
<circle cx="566" cy="813" r="44.05" fill="none" stroke="#858585" stroke-width="3.4"/>
<rect x="564.20" y="770.60" width="3.60" height="42.60" fill="#858585" />
<text transform="translate(507.08,856.20) scale(0.9788,1)" font-size="23.19" fill="#4a96f5" stroke="#4a96f5" stroke-width="0.4" >L</text>
<text transform="translate(615.14,856.20) scale(0.8408,1)" font-size="23.19" fill="#4a96f5" stroke="#4a96f5" stroke-width="0.4" >R</text>
<text transform="translate(552.18,890.00) scale(0.9260,1)" font-size="22.17" fill="#4a96f5" stroke="#4a96f5" stroke-width="0.4" >0.0</text>
<text transform="translate(493.24,973.50) scale(0.8932,1)" font-size="23.19" fill="#c6c6c6" stroke="#c6c6c6" stroke-width="0.4" >Read</text>
<path d="M619.85 961.30 L627.20 969.70 L634.55 961.30" fill="none" stroke="#c8c8c8" stroke-width="2.2"/>
<g fill="#bababa"><rect x="515.65" y="1003.9" width="2.2" height="14.2"/><rect x="528.15" y="1003.9" width="2.2" height="14.2"/></g>
<path d="M516.75 1005.10 L523.00 1011.80 L529.25 1005.10" fill="none" stroke="#bababa" stroke-width="2.3"/>
<g fill="#bababa"><rect x="563.85" y="1003.90" width="8.2" height="2.2"/><rect x="561.65" y="1006.10" width="2.2" height="3.5"/><rect x="563.85" y="1009.60" width="6.2" height="2.2"/><rect x="570.05" y="1011.80" width="2.0" height="4.1"/><rect x="561.65" y="1015.90" width="8.4" height="2.2"/></g>
<g fill="#bababa"><rect x="605.80" y="1003.90" width="2.2" height="14.2"/><rect x="608.00" y="1003.90" width="6.0" height="2.2"/><rect x="614.00" y="1006.10" width="2.1" height="3.5"/><rect x="608.00" y="1009.60" width="6.0" height="2.2"/><rect x="614.00" y="1011.80" width="2.1" height="6.3"/></g>
<text transform="translate(501.84,1065.70) scale(0.9929,1)" font-size="16.67" fill="#9a9a9a" stroke="#9a9a9a" stroke-width="0.4" >dB</text>
<rect x="562.00" y="1048.00" width="49.80" height="535.60" fill="#000" />
<rect x="564.00" y="1050.00" width="45.80" height="531.60" fill="#161616" />
<rect x="564.00" y="1066.80" width="45.80" height="2.00" fill="#000" />
<rect x="586.20" y="1050.00" width="1.80" height="17.00" fill="#000" />
<rect x="564.00" y="1578.00" width="22.00" height="2.30" fill="#f2f200" />
<rect x="588.00" y="1578.00" width="21.80" height="2.30" fill="#f2f200" />
<rect x="612.20" y="1070.00" width="8.00" height="2.00" fill="#8e8e8e" />
<rect x="612.20" y="1078.47" width="4.20" height="2.00" fill="#8e8e8e" />
<rect x="612.20" y="1086.93" width="4.20" height="2.00" fill="#8e8e8e" />
<rect x="612.20" y="1095.40" width="4.20" height="2.00" fill="#8e8e8e" />
<rect x="612.20" y="1103.87" width="4.20" height="2.00" fill="#8e8e8e" />
<rect x="612.20" y="1112.33" width="4.20" height="2.00" fill="#8e8e8e" />
<rect x="612.20" y="1120.80" width="8.00" height="2.00" fill="#8e8e8e" />
<rect x="612.20" y="1129.27" width="4.20" height="2.00" fill="#8e8e8e" />
<rect x="612.20" y="1137.73" width="4.20" height="2.00" fill="#8e8e8e" />
<rect x="612.20" y="1146.20" width="4.20" height="2.00" fill="#8e8e8e" />
<rect x="612.20" y="1154.67" width="4.20" height="2.00" fill="#8e8e8e" />
<rect x="612.20" y="1163.13" width="4.20" height="2.00" fill="#8e8e8e" />
<rect x="612.20" y="1171.60" width="8.00" height="2.00" fill="#8e8e8e" />
<rect x="612.20" y="1180.07" width="4.20" height="2.00" fill="#8e8e8e" />
<rect x="612.20" y="1188.53" width="4.20" height="2.00" fill="#8e8e8e" />
<rect x="612.20" y="1197.00" width="4.20" height="2.00" fill="#8e8e8e" />
<rect x="612.20" y="1205.47" width="4.20" height="2.00" fill="#8e8e8e" />
<rect x="612.20" y="1213.93" width="4.20" height="2.00" fill="#8e8e8e" />
<rect x="612.20" y="1222.40" width="8.00" height="2.00" fill="#8e8e8e" />
<rect x="612.20" y="1230.87" width="4.20" height="2.00" fill="#8e8e8e" />
<rect x="612.20" y="1239.33" width="4.20" height="2.00" fill="#8e8e8e" />
<rect x="612.20" y="1247.80" width="4.20" height="2.00" fill="#8e8e8e" />
<rect x="612.20" y="1256.27" width="4.20" height="2.00" fill="#8e8e8e" />
<rect x="612.20" y="1264.73" width="4.20" height="2.00" fill="#8e8e8e" />
<rect x="612.20" y="1273.20" width="8.00" height="2.00" fill="#8e8e8e" />
<rect x="612.20" y="1281.67" width="4.20" height="2.00" fill="#8e8e8e" />
<rect x="612.20" y="1290.13" width="4.20" height="2.00" fill="#8e8e8e" />
<rect x="612.20" y="1298.60" width="4.20" height="2.00" fill="#8e8e8e" />
<rect x="612.20" y="1307.07" width="4.20" height="2.00" fill="#8e8e8e" />
<rect x="612.20" y="1315.53" width="4.20" height="2.00" fill="#8e8e8e" />
<rect x="612.20" y="1324.00" width="8.00" height="2.00" fill="#8e8e8e" />
<rect x="612.20" y="1332.47" width="4.20" height="2.00" fill="#8e8e8e" />
<rect x="612.20" y="1340.93" width="4.20" height="2.00" fill="#8e8e8e" />
<rect x="612.20" y="1349.40" width="4.20" height="2.00" fill="#8e8e8e" />
<rect x="612.20" y="1357.87" width="4.20" height="2.00" fill="#8e8e8e" />
<rect x="612.20" y="1366.33" width="4.20" height="2.00" fill="#8e8e8e" />
<rect x="612.20" y="1374.80" width="8.00" height="2.00" fill="#8e8e8e" />
<rect x="612.20" y="1383.27" width="4.20" height="2.00" fill="#8e8e8e" />
<rect x="612.20" y="1391.73" width="4.20" height="2.00" fill="#8e8e8e" />
<rect x="612.20" y="1400.20" width="4.20" height="2.00" fill="#8e8e8e" />
<rect x="612.20" y="1408.67" width="4.20" height="2.00" fill="#8e8e8e" />
<rect x="612.20" y="1417.13" width="4.20" height="2.00" fill="#8e8e8e" />
<rect x="612.20" y="1425.60" width="8.00" height="2.00" fill="#8e8e8e" />
<rect x="612.20" y="1434.07" width="4.20" height="2.00" fill="#8e8e8e" />
<rect x="612.20" y="1442.53" width="4.20" height="2.00" fill="#8e8e8e" />
<rect x="612.20" y="1451.00" width="4.20" height="2.00" fill="#8e8e8e" />
<rect x="612.20" y="1459.47" width="4.20" height="2.00" fill="#8e8e8e" />
<rect x="612.20" y="1467.93" width="4.20" height="2.00" fill="#8e8e8e" />
<rect x="612.20" y="1476.40" width="8.00" height="2.00" fill="#8e8e8e" />
<rect x="612.20" y="1484.87" width="4.20" height="2.00" fill="#8e8e8e" />
<rect x="612.20" y="1493.34" width="4.20" height="2.00" fill="#8e8e8e" />
<rect x="612.20" y="1501.80" width="4.20" height="2.00" fill="#8e8e8e" />
<rect x="612.20" y="1510.27" width="4.20" height="2.00" fill="#8e8e8e" />
<rect x="612.20" y="1518.74" width="4.20" height="2.00" fill="#8e8e8e" />
<rect x="612.20" y="1527.20" width="8.00" height="2.00" fill="#8e8e8e" />
<rect x="612.20" y="1535.67" width="4.20" height="2.00" fill="#8e8e8e" />
<rect x="612.20" y="1544.14" width="4.20" height="2.00" fill="#8e8e8e" />
<rect x="612.20" y="1552.60" width="4.20" height="2.00" fill="#8e8e8e" />
<rect x="612.20" y="1561.07" width="4.20" height="2.00" fill="#8e8e8e" />
<rect x="612.20" y="1569.54" width="4.20" height="2.00" fill="#8e8e8e" />
<rect x="612.20" y="1578.00" width="8.00" height="2.00" fill="#8e8e8e" />
<text transform="translate(626.94,1077.60) scale(1.0351,1)" font-size="18.26" fill="#9a9a9a" stroke="#9a9a9a" stroke-width="0.4" >0</text>
<text transform="translate(626.85,1128.40) scale(1.0351,1)" font-size="18.26" fill="#9a9a9a" stroke="#9a9a9a" stroke-width="0.4" >-6</text>
<text transform="translate(626.85,1179.20) scale(1.0351,1)" font-size="18.26" fill="#9a9a9a" stroke="#9a9a9a" stroke-width="0.4" >-12</text>
<text transform="translate(626.85,1230.00) scale(1.0351,1)" font-size="18.26" fill="#9a9a9a" stroke="#9a9a9a" stroke-width="0.4" >-18</text>
<text transform="translate(626.85,1280.80) scale(1.0351,1)" font-size="18.26" fill="#9a9a9a" stroke="#9a9a9a" stroke-width="0.4" >-24</text>
<text transform="translate(626.85,1331.60) scale(1.0351,1)" font-size="18.26" fill="#9a9a9a" stroke="#9a9a9a" stroke-width="0.4" >-30</text>
<text transform="translate(626.85,1382.40) scale(1.0351,1)" font-size="18.26" fill="#9a9a9a" stroke="#9a9a9a" stroke-width="0.4" >-36</text>
<text transform="translate(626.85,1433.20) scale(1.0351,1)" font-size="18.26" fill="#9a9a9a" stroke="#9a9a9a" stroke-width="0.4" >-42</text>
<text transform="translate(626.85,1484.00) scale(1.0351,1)" font-size="18.26" fill="#9a9a9a" stroke="#9a9a9a" stroke-width="0.4" >-48</text>
<text transform="translate(626.85,1534.80) scale(1.0351,1)" font-size="18.26" fill="#9a9a9a" stroke="#9a9a9a" stroke-width="0.4" >-54</text>
<text transform="translate(626.76,1580.00) scale(0.8987,1)" font-size="20.58" fill="#9a9a9a" stroke="#9a9a9a" stroke-width="0.4" >dB</text>
<rect x="534.30" y="1070.00" width="5.60" height="499.70" fill="#000" />
<rect x="536.10" y="1072.00" width="2.00" height="495.70" fill="#1f1f1f" />
<rect x="525.80" y="1080.00" width="7.60" height="2.00" fill="#8e8e8e" />
<rect x="538.60" y="1080.00" width="7.60" height="2.00" fill="#8e8e8e" />
<text transform="translate(512.31,1088.00) scale(0.9478,1)" font-size="17.39" fill="#9a9a9a" stroke="#9a9a9a" stroke-width="0.4" >6</text>
<rect x="525.80" y="1134.00" width="7.60" height="2.00" fill="#8e8e8e" />
<rect x="538.60" y="1134.00" width="7.60" height="2.00" fill="#8e8e8e" />
<text transform="translate(512.31,1142.00) scale(0.9478,1)" font-size="17.39" fill="#9a9a9a" stroke="#9a9a9a" stroke-width="0.4" >3</text>
<rect x="525.80" y="1177.00" width="7.60" height="2.00" fill="#8e8e8e" />
<rect x="538.60" y="1177.00" width="7.60" height="2.00" fill="#8e8e8e" />
<text transform="translate(512.39,1185.00) scale(0.9478,1)" font-size="17.39" fill="#9a9a9a" stroke="#9a9a9a" stroke-width="0.4" >1</text>
<rect x="525.80" y="1201.00" width="7.60" height="2.00" fill="#8e8e8e" />
<rect x="538.60" y="1201.00" width="7.60" height="2.00" fill="#8e8e8e" />
<text transform="translate(512.23,1209.00) scale(0.9478,1)" font-size="17.39" fill="#9a9a9a" stroke="#9a9a9a" stroke-width="0.4" >0</text>
<rect x="525.80" y="1223.00" width="7.60" height="2.00" fill="#8e8e8e" />
<rect x="538.60" y="1223.00" width="7.60" height="2.00" fill="#8e8e8e" />
<text transform="translate(506.87,1231.00) scale(0.9478,1)" font-size="17.39" fill="#9a9a9a" stroke="#9a9a9a" stroke-width="0.4" >-1</text>
<rect x="525.80" y="1284.00" width="7.60" height="2.00" fill="#8e8e8e" />
<rect x="538.60" y="1284.00" width="7.60" height="2.00" fill="#8e8e8e" />
<text transform="translate(506.62,1292.00) scale(0.9478,1)" font-size="17.39" fill="#9a9a9a" stroke="#9a9a9a" stroke-width="0.4" >-4</text>
<rect x="525.80" y="1334.00" width="7.60" height="2.00" fill="#8e8e8e" />
<rect x="538.60" y="1334.00" width="7.60" height="2.00" fill="#8e8e8e" />
<text transform="translate(506.95,1342.00) scale(0.9478,1)" font-size="17.39" fill="#9a9a9a" stroke="#9a9a9a" stroke-width="0.4" >-7</text>
<rect x="525.80" y="1376.00" width="7.60" height="2.00" fill="#8e8e8e" />
<rect x="538.60" y="1376.00" width="7.60" height="2.00" fill="#8e8e8e" />
<text transform="translate(497.56,1384.00) scale(0.9478,1)" font-size="17.39" fill="#9a9a9a" stroke="#9a9a9a" stroke-width="0.4" >-10</text>
<rect x="525.80" y="1408.00" width="7.60" height="2.00" fill="#8e8e8e" />
<rect x="538.60" y="1408.00" width="7.60" height="2.00" fill="#8e8e8e" />
<text transform="translate(497.64,1416.00) scale(0.9478,1)" font-size="17.39" fill="#9a9a9a" stroke="#9a9a9a" stroke-width="0.4" >-13</text>
<rect x="525.80" y="1436.00" width="7.60" height="2.00" fill="#8e8e8e" />
<rect x="538.60" y="1436.00" width="7.60" height="2.00" fill="#8e8e8e" />
<text transform="translate(497.64,1444.00) scale(0.9478,1)" font-size="17.39" fill="#9a9a9a" stroke="#9a9a9a" stroke-width="0.4" >-16</text>
<rect x="525.80" y="1458.00" width="7.60" height="2.00" fill="#8e8e8e" />
<rect x="538.60" y="1458.00" width="7.60" height="2.00" fill="#8e8e8e" />
<text transform="translate(497.72,1466.00) scale(0.9478,1)" font-size="17.39" fill="#9a9a9a" stroke="#9a9a9a" stroke-width="0.4" >-19</text>
<rect x="525.80" y="1492.00" width="7.60" height="2.00" fill="#8e8e8e" />
<rect x="538.60" y="1492.00" width="7.60" height="2.00" fill="#8e8e8e" />
<text transform="translate(497.64,1500.00) scale(0.9478,1)" font-size="17.39" fill="#9a9a9a" stroke="#9a9a9a" stroke-width="0.4" >-25</text>
<rect x="525.80" y="1514.00" width="7.60" height="2.00" fill="#8e8e8e" />
<rect x="538.60" y="1514.00" width="7.60" height="2.00" fill="#8e8e8e" />
<text transform="translate(497.72,1522.00) scale(0.9478,1)" font-size="17.39" fill="#9a9a9a" stroke="#9a9a9a" stroke-width="0.4" >-31</text>
<rect x="525.80" y="1542.00" width="7.60" height="2.00" fill="#8e8e8e" />
<rect x="538.60" y="1542.00" width="7.60" height="2.00" fill="#8e8e8e" />
<rect x="525.80" y="1558.00" width="7.60" height="2.00" fill="#8e8e8e" />
<rect x="538.60" y="1558.00" width="7.60" height="2.00" fill="#8e8e8e" />
<text transform="translate(504.23,1566.00) scale(0.9478,1)" font-size="17.39" fill="#9a9a9a" stroke="#9a9a9a" stroke-width="0.4" >-∞</text>
<rect x="532.00" y="1097.80" width="2.00" height="2.00" fill="#8e8e8e" />
<rect x="532.00" y="1113.70" width="2.00" height="2.00" fill="#8e8e8e" />
<rect x="532.00" y="1144.00" width="2.00" height="2.00" fill="#8e8e8e" />
<rect x="532.00" y="1154.00" width="2.00" height="2.00" fill="#8e8e8e" />
<rect x="532.00" y="1166.00" width="2.00" height="2.00" fill="#8e8e8e" />
<rect x="532.00" y="1244.00" width="2.00" height="2.00" fill="#8e8e8e" />
<rect x="532.00" y="1266.00" width="2.00" height="2.00" fill="#8e8e8e" />
<rect x="532.00" y="1301.80" width="2.00" height="2.00" fill="#8e8e8e" />
<rect x="532.00" y="1318.00" width="2.00" height="2.00" fill="#8e8e8e" />
<rect x="532.00" y="1350.00" width="2.00" height="2.00" fill="#8e8e8e" />
<rect x="532.00" y="1361.80" width="2.00" height="2.00" fill="#8e8e8e" />
<rect x="532.00" y="1387.80" width="2.00" height="2.00" fill="#8e8e8e" />
<rect x="532.00" y="1397.70" width="2.00" height="2.00" fill="#8e8e8e" />
<rect x="532.00" y="1417.80" width="2.00" height="2.00" fill="#8e8e8e" />
<rect x="532.00" y="1428.00" width="2.00" height="2.00" fill="#8e8e8e" />
<rect x="532.00" y="1443.60" width="2.00" height="2.00" fill="#8e8e8e" />
<rect x="532.00" y="1452.00" width="2.00" height="2.00" fill="#8e8e8e" />
<rect x="532.00" y="1465.50" width="2.00" height="2.00" fill="#8e8e8e" />
<rect x="532.00" y="1474.60" width="2.00" height="2.00" fill="#8e8e8e" />
<rect x="532.00" y="1482.00" width="2.00" height="2.00" fill="#8e8e8e" />
<rect x="532.00" y="1489.50" width="2.00" height="2.00" fill="#8e8e8e" />
<rect x="532.00" y="1496.60" width="2.00" height="2.00" fill="#8e8e8e" />
<rect x="532.00" y="1500.40" width="2.00" height="2.00" fill="#8e8e8e" />
<rect x="532.00" y="1504.30" width="2.00" height="2.00" fill="#8e8e8e" />
<rect x="532.00" y="1508.20" width="2.00" height="2.00" fill="#8e8e8e" />
<rect x="532.00" y="1521.80" width="2.00" height="2.00" fill="#8e8e8e" />
<rect x="532.00" y="1528.20" width="2.00" height="2.00" fill="#8e8e8e" />
<rect x="532.00" y="1534.00" width="2.00" height="2.00" fill="#8e8e8e" />
<rect x="532.00" y="1538.60" width="2.00" height="2.00" fill="#8e8e8e" />
<rect x="526" y="1172" width="22" height="58" rx="5" fill="#1b1b1b" stroke="#828282" stroke-width="4"/>
<rect x="532" y="1199.3" width="10" height="3.6" rx="1.8" fill="#828282"/>
<text transform="translate(501.18,1619.00) scale(0.8967,1)" font-size="22.90" fill="#4a96f5" stroke="#4a96f5" stroke-width="0.4" >0.0</text>
<text transform="translate(489.00,1662.00) scale(0.8807,1)" font-size="23.48" fill="#9a9a9a" stroke="#9a9a9a" stroke-width="0.4" >A3</text>
<text transform="translate(563.57,1662.00) scale(0.9248,1)" font-size="24.06" fill="#bdbdbd" stroke="#bdbdbd" stroke-width="0.4" >SFX 1</text>
<rect x="660.20" y="224.00" width="1.60" height="1455.50" fill="#272727" />
<rect x="677.00" y="384.00" width="161.50" height="2.20" fill="#3c3c3c" />
<path d="M820.00 247.45 L831.00 247.45 L825.50 253.95 Z" fill="#6f6f6f"/>
<path d="M820.00 277.75 L831.00 277.75 L825.50 284.25 Z" fill="#6f6f6f"/>
<path d="M820.00 307.75 L831.00 307.75 L825.50 314.25 Z" fill="#6f6f6f"/>
<path d="M820.00 337.75 L831.00 337.75 L825.50 344.25 Z" fill="#6f6f6f"/>
<path d="M820.00 368.05 L831.00 368.05 L825.50 374.55 Z" fill="#6f6f6f"/>
<path d="M820.00 397.15 L831.00 397.15 L825.50 403.65 Z" fill="#6f6f6f"/>
<path d="M820.00 427.35 L831.00 427.35 L825.50 433.85 Z" fill="#6f6f6f"/>
<path d="M820.00 457.75 L831.00 457.75 L825.50 464.25 Z" fill="#6f6f6f"/>
<path d="M820.00 487.35 L831.00 487.35 L825.50 493.85 Z" fill="#6f6f6f"/>
<path d="M820.00 517.45 L831.00 517.45 L825.50 523.95 Z" fill="#6f6f6f"/>
<path d="M676.5 541 Q677.5 535.3 684 535.3 L818.6 535.3" fill="none" stroke="#7a7a7a" stroke-width="2"/>
<circle cx="818.6" cy="551.4" r="16.2" fill="none" stroke="#777" stroke-width="2.2"/>
<path d="M809.85 681.00 L817.20 688.00 L824.55 681.00" fill="none" stroke="#3a3a3a" stroke-width="2.2"/>
<text transform="translate(683.93,740.00) scale(0.8879,1)" font-size="24.20" fill="#c6c6c6" stroke="#c6c6c6" stroke-width="0.4" >SFX sub</text>
<path d="M809.85 727.00 L817.20 735.40 L824.55 727.00" fill="none" stroke="#c8c8c8" stroke-width="2.2"/>
<circle cx="756" cy="813" r="44.05" fill="none" stroke="#858585" stroke-width="3.4"/>
<rect x="754.20" y="770.60" width="3.60" height="42.60" fill="#858585" />
<text transform="translate(697.08,856.20) scale(0.9788,1)" font-size="23.19" fill="#4a96f5" stroke="#4a96f5" stroke-width="0.4" >L</text>
<text transform="translate(805.14,856.20) scale(0.8408,1)" font-size="23.19" fill="#4a96f5" stroke="#4a96f5" stroke-width="0.4" >R</text>
<text transform="translate(742.18,890.00) scale(0.9260,1)" font-size="22.17" fill="#4a96f5" stroke="#4a96f5" stroke-width="0.4" >0.0</text>
<text transform="translate(683.24,973.50) scale(0.8932,1)" font-size="23.19" fill="#c6c6c6" stroke="#c6c6c6" stroke-width="0.4" >Read</text>
<path d="M809.85 961.30 L817.20 969.70 L824.55 961.30" fill="none" stroke="#c8c8c8" stroke-width="2.2"/>
<g fill="#bababa"><rect x="705.65" y="1003.9" width="2.2" height="14.2"/><rect x="718.15" y="1003.9" width="2.2" height="14.2"/></g>
<path d="M706.75 1005.10 L713.00 1011.80 L719.25 1005.10" fill="none" stroke="#bababa" stroke-width="2.3"/>
<g fill="#bababa"><rect x="753.85" y="1003.90" width="8.2" height="2.2"/><rect x="751.65" y="1006.10" width="2.2" height="3.5"/><rect x="753.85" y="1009.60" width="6.2" height="2.2"/><rect x="760.05" y="1011.80" width="2.0" height="4.1"/><rect x="751.65" y="1015.90" width="8.4" height="2.2"/></g>
<g fill="#bababa"><rect x="795.80" y="1003.90" width="2.2" height="14.2"/><rect x="798.00" y="1003.90" width="6.0" height="2.2"/><rect x="804.00" y="1006.10" width="2.1" height="3.5"/><rect x="798.00" y="1009.60" width="6.0" height="2.2"/><rect x="804.00" y="1011.80" width="2.1" height="6.3"/></g>
<text transform="translate(691.84,1065.70) scale(0.9929,1)" font-size="16.67" fill="#9a9a9a" stroke="#9a9a9a" stroke-width="0.4" >dB</text>
<rect x="752.00" y="1048.00" width="49.80" height="535.60" fill="#000" />
<rect x="754.00" y="1050.00" width="45.80" height="531.60" fill="#161616" />
<rect x="754.00" y="1066.80" width="45.80" height="2.00" fill="#000" />
<rect x="776.20" y="1050.00" width="1.80" height="17.00" fill="#000" />
<rect x="754.00" y="1578.00" width="22.00" height="2.30" fill="#f2f200" />
<rect x="778.00" y="1578.00" width="21.80" height="2.30" fill="#f2f200" />
<rect x="802.20" y="1070.00" width="8.00" height="2.00" fill="#8e8e8e" />
<rect x="802.20" y="1078.47" width="4.20" height="2.00" fill="#8e8e8e" />
<rect x="802.20" y="1086.93" width="4.20" height="2.00" fill="#8e8e8e" />
<rect x="802.20" y="1095.40" width="4.20" height="2.00" fill="#8e8e8e" />
<rect x="802.20" y="1103.87" width="4.20" height="2.00" fill="#8e8e8e" />
<rect x="802.20" y="1112.33" width="4.20" height="2.00" fill="#8e8e8e" />
<rect x="802.20" y="1120.80" width="8.00" height="2.00" fill="#8e8e8e" />
<rect x="802.20" y="1129.27" width="4.20" height="2.00" fill="#8e8e8e" />
<rect x="802.20" y="1137.73" width="4.20" height="2.00" fill="#8e8e8e" />
<rect x="802.20" y="1146.20" width="4.20" height="2.00" fill="#8e8e8e" />
<rect x="802.20" y="1154.67" width="4.20" height="2.00" fill="#8e8e8e" />
<rect x="802.20" y="1163.13" width="4.20" height="2.00" fill="#8e8e8e" />
<rect x="802.20" y="1171.60" width="8.00" height="2.00" fill="#8e8e8e" />
<rect x="802.20" y="1180.07" width="4.20" height="2.00" fill="#8e8e8e" />
<rect x="802.20" y="1188.53" width="4.20" height="2.00" fill="#8e8e8e" />
<rect x="802.20" y="1197.00" width="4.20" height="2.00" fill="#8e8e8e" />
<rect x="802.20" y="1205.47" width="4.20" height="2.00" fill="#8e8e8e" />
<rect x="802.20" y="1213.93" width="4.20" height="2.00" fill="#8e8e8e" />
<rect x="802.20" y="1222.40" width="8.00" height="2.00" fill="#8e8e8e" />
<rect x="802.20" y="1230.87" width="4.20" height="2.00" fill="#8e8e8e" />
<rect x="802.20" y="1239.33" width="4.20" height="2.00" fill="#8e8e8e" />
<rect x="802.20" y="1247.80" width="4.20" height="2.00" fill="#8e8e8e" />
<rect x="802.20" y="1256.27" width="4.20" height="2.00" fill="#8e8e8e" />
<rect x="802.20" y="1264.73" width="4.20" height="2.00" fill="#8e8e8e" />
<rect x="802.20" y="1273.20" width="8.00" height="2.00" fill="#8e8e8e" />
<rect x="802.20" y="1281.67" width="4.20" height="2.00" fill="#8e8e8e" />
<rect x="802.20" y="1290.13" width="4.20" height="2.00" fill="#8e8e8e" />
<rect x="802.20" y="1298.60" width="4.20" height="2.00" fill="#8e8e8e" />
<rect x="802.20" y="1307.07" width="4.20" height="2.00" fill="#8e8e8e" />
<rect x="802.20" y="1315.53" width="4.20" height="2.00" fill="#8e8e8e" />
<rect x="802.20" y="1324.00" width="8.00" height="2.00" fill="#8e8e8e" />
<rect x="802.20" y="1332.47" width="4.20" height="2.00" fill="#8e8e8e" />
<rect x="802.20" y="1340.93" width="4.20" height="2.00" fill="#8e8e8e" />
<rect x="802.20" y="1349.40" width="4.20" height="2.00" fill="#8e8e8e" />
<rect x="802.20" y="1357.87" width="4.20" height="2.00" fill="#8e8e8e" />
<rect x="802.20" y="1366.33" width="4.20" height="2.00" fill="#8e8e8e" />
<rect x="802.20" y="1374.80" width="8.00" height="2.00" fill="#8e8e8e" />
<rect x="802.20" y="1383.27" width="4.20" height="2.00" fill="#8e8e8e" />
<rect x="802.20" y="1391.73" width="4.20" height="2.00" fill="#8e8e8e" />
<rect x="802.20" y="1400.20" width="4.20" height="2.00" fill="#8e8e8e" />
<rect x="802.20" y="1408.67" width="4.20" height="2.00" fill="#8e8e8e" />
<rect x="802.20" y="1417.13" width="4.20" height="2.00" fill="#8e8e8e" />
<rect x="802.20" y="1425.60" width="8.00" height="2.00" fill="#8e8e8e" />
<rect x="802.20" y="1434.07" width="4.20" height="2.00" fill="#8e8e8e" />
<rect x="802.20" y="1442.53" width="4.20" height="2.00" fill="#8e8e8e" />
<rect x="802.20" y="1451.00" width="4.20" height="2.00" fill="#8e8e8e" />
<rect x="802.20" y="1459.47" width="4.20" height="2.00" fill="#8e8e8e" />
<rect x="802.20" y="1467.93" width="4.20" height="2.00" fill="#8e8e8e" />
<rect x="802.20" y="1476.40" width="8.00" height="2.00" fill="#8e8e8e" />
<rect x="802.20" y="1484.87" width="4.20" height="2.00" fill="#8e8e8e" />
<rect x="802.20" y="1493.34" width="4.20" height="2.00" fill="#8e8e8e" />
<rect x="802.20" y="1501.80" width="4.20" height="2.00" fill="#8e8e8e" />
<rect x="802.20" y="1510.27" width="4.20" height="2.00" fill="#8e8e8e" />
<rect x="802.20" y="1518.74" width="4.20" height="2.00" fill="#8e8e8e" />
<rect x="802.20" y="1527.20" width="8.00" height="2.00" fill="#8e8e8e" />
<rect x="802.20" y="1535.67" width="4.20" height="2.00" fill="#8e8e8e" />
<rect x="802.20" y="1544.14" width="4.20" height="2.00" fill="#8e8e8e" />
<rect x="802.20" y="1552.60" width="4.20" height="2.00" fill="#8e8e8e" />
<rect x="802.20" y="1561.07" width="4.20" height="2.00" fill="#8e8e8e" />
<rect x="802.20" y="1569.54" width="4.20" height="2.00" fill="#8e8e8e" />
<rect x="802.20" y="1578.00" width="8.00" height="2.00" fill="#8e8e8e" />
<text transform="translate(816.94,1077.60) scale(1.0351,1)" font-size="18.26" fill="#9a9a9a" stroke="#9a9a9a" stroke-width="0.4" >0</text>
<text transform="translate(816.85,1128.40) scale(1.0351,1)" font-size="18.26" fill="#9a9a9a" stroke="#9a9a9a" stroke-width="0.4" >-6</text>
<text transform="translate(816.85,1179.20) scale(1.0351,1)" font-size="18.26" fill="#9a9a9a" stroke="#9a9a9a" stroke-width="0.4" >-12</text>
<text transform="translate(816.85,1230.00) scale(1.0351,1)" font-size="18.26" fill="#9a9a9a" stroke="#9a9a9a" stroke-width="0.4" >-18</text>
<text transform="translate(816.85,1280.80) scale(1.0351,1)" font-size="18.26" fill="#9a9a9a" stroke="#9a9a9a" stroke-width="0.4" >-24</text>
<text transform="translate(816.85,1331.60) scale(1.0351,1)" font-size="18.26" fill="#9a9a9a" stroke="#9a9a9a" stroke-width="0.4" >-30</text>
<text transform="translate(816.85,1382.40) scale(1.0351,1)" font-size="18.26" fill="#9a9a9a" stroke="#9a9a9a" stroke-width="0.4" >-36</text>
<text transform="translate(816.85,1433.20) scale(1.0351,1)" font-size="18.26" fill="#9a9a9a" stroke="#9a9a9a" stroke-width="0.4" >-42</text>
<text transform="translate(816.85,1484.00) scale(1.0351,1)" font-size="18.26" fill="#9a9a9a" stroke="#9a9a9a" stroke-width="0.4" >-48</text>
<text transform="translate(816.85,1534.80) scale(1.0351,1)" font-size="18.26" fill="#9a9a9a" stroke="#9a9a9a" stroke-width="0.4" >-54</text>
<text transform="translate(816.76,1580.00) scale(0.8987,1)" font-size="20.58" fill="#9a9a9a" stroke="#9a9a9a" stroke-width="0.4" >dB</text>
<rect x="724.30" y="1070.00" width="5.60" height="499.70" fill="#000" />
<rect x="726.10" y="1072.00" width="2.00" height="495.70" fill="#1f1f1f" />
<rect x="715.80" y="1080.00" width="7.60" height="2.00" fill="#8e8e8e" />
<rect x="728.60" y="1080.00" width="7.60" height="2.00" fill="#8e8e8e" />
<text transform="translate(702.31,1088.00) scale(0.9478,1)" font-size="17.39" fill="#9a9a9a" stroke="#9a9a9a" stroke-width="0.4" >6</text>
<rect x="715.80" y="1134.00" width="7.60" height="2.00" fill="#8e8e8e" />
<rect x="728.60" y="1134.00" width="7.60" height="2.00" fill="#8e8e8e" />
<text transform="translate(702.31,1142.00) scale(0.9478,1)" font-size="17.39" fill="#9a9a9a" stroke="#9a9a9a" stroke-width="0.4" >3</text>
<rect x="715.80" y="1177.00" width="7.60" height="2.00" fill="#8e8e8e" />
<rect x="728.60" y="1177.00" width="7.60" height="2.00" fill="#8e8e8e" />
<text transform="translate(702.39,1185.00) scale(0.9478,1)" font-size="17.39" fill="#9a9a9a" stroke="#9a9a9a" stroke-width="0.4" >1</text>
<rect x="715.80" y="1201.00" width="7.60" height="2.00" fill="#8e8e8e" />
<rect x="728.60" y="1201.00" width="7.60" height="2.00" fill="#8e8e8e" />
<text transform="translate(702.23,1209.00) scale(0.9478,1)" font-size="17.39" fill="#9a9a9a" stroke="#9a9a9a" stroke-width="0.4" >0</text>
<rect x="715.80" y="1223.00" width="7.60" height="2.00" fill="#8e8e8e" />
<rect x="728.60" y="1223.00" width="7.60" height="2.00" fill="#8e8e8e" />
<text transform="translate(696.87,1231.00) scale(0.9478,1)" font-size="17.39" fill="#9a9a9a" stroke="#9a9a9a" stroke-width="0.4" >-1</text>
<rect x="715.80" y="1284.00" width="7.60" height="2.00" fill="#8e8e8e" />
<rect x="728.60" y="1284.00" width="7.60" height="2.00" fill="#8e8e8e" />
<text transform="translate(696.62,1292.00) scale(0.9478,1)" font-size="17.39" fill="#9a9a9a" stroke="#9a9a9a" stroke-width="0.4" >-4</text>
<rect x="715.80" y="1334.00" width="7.60" height="2.00" fill="#8e8e8e" />
<rect x="728.60" y="1334.00" width="7.60" height="2.00" fill="#8e8e8e" />
<text transform="translate(696.95,1342.00) scale(0.9478,1)" font-size="17.39" fill="#9a9a9a" stroke="#9a9a9a" stroke-width="0.4" >-7</text>
<rect x="715.80" y="1376.00" width="7.60" height="2.00" fill="#8e8e8e" />
<rect x="728.60" y="1376.00" width="7.60" height="2.00" fill="#8e8e8e" />
<text transform="translate(687.56,1384.00) scale(0.9478,1)" font-size="17.39" fill="#9a9a9a" stroke="#9a9a9a" stroke-width="0.4" >-10</text>
<rect x="715.80" y="1408.00" width="7.60" height="2.00" fill="#8e8e8e" />
<rect x="728.60" y="1408.00" width="7.60" height="2.00" fill="#8e8e8e" />
<text transform="translate(687.64,1416.00) scale(0.9478,1)" font-size="17.39" fill="#9a9a9a" stroke="#9a9a9a" stroke-width="0.4" >-13</text>
<rect x="715.80" y="1436.00" width="7.60" height="2.00" fill="#8e8e8e" />
<rect x="728.60" y="1436.00" width="7.60" height="2.00" fill="#8e8e8e" />
<text transform="translate(687.64,1444.00) scale(0.9478,1)" font-size="17.39" fill="#9a9a9a" stroke="#9a9a9a" stroke-width="0.4" >-16</text>
<rect x="715.80" y="1458.00" width="7.60" height="2.00" fill="#8e8e8e" />
<rect x="728.60" y="1458.00" width="7.60" height="2.00" fill="#8e8e8e" />
<text transform="translate(687.72,1466.00) scale(0.9478,1)" font-size="17.39" fill="#9a9a9a" stroke="#9a9a9a" stroke-width="0.4" >-19</text>
<rect x="715.80" y="1492.00" width="7.60" height="2.00" fill="#8e8e8e" />
<rect x="728.60" y="1492.00" width="7.60" height="2.00" fill="#8e8e8e" />
<text transform="translate(687.64,1500.00) scale(0.9478,1)" font-size="17.39" fill="#9a9a9a" stroke="#9a9a9a" stroke-width="0.4" >-25</text>
<rect x="715.80" y="1514.00" width="7.60" height="2.00" fill="#8e8e8e" />
<rect x="728.60" y="1514.00" width="7.60" height="2.00" fill="#8e8e8e" />
<text transform="translate(687.72,1522.00) scale(0.9478,1)" font-size="17.39" fill="#9a9a9a" stroke="#9a9a9a" stroke-width="0.4" >-31</text>
<rect x="715.80" y="1542.00" width="7.60" height="2.00" fill="#8e8e8e" />
<rect x="728.60" y="1542.00" width="7.60" height="2.00" fill="#8e8e8e" />
<rect x="715.80" y="1558.00" width="7.60" height="2.00" fill="#8e8e8e" />
<rect x="728.60" y="1558.00" width="7.60" height="2.00" fill="#8e8e8e" />
<text transform="translate(694.23,1566.00) scale(0.9478,1)" font-size="17.39" fill="#9a9a9a" stroke="#9a9a9a" stroke-width="0.4" >-∞</text>
<rect x="722.00" y="1097.80" width="2.00" height="2.00" fill="#8e8e8e" />
<rect x="722.00" y="1113.70" width="2.00" height="2.00" fill="#8e8e8e" />
<rect x="722.00" y="1144.00" width="2.00" height="2.00" fill="#8e8e8e" />
<rect x="722.00" y="1154.00" width="2.00" height="2.00" fill="#8e8e8e" />
<rect x="722.00" y="1166.00" width="2.00" height="2.00" fill="#8e8e8e" />
<rect x="722.00" y="1244.00" width="2.00" height="2.00" fill="#8e8e8e" />
<rect x="722.00" y="1266.00" width="2.00" height="2.00" fill="#8e8e8e" />
<rect x="722.00" y="1301.80" width="2.00" height="2.00" fill="#8e8e8e" />
<rect x="722.00" y="1318.00" width="2.00" height="2.00" fill="#8e8e8e" />
<rect x="722.00" y="1350.00" width="2.00" height="2.00" fill="#8e8e8e" />
<rect x="722.00" y="1361.80" width="2.00" height="2.00" fill="#8e8e8e" />
<rect x="722.00" y="1387.80" width="2.00" height="2.00" fill="#8e8e8e" />
<rect x="722.00" y="1397.70" width="2.00" height="2.00" fill="#8e8e8e" />
<rect x="722.00" y="1417.80" width="2.00" height="2.00" fill="#8e8e8e" />
<rect x="722.00" y="1428.00" width="2.00" height="2.00" fill="#8e8e8e" />
<rect x="722.00" y="1443.60" width="2.00" height="2.00" fill="#8e8e8e" />
<rect x="722.00" y="1452.00" width="2.00" height="2.00" fill="#8e8e8e" />
<rect x="722.00" y="1465.50" width="2.00" height="2.00" fill="#8e8e8e" />
<rect x="722.00" y="1474.60" width="2.00" height="2.00" fill="#8e8e8e" />
<rect x="722.00" y="1482.00" width="2.00" height="2.00" fill="#8e8e8e" />
<rect x="722.00" y="1489.50" width="2.00" height="2.00" fill="#8e8e8e" />
<rect x="722.00" y="1496.60" width="2.00" height="2.00" fill="#8e8e8e" />
<rect x="722.00" y="1500.40" width="2.00" height="2.00" fill="#8e8e8e" />
<rect x="722.00" y="1504.30" width="2.00" height="2.00" fill="#8e8e8e" />
<rect x="722.00" y="1508.20" width="2.00" height="2.00" fill="#8e8e8e" />
<rect x="722.00" y="1521.80" width="2.00" height="2.00" fill="#8e8e8e" />
<rect x="722.00" y="1528.20" width="2.00" height="2.00" fill="#8e8e8e" />
<rect x="722.00" y="1534.00" width="2.00" height="2.00" fill="#8e8e8e" />
<rect x="722.00" y="1538.60" width="2.00" height="2.00" fill="#8e8e8e" />
<rect x="716" y="1172" width="22" height="58" rx="5" fill="#1b1b1b" stroke="#828282" stroke-width="4"/>
<rect x="722" y="1199.3" width="10" height="3.6" rx="1.8" fill="#828282"/>
<text transform="translate(691.18,1619.00) scale(0.8967,1)" font-size="22.90" fill="#4a96f5" stroke="#4a96f5" stroke-width="0.4" >0.0</text>
<text transform="translate(679.00,1662.00) scale(0.8733,1)" font-size="23.48" fill="#9a9a9a" stroke="#9a9a9a" stroke-width="0.4" >A4</text>
<text transform="translate(753.63,1662.00) scale(0.9248,1)" font-size="24.06" fill="#bdbdbd" stroke="#bdbdbd" stroke-width="0.4" >SFX 2</text>
<rect x="850.20" y="224.00" width="1.60" height="1455.50" fill="#272727" />
<rect x="867.00" y="384.00" width="161.50" height="2.20" fill="#3c3c3c" />
<path d="M1010.00 247.45 L1021.00 247.45 L1015.50 253.95 Z" fill="#6f6f6f"/>
<path d="M1010.00 277.75 L1021.00 277.75 L1015.50 284.25 Z" fill="#6f6f6f"/>
<path d="M1010.00 307.75 L1021.00 307.75 L1015.50 314.25 Z" fill="#6f6f6f"/>
<path d="M1010.00 337.75 L1021.00 337.75 L1015.50 344.25 Z" fill="#6f6f6f"/>
<path d="M1010.00 368.05 L1021.00 368.05 L1015.50 374.55 Z" fill="#6f6f6f"/>
<path d="M1010.00 397.15 L1021.00 397.15 L1015.50 403.65 Z" fill="#6f6f6f"/>
<path d="M1010.00 427.35 L1021.00 427.35 L1015.50 433.85 Z" fill="#6f6f6f"/>
<path d="M1010.00 457.75 L1021.00 457.75 L1015.50 464.25 Z" fill="#6f6f6f"/>
<path d="M1010.00 487.35 L1021.00 487.35 L1015.50 493.85 Z" fill="#6f6f6f"/>
<path d="M1010.00 517.45 L1021.00 517.45 L1015.50 523.95 Z" fill="#6f6f6f"/>
<path d="M866.5 541 Q867.5 535.3 874 535.3 L1008.6 535.3" fill="none" stroke="#7a7a7a" stroke-width="2"/>
<circle cx="1008.6" cy="551.4" r="16.2" fill="none" stroke="#777" stroke-width="2.2"/>
<path d="M999.85 681.00 L1007.20 688.00 L1014.55 681.00" fill="none" stroke="#3a3a3a" stroke-width="2.2"/>
<text transform="translate(873.93,740.00) scale(0.8879,1)" font-size="24.20" fill="#c6c6c6" stroke="#c6c6c6" stroke-width="0.4" >SFX sub</text>
<path d="M999.85 727.00 L1007.20 735.40 L1014.55 727.00" fill="none" stroke="#c8c8c8" stroke-width="2.2"/>
<circle cx="946" cy="813" r="44.05" fill="none" stroke="#858585" stroke-width="3.4"/>
<rect x="944.20" y="770.60" width="3.60" height="42.60" fill="#858585" />
<text transform="translate(887.08,856.20) scale(0.9788,1)" font-size="23.19" fill="#4a96f5" stroke="#4a96f5" stroke-width="0.4" >L</text>
<text transform="translate(995.14,856.20) scale(0.8408,1)" font-size="23.19" fill="#4a96f5" stroke="#4a96f5" stroke-width="0.4" >R</text>
<text transform="translate(932.18,890.00) scale(0.9260,1)" font-size="22.17" fill="#4a96f5" stroke="#4a96f5" stroke-width="0.4" >0.0</text>
<text transform="translate(873.24,973.50) scale(0.8932,1)" font-size="23.19" fill="#c6c6c6" stroke="#c6c6c6" stroke-width="0.4" >Read</text>
<path d="M999.85 961.30 L1007.20 969.70 L1014.55 961.30" fill="none" stroke="#c8c8c8" stroke-width="2.2"/>
<g fill="#bababa"><rect x="895.65" y="1003.9" width="2.2" height="14.2"/><rect x="908.15" y="1003.9" width="2.2" height="14.2"/></g>
<path d="M896.75 1005.10 L903.00 1011.80 L909.25 1005.10" fill="none" stroke="#bababa" stroke-width="2.3"/>
<g fill="#bababa"><rect x="943.85" y="1003.90" width="8.2" height="2.2"/><rect x="941.65" y="1006.10" width="2.2" height="3.5"/><rect x="943.85" y="1009.60" width="6.2" height="2.2"/><rect x="950.05" y="1011.80" width="2.0" height="4.1"/><rect x="941.65" y="1015.90" width="8.4" height="2.2"/></g>
<g fill="#bababa"><rect x="985.80" y="1003.90" width="2.2" height="14.2"/><rect x="988.00" y="1003.90" width="6.0" height="2.2"/><rect x="994.00" y="1006.10" width="2.1" height="3.5"/><rect x="988.00" y="1009.60" width="6.0" height="2.2"/><rect x="994.00" y="1011.80" width="2.1" height="6.3"/></g>
<text transform="translate(881.84,1065.70) scale(0.9929,1)" font-size="16.67" fill="#9a9a9a" stroke="#9a9a9a" stroke-width="0.4" >dB</text>
<rect x="942.00" y="1048.00" width="49.80" height="535.60" fill="#000" />
<rect x="944.00" y="1050.00" width="45.80" height="531.60" fill="#161616" />
<rect x="944.00" y="1066.80" width="45.80" height="2.00" fill="#000" />
<rect x="966.20" y="1050.00" width="1.80" height="17.00" fill="#000" />
<rect x="944.00" y="1578.00" width="22.00" height="2.30" fill="#f2f200" />
<rect x="968.00" y="1578.00" width="21.80" height="2.30" fill="#f2f200" />
<rect x="992.20" y="1070.00" width="8.00" height="2.00" fill="#8e8e8e" />
<rect x="992.20" y="1078.47" width="4.20" height="2.00" fill="#8e8e8e" />
<rect x="992.20" y="1086.93" width="4.20" height="2.00" fill="#8e8e8e" />
<rect x="992.20" y="1095.40" width="4.20" height="2.00" fill="#8e8e8e" />
<rect x="992.20" y="1103.87" width="4.20" height="2.00" fill="#8e8e8e" />
<rect x="992.20" y="1112.33" width="4.20" height="2.00" fill="#8e8e8e" />
<rect x="992.20" y="1120.80" width="8.00" height="2.00" fill="#8e8e8e" />
<rect x="992.20" y="1129.27" width="4.20" height="2.00" fill="#8e8e8e" />
<rect x="992.20" y="1137.73" width="4.20" height="2.00" fill="#8e8e8e" />
<rect x="992.20" y="1146.20" width="4.20" height="2.00" fill="#8e8e8e" />
<rect x="992.20" y="1154.67" width="4.20" height="2.00" fill="#8e8e8e" />
<rect x="992.20" y="1163.13" width="4.20" height="2.00" fill="#8e8e8e" />
<rect x="992.20" y="1171.60" width="8.00" height="2.00" fill="#8e8e8e" />
<rect x="992.20" y="1180.07" width="4.20" height="2.00" fill="#8e8e8e" />
<rect x="992.20" y="1188.53" width="4.20" height="2.00" fill="#8e8e8e" />
<rect x="992.20" y="1197.00" width="4.20" height="2.00" fill="#8e8e8e" />
<rect x="992.20" y="1205.47" width="4.20" height="2.00" fill="#8e8e8e" />
<rect x="992.20" y="1213.93" width="4.20" height="2.00" fill="#8e8e8e" />
<rect x="992.20" y="1222.40" width="8.00" height="2.00" fill="#8e8e8e" />
<rect x="992.20" y="1230.87" width="4.20" height="2.00" fill="#8e8e8e" />
<rect x="992.20" y="1239.33" width="4.20" height="2.00" fill="#8e8e8e" />
<rect x="992.20" y="1247.80" width="4.20" height="2.00" fill="#8e8e8e" />
<rect x="992.20" y="1256.27" width="4.20" height="2.00" fill="#8e8e8e" />
<rect x="992.20" y="1264.73" width="4.20" height="2.00" fill="#8e8e8e" />
<rect x="992.20" y="1273.20" width="8.00" height="2.00" fill="#8e8e8e" />
<rect x="992.20" y="1281.67" width="4.20" height="2.00" fill="#8e8e8e" />
<rect x="992.20" y="1290.13" width="4.20" height="2.00" fill="#8e8e8e" />
<rect x="992.20" y="1298.60" width="4.20" height="2.00" fill="#8e8e8e" />
<rect x="992.20" y="1307.07" width="4.20" height="2.00" fill="#8e8e8e" />
<rect x="992.20" y="1315.53" width="4.20" height="2.00" fill="#8e8e8e" />
<rect x="992.20" y="1324.00" width="8.00" height="2.00" fill="#8e8e8e" />
<rect x="992.20" y="1332.47" width="4.20" height="2.00" fill="#8e8e8e" />
<rect x="992.20" y="1340.93" width="4.20" height="2.00" fill="#8e8e8e" />
<rect x="992.20" y="1349.40" width="4.20" height="2.00" fill="#8e8e8e" />
<rect x="992.20" y="1357.87" width="4.20" height="2.00" fill="#8e8e8e" />
<rect x="992.20" y="1366.33" width="4.20" height="2.00" fill="#8e8e8e" />
<rect x="992.20" y="1374.80" width="8.00" height="2.00" fill="#8e8e8e" />
<rect x="992.20" y="1383.27" width="4.20" height="2.00" fill="#8e8e8e" />
<rect x="992.20" y="1391.73" width="4.20" height="2.00" fill="#8e8e8e" />
<rect x="992.20" y="1400.20" width="4.20" height="2.00" fill="#8e8e8e" />
<rect x="992.20" y="1408.67" width="4.20" height="2.00" fill="#8e8e8e" />
<rect x="992.20" y="1417.13" width="4.20" height="2.00" fill="#8e8e8e" />
<rect x="992.20" y="1425.60" width="8.00" height="2.00" fill="#8e8e8e" />
<rect x="992.20" y="1434.07" width="4.20" height="2.00" fill="#8e8e8e" />
<rect x="992.20" y="1442.53" width="4.20" height="2.00" fill="#8e8e8e" />
<rect x="992.20" y="1451.00" width="4.20" height="2.00" fill="#8e8e8e" />
<rect x="992.20" y="1459.47" width="4.20" height="2.00" fill="#8e8e8e" />
<rect x="992.20" y="1467.93" width="4.20" height="2.00" fill="#8e8e8e" />
<rect x="992.20" y="1476.40" width="8.00" height="2.00" fill="#8e8e8e" />
<rect x="992.20" y="1484.87" width="4.20" height="2.00" fill="#8e8e8e" />
<rect x="992.20" y="1493.34" width="4.20" height="2.00" fill="#8e8e8e" />
<rect x="992.20" y="1501.80" width="4.20" height="2.00" fill="#8e8e8e" />
<rect x="992.20" y="1510.27" width="4.20" height="2.00" fill="#8e8e8e" />
<rect x="992.20" y="1518.74" width="4.20" height="2.00" fill="#8e8e8e" />
<rect x="992.20" y="1527.20" width="8.00" height="2.00" fill="#8e8e8e" />
<rect x="992.20" y="1535.67" width="4.20" height="2.00" fill="#8e8e8e" />
<rect x="992.20" y="1544.14" width="4.20" height="2.00" fill="#8e8e8e" />
<rect x="992.20" y="1552.60" width="4.20" height="2.00" fill="#8e8e8e" />
<rect x="992.20" y="1561.07" width="4.20" height="2.00" fill="#8e8e8e" />
<rect x="992.20" y="1569.54" width="4.20" height="2.00" fill="#8e8e8e" />
<rect x="992.20" y="1578.00" width="8.00" height="2.00" fill="#8e8e8e" />
<text transform="translate(1006.94,1077.60) scale(1.0351,1)" font-size="18.26" fill="#9a9a9a" stroke="#9a9a9a" stroke-width="0.4" >0</text>
<text transform="translate(1006.85,1128.40) scale(1.0351,1)" font-size="18.26" fill="#9a9a9a" stroke="#9a9a9a" stroke-width="0.4" >-6</text>
<text transform="translate(1006.85,1179.20) scale(1.0351,1)" font-size="18.26" fill="#9a9a9a" stroke="#9a9a9a" stroke-width="0.4" >-12</text>
<text transform="translate(1006.85,1230.00) scale(1.0351,1)" font-size="18.26" fill="#9a9a9a" stroke="#9a9a9a" stroke-width="0.4" >-18</text>
<text transform="translate(1006.85,1280.80) scale(1.0351,1)" font-size="18.26" fill="#9a9a9a" stroke="#9a9a9a" stroke-width="0.4" >-24</text>
<text transform="translate(1006.85,1331.60) scale(1.0351,1)" font-size="18.26" fill="#9a9a9a" stroke="#9a9a9a" stroke-width="0.4" >-30</text>
<text transform="translate(1006.85,1382.40) scale(1.0351,1)" font-size="18.26" fill="#9a9a9a" stroke="#9a9a9a" stroke-width="0.4" >-36</text>
<text transform="translate(1006.85,1433.20) scale(1.0351,1)" font-size="18.26" fill="#9a9a9a" stroke="#9a9a9a" stroke-width="0.4" >-42</text>
<text transform="translate(1006.85,1484.00) scale(1.0351,1)" font-size="18.26" fill="#9a9a9a" stroke="#9a9a9a" stroke-width="0.4" >-48</text>
<text transform="translate(1006.85,1534.80) scale(1.0351,1)" font-size="18.26" fill="#9a9a9a" stroke="#9a9a9a" stroke-width="0.4" >-54</text>
<text transform="translate(1006.76,1580.00) scale(0.8987,1)" font-size="20.58" fill="#9a9a9a" stroke="#9a9a9a" stroke-width="0.4" >dB</text>
<rect x="914.30" y="1070.00" width="5.60" height="499.70" fill="#000" />
<rect x="916.10" y="1072.00" width="2.00" height="495.70" fill="#1f1f1f" />
<rect x="905.80" y="1080.00" width="7.60" height="2.00" fill="#8e8e8e" />
<rect x="918.60" y="1080.00" width="7.60" height="2.00" fill="#8e8e8e" />
<text transform="translate(892.31,1088.00) scale(0.9478,1)" font-size="17.39" fill="#9a9a9a" stroke="#9a9a9a" stroke-width="0.4" >6</text>
<rect x="905.80" y="1134.00" width="7.60" height="2.00" fill="#8e8e8e" />
<rect x="918.60" y="1134.00" width="7.60" height="2.00" fill="#8e8e8e" />
<text transform="translate(892.31,1142.00) scale(0.9478,1)" font-size="17.39" fill="#9a9a9a" stroke="#9a9a9a" stroke-width="0.4" >3</text>
<rect x="905.80" y="1177.00" width="7.60" height="2.00" fill="#8e8e8e" />
<rect x="918.60" y="1177.00" width="7.60" height="2.00" fill="#8e8e8e" />
<text transform="translate(892.39,1185.00) scale(0.9478,1)" font-size="17.39" fill="#9a9a9a" stroke="#9a9a9a" stroke-width="0.4" >1</text>
<rect x="905.80" y="1201.00" width="7.60" height="2.00" fill="#8e8e8e" />
<rect x="918.60" y="1201.00" width="7.60" height="2.00" fill="#8e8e8e" />
<text transform="translate(892.23,1209.00) scale(0.9478,1)" font-size="17.39" fill="#9a9a9a" stroke="#9a9a9a" stroke-width="0.4" >0</text>
<rect x="905.80" y="1223.00" width="7.60" height="2.00" fill="#8e8e8e" />
<rect x="918.60" y="1223.00" width="7.60" height="2.00" fill="#8e8e8e" />
<text transform="translate(886.87,1231.00) scale(0.9478,1)" font-size="17.39" fill="#9a9a9a" stroke="#9a9a9a" stroke-width="0.4" >-1</text>
<rect x="905.80" y="1284.00" width="7.60" height="2.00" fill="#8e8e8e" />
<rect x="918.60" y="1284.00" width="7.60" height="2.00" fill="#8e8e8e" />
<text transform="translate(886.62,1292.00) scale(0.9478,1)" font-size="17.39" fill="#9a9a9a" stroke="#9a9a9a" stroke-width="0.4" >-4</text>
<rect x="905.80" y="1334.00" width="7.60" height="2.00" fill="#8e8e8e" />
<rect x="918.60" y="1334.00" width="7.60" height="2.00" fill="#8e8e8e" />
<text transform="translate(886.95,1342.00) scale(0.9478,1)" font-size="17.39" fill="#9a9a9a" stroke="#9a9a9a" stroke-width="0.4" >-7</text>
<rect x="905.80" y="1376.00" width="7.60" height="2.00" fill="#8e8e8e" />
<rect x="918.60" y="1376.00" width="7.60" height="2.00" fill="#8e8e8e" />
<text transform="translate(877.56,1384.00) scale(0.9478,1)" font-size="17.39" fill="#9a9a9a" stroke="#9a9a9a" stroke-width="0.4" >-10</text>
<rect x="905.80" y="1408.00" width="7.60" height="2.00" fill="#8e8e8e" />
<rect x="918.60" y="1408.00" width="7.60" height="2.00" fill="#8e8e8e" />
<text transform="translate(877.64,1416.00) scale(0.9478,1)" font-size="17.39" fill="#9a9a9a" stroke="#9a9a9a" stroke-width="0.4" >-13</text>
<rect x="905.80" y="1436.00" width="7.60" height="2.00" fill="#8e8e8e" />
<rect x="918.60" y="1436.00" width="7.60" height="2.00" fill="#8e8e8e" />
<text transform="translate(877.64,1444.00) scale(0.9478,1)" font-size="17.39" fill="#9a9a9a" stroke="#9a9a9a" stroke-width="0.4" >-16</text>
<rect x="905.80" y="1458.00" width="7.60" height="2.00" fill="#8e8e8e" />
<rect x="918.60" y="1458.00" width="7.60" height="2.00" fill="#8e8e8e" />
<text transform="translate(877.72,1466.00) scale(0.9478,1)" font-size="17.39" fill="#9a9a9a" stroke="#9a9a9a" stroke-width="0.4" >-19</text>
<rect x="905.80" y="1492.00" width="7.60" height="2.00" fill="#8e8e8e" />
<rect x="918.60" y="1492.00" width="7.60" height="2.00" fill="#8e8e8e" />
<text transform="translate(877.64,1500.00) scale(0.9478,1)" font-size="17.39" fill="#9a9a9a" stroke="#9a9a9a" stroke-width="0.4" >-25</text>
<rect x="905.80" y="1514.00" width="7.60" height="2.00" fill="#8e8e8e" />
<rect x="918.60" y="1514.00" width="7.60" height="2.00" fill="#8e8e8e" />
<text transform="translate(877.72,1522.00) scale(0.9478,1)" font-size="17.39" fill="#9a9a9a" stroke="#9a9a9a" stroke-width="0.4" >-31</text>
<rect x="905.80" y="1542.00" width="7.60" height="2.00" fill="#8e8e8e" />
<rect x="918.60" y="1542.00" width="7.60" height="2.00" fill="#8e8e8e" />
<rect x="905.80" y="1558.00" width="7.60" height="2.00" fill="#8e8e8e" />
<rect x="918.60" y="1558.00" width="7.60" height="2.00" fill="#8e8e8e" />
<text transform="translate(884.23,1566.00) scale(0.9478,1)" font-size="17.39" fill="#9a9a9a" stroke="#9a9a9a" stroke-width="0.4" >-∞</text>
<rect x="912.00" y="1097.80" width="2.00" height="2.00" fill="#8e8e8e" />
<rect x="912.00" y="1113.70" width="2.00" height="2.00" fill="#8e8e8e" />
<rect x="912.00" y="1144.00" width="2.00" height="2.00" fill="#8e8e8e" />
<rect x="912.00" y="1154.00" width="2.00" height="2.00" fill="#8e8e8e" />
<rect x="912.00" y="1166.00" width="2.00" height="2.00" fill="#8e8e8e" />
<rect x="912.00" y="1244.00" width="2.00" height="2.00" fill="#8e8e8e" />
<rect x="912.00" y="1266.00" width="2.00" height="2.00" fill="#8e8e8e" />
<rect x="912.00" y="1301.80" width="2.00" height="2.00" fill="#8e8e8e" />
<rect x="912.00" y="1318.00" width="2.00" height="2.00" fill="#8e8e8e" />
<rect x="912.00" y="1350.00" width="2.00" height="2.00" fill="#8e8e8e" />
<rect x="912.00" y="1361.80" width="2.00" height="2.00" fill="#8e8e8e" />
<rect x="912.00" y="1387.80" width="2.00" height="2.00" fill="#8e8e8e" />
<rect x="912.00" y="1397.70" width="2.00" height="2.00" fill="#8e8e8e" />
<rect x="912.00" y="1417.80" width="2.00" height="2.00" fill="#8e8e8e" />
<rect x="912.00" y="1428.00" width="2.00" height="2.00" fill="#8e8e8e" />
<rect x="912.00" y="1443.60" width="2.00" height="2.00" fill="#8e8e8e" />
<rect x="912.00" y="1452.00" width="2.00" height="2.00" fill="#8e8e8e" />
<rect x="912.00" y="1465.50" width="2.00" height="2.00" fill="#8e8e8e" />
<rect x="912.00" y="1474.60" width="2.00" height="2.00" fill="#8e8e8e" />
<rect x="912.00" y="1482.00" width="2.00" height="2.00" fill="#8e8e8e" />
<rect x="912.00" y="1489.50" width="2.00" height="2.00" fill="#8e8e8e" />
<rect x="912.00" y="1496.60" width="2.00" height="2.00" fill="#8e8e8e" />
<rect x="912.00" y="1500.40" width="2.00" height="2.00" fill="#8e8e8e" />
<rect x="912.00" y="1504.30" width="2.00" height="2.00" fill="#8e8e8e" />
<rect x="912.00" y="1508.20" width="2.00" height="2.00" fill="#8e8e8e" />
<rect x="912.00" y="1521.80" width="2.00" height="2.00" fill="#8e8e8e" />
<rect x="912.00" y="1528.20" width="2.00" height="2.00" fill="#8e8e8e" />
<rect x="912.00" y="1534.00" width="2.00" height="2.00" fill="#8e8e8e" />
<rect x="912.00" y="1538.60" width="2.00" height="2.00" fill="#8e8e8e" />
<rect x="906" y="1172" width="22" height="58" rx="5" fill="#1b1b1b" stroke="#828282" stroke-width="4"/>
<rect x="912" y="1199.3" width="10" height="3.6" rx="1.8" fill="#828282"/>
<text transform="translate(881.18,1619.00) scale(0.8967,1)" font-size="22.90" fill="#4a96f5" stroke="#4a96f5" stroke-width="0.4" >0.0</text>
<text transform="translate(869.00,1662.00) scale(0.8807,1)" font-size="23.48" fill="#9a9a9a" stroke="#9a9a9a" stroke-width="0.4" >A5</text>
<text transform="translate(943.52,1662.00) scale(0.9248,1)" font-size="24.06" fill="#bdbdbd" stroke="#bdbdbd" stroke-width="0.4" >SFX 3</text>
<rect x="1040.20" y="224.00" width="1.60" height="1455.50" fill="#272727" />
<rect x="1057.00" y="384.00" width="161.50" height="2.20" fill="#3c3c3c" />
<path d="M1200.00 247.45 L1211.00 247.45 L1205.50 253.95 Z" fill="#6f6f6f"/>
<path d="M1200.00 277.75 L1211.00 277.75 L1205.50 284.25 Z" fill="#6f6f6f"/>
<path d="M1200.00 307.75 L1211.00 307.75 L1205.50 314.25 Z" fill="#6f6f6f"/>
<path d="M1200.00 337.75 L1211.00 337.75 L1205.50 344.25 Z" fill="#6f6f6f"/>
<path d="M1200.00 368.05 L1211.00 368.05 L1205.50 374.55 Z" fill="#6f6f6f"/>
<path d="M1200.00 397.15 L1211.00 397.15 L1205.50 403.65 Z" fill="#6f6f6f"/>
<path d="M1200.00 427.35 L1211.00 427.35 L1205.50 433.85 Z" fill="#6f6f6f"/>
<path d="M1200.00 457.75 L1211.00 457.75 L1205.50 464.25 Z" fill="#6f6f6f"/>
<path d="M1200.00 487.35 L1211.00 487.35 L1205.50 493.85 Z" fill="#6f6f6f"/>
<path d="M1200.00 517.45 L1211.00 517.45 L1205.50 523.95 Z" fill="#6f6f6f"/>
<path d="M1056.5 541 Q1057.5 535.3 1064 535.3 L1198.6 535.3" fill="none" stroke="#7a7a7a" stroke-width="2"/>
<circle cx="1198.6" cy="551.4" r="16.2" fill="none" stroke="#777" stroke-width="2.2"/>
<path d="M1189.85 681.00 L1197.20 688.00 L1204.55 681.00" fill="none" stroke="#3a3a3a" stroke-width="2.2"/>
<text transform="translate(1064.90,740.00) scale(0.8879,1)" font-size="24.20" fill="#c6c6c6" stroke="#c6c6c6" stroke-width="0.4" >Amb sub</text>
<path d="M1189.85 727.00 L1197.20 735.40 L1204.55 727.00" fill="none" stroke="#c8c8c8" stroke-width="2.2"/>
<circle cx="1136" cy="813" r="44.05" fill="none" stroke="#858585" stroke-width="3.4"/>
<rect x="1134.20" y="770.60" width="3.60" height="42.60" fill="#858585" />
<text transform="translate(1077.08,856.20) scale(0.9788,1)" font-size="23.19" fill="#4a96f5" stroke="#4a96f5" stroke-width="0.4" >L</text>
<text transform="translate(1185.14,856.20) scale(0.8408,1)" font-size="23.19" fill="#4a96f5" stroke="#4a96f5" stroke-width="0.4" >R</text>
<text transform="translate(1122.18,890.00) scale(0.9260,1)" font-size="22.17" fill="#4a96f5" stroke="#4a96f5" stroke-width="0.4" >0.0</text>
<text transform="translate(1063.24,973.50) scale(0.8932,1)" font-size="23.19" fill="#c6c6c6" stroke="#c6c6c6" stroke-width="0.4" >Read</text>
<path d="M1189.85 961.30 L1197.20 969.70 L1204.55 961.30" fill="none" stroke="#c8c8c8" stroke-width="2.2"/>
<g fill="#bababa"><rect x="1085.65" y="1003.9" width="2.2" height="14.2"/><rect x="1098.15" y="1003.9" width="2.2" height="14.2"/></g>
<path d="M1086.75 1005.10 L1093.00 1011.80 L1099.25 1005.10" fill="none" stroke="#bababa" stroke-width="2.3"/>
<g fill="#bababa"><rect x="1133.85" y="1003.90" width="8.2" height="2.2"/><rect x="1131.65" y="1006.10" width="2.2" height="3.5"/><rect x="1133.85" y="1009.60" width="6.2" height="2.2"/><rect x="1140.05" y="1011.80" width="2.0" height="4.1"/><rect x="1131.65" y="1015.90" width="8.4" height="2.2"/></g>
<g fill="#bababa"><rect x="1175.80" y="1003.90" width="2.2" height="14.2"/><rect x="1178.00" y="1003.90" width="6.0" height="2.2"/><rect x="1184.00" y="1006.10" width="2.1" height="3.5"/><rect x="1178.00" y="1009.60" width="6.0" height="2.2"/><rect x="1184.00" y="1011.80" width="2.1" height="6.3"/></g>
<text transform="translate(1071.84,1065.70) scale(0.9929,1)" font-size="16.67" fill="#9a9a9a" stroke="#9a9a9a" stroke-width="0.4" >dB</text>
<rect x="1132.00" y="1048.00" width="49.80" height="535.60" fill="#000" />
<rect x="1134.00" y="1050.00" width="45.80" height="531.60" fill="#161616" />
<rect x="1134.00" y="1066.80" width="45.80" height="2.00" fill="#000" />
<rect x="1156.20" y="1050.00" width="1.80" height="17.00" fill="#000" />
<rect x="1134.00" y="1578.00" width="22.00" height="2.30" fill="#f2f200" />
<rect x="1158.00" y="1578.00" width="21.80" height="2.30" fill="#f2f200" />
<rect x="1182.20" y="1070.00" width="8.00" height="2.00" fill="#8e8e8e" />
<rect x="1182.20" y="1078.47" width="4.20" height="2.00" fill="#8e8e8e" />
<rect x="1182.20" y="1086.93" width="4.20" height="2.00" fill="#8e8e8e" />
<rect x="1182.20" y="1095.40" width="4.20" height="2.00" fill="#8e8e8e" />
<rect x="1182.20" y="1103.87" width="4.20" height="2.00" fill="#8e8e8e" />
<rect x="1182.20" y="1112.33" width="4.20" height="2.00" fill="#8e8e8e" />
<rect x="1182.20" y="1120.80" width="8.00" height="2.00" fill="#8e8e8e" />
<rect x="1182.20" y="1129.27" width="4.20" height="2.00" fill="#8e8e8e" />
<rect x="1182.20" y="1137.73" width="4.20" height="2.00" fill="#8e8e8e" />
<rect x="1182.20" y="1146.20" width="4.20" height="2.00" fill="#8e8e8e" />
<rect x="1182.20" y="1154.67" width="4.20" height="2.00" fill="#8e8e8e" />
<rect x="1182.20" y="1163.13" width="4.20" height="2.00" fill="#8e8e8e" />
<rect x="1182.20" y="1171.60" width="8.00" height="2.00" fill="#8e8e8e" />
<rect x="1182.20" y="1180.07" width="4.20" height="2.00" fill="#8e8e8e" />
<rect x="1182.20" y="1188.53" width="4.20" height="2.00" fill="#8e8e8e" />
<rect x="1182.20" y="1197.00" width="4.20" height="2.00" fill="#8e8e8e" />
<rect x="1182.20" y="1205.47" width="4.20" height="2.00" fill="#8e8e8e" />
<rect x="1182.20" y="1213.93" width="4.20" height="2.00" fill="#8e8e8e" />
<rect x="1182.20" y="1222.40" width="8.00" height="2.00" fill="#8e8e8e" />
<rect x="1182.20" y="1230.87" width="4.20" height="2.00" fill="#8e8e8e" />
<rect x="1182.20" y="1239.33" width="4.20" height="2.00" fill="#8e8e8e" />
<rect x="1182.20" y="1247.80" width="4.20" height="2.00" fill="#8e8e8e" />
<rect x="1182.20" y="1256.27" width="4.20" height="2.00" fill="#8e8e8e" />
<rect x="1182.20" y="1264.73" width="4.20" height="2.00" fill="#8e8e8e" />
<rect x="1182.20" y="1273.20" width="8.00" height="2.00" fill="#8e8e8e" />
<rect x="1182.20" y="1281.67" width="4.20" height="2.00" fill="#8e8e8e" />
<rect x="1182.20" y="1290.13" width="4.20" height="2.00" fill="#8e8e8e" />
<rect x="1182.20" y="1298.60" width="4.20" height="2.00" fill="#8e8e8e" />
<rect x="1182.20" y="1307.07" width="4.20" height="2.00" fill="#8e8e8e" />
<rect x="1182.20" y="1315.53" width="4.20" height="2.00" fill="#8e8e8e" />
<rect x="1182.20" y="1324.00" width="8.00" height="2.00" fill="#8e8e8e" />
<rect x="1182.20" y="1332.47" width="4.20" height="2.00" fill="#8e8e8e" />
<rect x="1182.20" y="1340.93" width="4.20" height="2.00" fill="#8e8e8e" />
<rect x="1182.20" y="1349.40" width="4.20" height="2.00" fill="#8e8e8e" />
<rect x="1182.20" y="1357.87" width="4.20" height="2.00" fill="#8e8e8e" />
<rect x="1182.20" y="1366.33" width="4.20" height="2.00" fill="#8e8e8e" />
<rect x="1182.20" y="1374.80" width="8.00" height="2.00" fill="#8e8e8e" />
<rect x="1182.20" y="1383.27" width="4.20" height="2.00" fill="#8e8e8e" />
<rect x="1182.20" y="1391.73" width="4.20" height="2.00" fill="#8e8e8e" />
<rect x="1182.20" y="1400.20" width="4.20" height="2.00" fill="#8e8e8e" />
<rect x="1182.20" y="1408.67" width="4.20" height="2.00" fill="#8e8e8e" />
<rect x="1182.20" y="1417.13" width="4.20" height="2.00" fill="#8e8e8e" />
<rect x="1182.20" y="1425.60" width="8.00" height="2.00" fill="#8e8e8e" />
<rect x="1182.20" y="1434.07" width="4.20" height="2.00" fill="#8e8e8e" />
<rect x="1182.20" y="1442.53" width="4.20" height="2.00" fill="#8e8e8e" />
<rect x="1182.20" y="1451.00" width="4.20" height="2.00" fill="#8e8e8e" />
<rect x="1182.20" y="1459.47" width="4.20" height="2.00" fill="#8e8e8e" />
<rect x="1182.20" y="1467.93" width="4.20" height="2.00" fill="#8e8e8e" />
<rect x="1182.20" y="1476.40" width="8.00" height="2.00" fill="#8e8e8e" />
<rect x="1182.20" y="1484.87" width="4.20" height="2.00" fill="#8e8e8e" />
<rect x="1182.20" y="1493.34" width="4.20" height="2.00" fill="#8e8e8e" />
<rect x="1182.20" y="1501.80" width="4.20" height="2.00" fill="#8e8e8e" />
<rect x="1182.20" y="1510.27" width="4.20" height="2.00" fill="#8e8e8e" />
<rect x="1182.20" y="1518.74" width="4.20" height="2.00" fill="#8e8e8e" />
<rect x="1182.20" y="1527.20" width="8.00" height="2.00" fill="#8e8e8e" />
<rect x="1182.20" y="1535.67" width="4.20" height="2.00" fill="#8e8e8e" />
<rect x="1182.20" y="1544.14" width="4.20" height="2.00" fill="#8e8e8e" />
<rect x="1182.20" y="1552.60" width="4.20" height="2.00" fill="#8e8e8e" />
<rect x="1182.20" y="1561.07" width="4.20" height="2.00" fill="#8e8e8e" />
<rect x="1182.20" y="1569.54" width="4.20" height="2.00" fill="#8e8e8e" />
<rect x="1182.20" y="1578.00" width="8.00" height="2.00" fill="#8e8e8e" />
<text transform="translate(1196.94,1077.60) scale(1.0351,1)" font-size="18.26" fill="#9a9a9a" stroke="#9a9a9a" stroke-width="0.4" >0</text>
<text transform="translate(1196.85,1128.40) scale(1.0351,1)" font-size="18.26" fill="#9a9a9a" stroke="#9a9a9a" stroke-width="0.4" >-6</text>
<text transform="translate(1196.85,1179.20) scale(1.0351,1)" font-size="18.26" fill="#9a9a9a" stroke="#9a9a9a" stroke-width="0.4" >-12</text>
<text transform="translate(1196.85,1230.00) scale(1.0351,1)" font-size="18.26" fill="#9a9a9a" stroke="#9a9a9a" stroke-width="0.4" >-18</text>
<text transform="translate(1196.85,1280.80) scale(1.0351,1)" font-size="18.26" fill="#9a9a9a" stroke="#9a9a9a" stroke-width="0.4" >-24</text>
<text transform="translate(1196.85,1331.60) scale(1.0351,1)" font-size="18.26" fill="#9a9a9a" stroke="#9a9a9a" stroke-width="0.4" >-30</text>
<text transform="translate(1196.85,1382.40) scale(1.0351,1)" font-size="18.26" fill="#9a9a9a" stroke="#9a9a9a" stroke-width="0.4" >-36</text>
<text transform="translate(1196.85,1433.20) scale(1.0351,1)" font-size="18.26" fill="#9a9a9a" stroke="#9a9a9a" stroke-width="0.4" >-42</text>
<text transform="translate(1196.85,1484.00) scale(1.0351,1)" font-size="18.26" fill="#9a9a9a" stroke="#9a9a9a" stroke-width="0.4" >-48</text>
<text transform="translate(1196.85,1534.80) scale(1.0351,1)" font-size="18.26" fill="#9a9a9a" stroke="#9a9a9a" stroke-width="0.4" >-54</text>
<text transform="translate(1196.76,1580.00) scale(0.8987,1)" font-size="20.58" fill="#9a9a9a" stroke="#9a9a9a" stroke-width="0.4" >dB</text>
<rect x="1104.30" y="1070.00" width="5.60" height="499.70" fill="#000" />
<rect x="1106.10" y="1072.00" width="2.00" height="495.70" fill="#1f1f1f" />
<rect x="1095.80" y="1080.00" width="7.60" height="2.00" fill="#8e8e8e" />
<rect x="1108.60" y="1080.00" width="7.60" height="2.00" fill="#8e8e8e" />
<text transform="translate(1082.31,1088.00) scale(0.9478,1)" font-size="17.39" fill="#9a9a9a" stroke="#9a9a9a" stroke-width="0.4" >6</text>
<rect x="1095.80" y="1134.00" width="7.60" height="2.00" fill="#8e8e8e" />
<rect x="1108.60" y="1134.00" width="7.60" height="2.00" fill="#8e8e8e" />
<text transform="translate(1082.31,1142.00) scale(0.9478,1)" font-size="17.39" fill="#9a9a9a" stroke="#9a9a9a" stroke-width="0.4" >3</text>
<rect x="1095.80" y="1177.00" width="7.60" height="2.00" fill="#8e8e8e" />
<rect x="1108.60" y="1177.00" width="7.60" height="2.00" fill="#8e8e8e" />
<text transform="translate(1082.39,1185.00) scale(0.9478,1)" font-size="17.39" fill="#9a9a9a" stroke="#9a9a9a" stroke-width="0.4" >1</text>
<rect x="1095.80" y="1201.00" width="7.60" height="2.00" fill="#8e8e8e" />
<rect x="1108.60" y="1201.00" width="7.60" height="2.00" fill="#8e8e8e" />
<text transform="translate(1082.23,1209.00) scale(0.9478,1)" font-size="17.39" fill="#9a9a9a" stroke="#9a9a9a" stroke-width="0.4" >0</text>
<rect x="1095.80" y="1223.00" width="7.60" height="2.00" fill="#8e8e8e" />
<rect x="1108.60" y="1223.00" width="7.60" height="2.00" fill="#8e8e8e" />
<text transform="translate(1076.87,1231.00) scale(0.9478,1)" font-size="17.39" fill="#9a9a9a" stroke="#9a9a9a" stroke-width="0.4" >-1</text>
<rect x="1095.80" y="1284.00" width="7.60" height="2.00" fill="#8e8e8e" />
<rect x="1108.60" y="1284.00" width="7.60" height="2.00" fill="#8e8e8e" />
<text transform="translate(1076.62,1292.00) scale(0.9478,1)" font-size="17.39" fill="#9a9a9a" stroke="#9a9a9a" stroke-width="0.4" >-4</text>
<rect x="1095.80" y="1334.00" width="7.60" height="2.00" fill="#8e8e8e" />
<rect x="1108.60" y="1334.00" width="7.60" height="2.00" fill="#8e8e8e" />
<text transform="translate(1076.95,1342.00) scale(0.9478,1)" font-size="17.39" fill="#9a9a9a" stroke="#9a9a9a" stroke-width="0.4" >-7</text>
<rect x="1095.80" y="1376.00" width="7.60" height="2.00" fill="#8e8e8e" />
<rect x="1108.60" y="1376.00" width="7.60" height="2.00" fill="#8e8e8e" />
<text transform="translate(1067.56,1384.00) scale(0.9478,1)" font-size="17.39" fill="#9a9a9a" stroke="#9a9a9a" stroke-width="0.4" >-10</text>
<rect x="1095.80" y="1408.00" width="7.60" height="2.00" fill="#8e8e8e" />
<rect x="1108.60" y="1408.00" width="7.60" height="2.00" fill="#8e8e8e" />
<text transform="translate(1067.64,1416.00) scale(0.9478,1)" font-size="17.39" fill="#9a9a9a" stroke="#9a9a9a" stroke-width="0.4" >-13</text>
<rect x="1095.80" y="1436.00" width="7.60" height="2.00" fill="#8e8e8e" />
<rect x="1108.60" y="1436.00" width="7.60" height="2.00" fill="#8e8e8e" />
<text transform="translate(1067.64,1444.00) scale(0.9478,1)" font-size="17.39" fill="#9a9a9a" stroke="#9a9a9a" stroke-width="0.4" >-16</text>
<rect x="1095.80" y="1458.00" width="7.60" height="2.00" fill="#8e8e8e" />
<rect x="1108.60" y="1458.00" width="7.60" height="2.00" fill="#8e8e8e" />
<text transform="translate(1067.72,1466.00) scale(0.9478,1)" font-size="17.39" fill="#9a9a9a" stroke="#9a9a9a" stroke-width="0.4" >-19</text>
<rect x="1095.80" y="1492.00" width="7.60" height="2.00" fill="#8e8e8e" />
<rect x="1108.60" y="1492.00" width="7.60" height="2.00" fill="#8e8e8e" />
<text transform="translate(1067.64,1500.00) scale(0.9478,1)" font-size="17.39" fill="#9a9a9a" stroke="#9a9a9a" stroke-width="0.4" >-25</text>
<rect x="1095.80" y="1514.00" width="7.60" height="2.00" fill="#8e8e8e" />
<rect x="1108.60" y="1514.00" width="7.60" height="2.00" fill="#8e8e8e" />
<text transform="translate(1067.72,1522.00) scale(0.9478,1)" font-size="17.39" fill="#9a9a9a" stroke="#9a9a9a" stroke-width="0.4" >-31</text>
<rect x="1095.80" y="1542.00" width="7.60" height="2.00" fill="#8e8e8e" />
<rect x="1108.60" y="1542.00" width="7.60" height="2.00" fill="#8e8e8e" />
<rect x="1095.80" y="1558.00" width="7.60" height="2.00" fill="#8e8e8e" />
<rect x="1108.60" y="1558.00" width="7.60" height="2.00" fill="#8e8e8e" />
<text transform="translate(1074.23,1566.00) scale(0.9478,1)" font-size="17.39" fill="#9a9a9a" stroke="#9a9a9a" stroke-width="0.4" >-∞</text>
<rect x="1102.00" y="1097.80" width="2.00" height="2.00" fill="#8e8e8e" />
<rect x="1102.00" y="1113.70" width="2.00" height="2.00" fill="#8e8e8e" />
<rect x="1102.00" y="1144.00" width="2.00" height="2.00" fill="#8e8e8e" />
<rect x="1102.00" y="1154.00" width="2.00" height="2.00" fill="#8e8e8e" />
<rect x="1102.00" y="1166.00" width="2.00" height="2.00" fill="#8e8e8e" />
<rect x="1102.00" y="1244.00" width="2.00" height="2.00" fill="#8e8e8e" />
<rect x="1102.00" y="1266.00" width="2.00" height="2.00" fill="#8e8e8e" />
<rect x="1102.00" y="1301.80" width="2.00" height="2.00" fill="#8e8e8e" />
<rect x="1102.00" y="1318.00" width="2.00" height="2.00" fill="#8e8e8e" />
<rect x="1102.00" y="1350.00" width="2.00" height="2.00" fill="#8e8e8e" />
<rect x="1102.00" y="1361.80" width="2.00" height="2.00" fill="#8e8e8e" />
<rect x="1102.00" y="1387.80" width="2.00" height="2.00" fill="#8e8e8e" />
<rect x="1102.00" y="1397.70" width="2.00" height="2.00" fill="#8e8e8e" />
<rect x="1102.00" y="1417.80" width="2.00" height="2.00" fill="#8e8e8e" />
<rect x="1102.00" y="1428.00" width="2.00" height="2.00" fill="#8e8e8e" />
<rect x="1102.00" y="1443.60" width="2.00" height="2.00" fill="#8e8e8e" />
<rect x="1102.00" y="1452.00" width="2.00" height="2.00" fill="#8e8e8e" />
<rect x="1102.00" y="1465.50" width="2.00" height="2.00" fill="#8e8e8e" />
<rect x="1102.00" y="1474.60" width="2.00" height="2.00" fill="#8e8e8e" />
<rect x="1102.00" y="1482.00" width="2.00" height="2.00" fill="#8e8e8e" />
<rect x="1102.00" y="1489.50" width="2.00" height="2.00" fill="#8e8e8e" />
<rect x="1102.00" y="1496.60" width="2.00" height="2.00" fill="#8e8e8e" />
<rect x="1102.00" y="1500.40" width="2.00" height="2.00" fill="#8e8e8e" />
<rect x="1102.00" y="1504.30" width="2.00" height="2.00" fill="#8e8e8e" />
<rect x="1102.00" y="1508.20" width="2.00" height="2.00" fill="#8e8e8e" />
<rect x="1102.00" y="1521.80" width="2.00" height="2.00" fill="#8e8e8e" />
<rect x="1102.00" y="1528.20" width="2.00" height="2.00" fill="#8e8e8e" />
<rect x="1102.00" y="1534.00" width="2.00" height="2.00" fill="#8e8e8e" />
<rect x="1102.00" y="1538.60" width="2.00" height="2.00" fill="#8e8e8e" />
<rect x="1096" y="1172" width="22" height="58" rx="5" fill="#1b1b1b" stroke="#828282" stroke-width="4"/>
<rect x="1102" y="1199.3" width="10" height="3.6" rx="1.8" fill="#828282"/>
<text transform="translate(1071.18,1619.00) scale(0.8967,1)" font-size="22.90" fill="#4a96f5" stroke="#4a96f5" stroke-width="0.4" >0.0</text>
<text transform="translate(1059.00,1662.00) scale(0.8807,1)" font-size="23.48" fill="#9a9a9a" stroke="#9a9a9a" stroke-width="0.4" >A6</text>
<text transform="translate(1115.55,1662.00) scale(0.9248,1)" font-size="24.06" fill="#bdbdbd" stroke="#bdbdbd" stroke-width="0.4" >Ambience</text>
<rect x="1230.20" y="224.00" width="1.60" height="1455.50" fill="#272727" />
<rect x="1247.00" y="384.00" width="161.50" height="2.20" fill="#3c3c3c" />
<path d="M1390.00 247.45 L1401.00 247.45 L1395.50 253.95 Z" fill="#6f6f6f"/>
<path d="M1390.00 277.75 L1401.00 277.75 L1395.50 284.25 Z" fill="#6f6f6f"/>
<path d="M1390.00 307.75 L1401.00 307.75 L1395.50 314.25 Z" fill="#6f6f6f"/>
<path d="M1390.00 337.75 L1401.00 337.75 L1395.50 344.25 Z" fill="#6f6f6f"/>
<path d="M1390.00 368.05 L1401.00 368.05 L1395.50 374.55 Z" fill="#6f6f6f"/>
<path d="M1390.00 397.15 L1401.00 397.15 L1395.50 403.65 Z" fill="#6f6f6f"/>
<path d="M1390.00 427.35 L1401.00 427.35 L1395.50 433.85 Z" fill="#6f6f6f"/>
<path d="M1390.00 457.75 L1401.00 457.75 L1395.50 464.25 Z" fill="#6f6f6f"/>
<path d="M1390.00 487.35 L1401.00 487.35 L1395.50 493.85 Z" fill="#6f6f6f"/>
<path d="M1390.00 517.45 L1401.00 517.45 L1395.50 523.95 Z" fill="#6f6f6f"/>
<path d="M1246.5 541 Q1247.5 535.3 1254 535.3 L1388.6 535.3" fill="none" stroke="#7a7a7a" stroke-width="2"/>
<circle cx="1388.6" cy="551.4" r="16.2" fill="none" stroke="#777" stroke-width="2.2"/>
<path d="M1379.85 681.00 L1387.20 688.00 L1394.55 681.00" fill="none" stroke="#3a3a3a" stroke-width="2.2"/>
<text transform="translate(1254.90,740.00) scale(0.8879,1)" font-size="24.20" fill="#c6c6c6" stroke="#c6c6c6" stroke-width="0.4" >Amb sub</text>
<path d="M1379.85 727.00 L1387.20 735.40 L1394.55 727.00" fill="none" stroke="#c8c8c8" stroke-width="2.2"/>
<circle cx="1326" cy="813" r="44.05" fill="none" stroke="#858585" stroke-width="3.4"/>
<rect x="1324.20" y="770.60" width="3.60" height="42.60" fill="#858585" />
<text transform="translate(1267.08,856.20) scale(0.9788,1)" font-size="23.19" fill="#4a96f5" stroke="#4a96f5" stroke-width="0.4" >L</text>
<text transform="translate(1375.14,856.20) scale(0.8408,1)" font-size="23.19" fill="#4a96f5" stroke="#4a96f5" stroke-width="0.4" >R</text>
<text transform="translate(1312.18,890.00) scale(0.9260,1)" font-size="22.17" fill="#4a96f5" stroke="#4a96f5" stroke-width="0.4" >0.0</text>
<text transform="translate(1253.24,973.50) scale(0.8932,1)" font-size="23.19" fill="#c6c6c6" stroke="#c6c6c6" stroke-width="0.4" >Read</text>
<path d="M1379.85 961.30 L1387.20 969.70 L1394.55 961.30" fill="none" stroke="#c8c8c8" stroke-width="2.2"/>
<g fill="#bababa"><rect x="1275.65" y="1003.9" width="2.2" height="14.2"/><rect x="1288.15" y="1003.9" width="2.2" height="14.2"/></g>
<path d="M1276.75 1005.10 L1283.00 1011.80 L1289.25 1005.10" fill="none" stroke="#bababa" stroke-width="2.3"/>
<g fill="#bababa"><rect x="1323.85" y="1003.90" width="8.2" height="2.2"/><rect x="1321.65" y="1006.10" width="2.2" height="3.5"/><rect x="1323.85" y="1009.60" width="6.2" height="2.2"/><rect x="1330.05" y="1011.80" width="2.0" height="4.1"/><rect x="1321.65" y="1015.90" width="8.4" height="2.2"/></g>
<g fill="#bababa"><rect x="1365.80" y="1003.90" width="2.2" height="14.2"/><rect x="1368.00" y="1003.90" width="6.0" height="2.2"/><rect x="1374.00" y="1006.10" width="2.1" height="3.5"/><rect x="1368.00" y="1009.60" width="6.0" height="2.2"/><rect x="1374.00" y="1011.80" width="2.1" height="6.3"/></g>
<text transform="translate(1261.84,1065.70) scale(0.9929,1)" font-size="16.67" fill="#9a9a9a" stroke="#9a9a9a" stroke-width="0.4" >dB</text>
<rect x="1322.00" y="1048.00" width="49.80" height="535.60" fill="#000" />
<rect x="1324.00" y="1050.00" width="45.80" height="531.60" fill="#161616" />
<rect x="1324.00" y="1066.80" width="45.80" height="2.00" fill="#000" />
<rect x="1346.20" y="1050.00" width="1.80" height="17.00" fill="#000" />
<rect x="1324.00" y="1578.00" width="22.00" height="2.30" fill="#f2f200" />
<rect x="1348.00" y="1578.00" width="21.80" height="2.30" fill="#f2f200" />
<rect x="1372.20" y="1070.00" width="8.00" height="2.00" fill="#8e8e8e" />
<rect x="1372.20" y="1078.47" width="4.20" height="2.00" fill="#8e8e8e" />
<rect x="1372.20" y="1086.93" width="4.20" height="2.00" fill="#8e8e8e" />
<rect x="1372.20" y="1095.40" width="4.20" height="2.00" fill="#8e8e8e" />
<rect x="1372.20" y="1103.87" width="4.20" height="2.00" fill="#8e8e8e" />
<rect x="1372.20" y="1112.33" width="4.20" height="2.00" fill="#8e8e8e" />
<rect x="1372.20" y="1120.80" width="8.00" height="2.00" fill="#8e8e8e" />
<rect x="1372.20" y="1129.27" width="4.20" height="2.00" fill="#8e8e8e" />
<rect x="1372.20" y="1137.73" width="4.20" height="2.00" fill="#8e8e8e" />
<rect x="1372.20" y="1146.20" width="4.20" height="2.00" fill="#8e8e8e" />
<rect x="1372.20" y="1154.67" width="4.20" height="2.00" fill="#8e8e8e" />
<rect x="1372.20" y="1163.13" width="4.20" height="2.00" fill="#8e8e8e" />
<rect x="1372.20" y="1171.60" width="8.00" height="2.00" fill="#8e8e8e" />
<rect x="1372.20" y="1180.07" width="4.20" height="2.00" fill="#8e8e8e" />
<rect x="1372.20" y="1188.53" width="4.20" height="2.00" fill="#8e8e8e" />
<rect x="1372.20" y="1197.00" width="4.20" height="2.00" fill="#8e8e8e" />
<rect x="1372.20" y="1205.47" width="4.20" height="2.00" fill="#8e8e8e" />
<rect x="1372.20" y="1213.93" width="4.20" height="2.00" fill="#8e8e8e" />
<rect x="1372.20" y="1222.40" width="8.00" height="2.00" fill="#8e8e8e" />
<rect x="1372.20" y="1230.87" width="4.20" height="2.00" fill="#8e8e8e" />
<rect x="1372.20" y="1239.33" width="4.20" height="2.00" fill="#8e8e8e" />
<rect x="1372.20" y="1247.80" width="4.20" height="2.00" fill="#8e8e8e" />
<rect x="1372.20" y="1256.27" width="4.20" height="2.00" fill="#8e8e8e" />
<rect x="1372.20" y="1264.73" width="4.20" height="2.00" fill="#8e8e8e" />
<rect x="1372.20" y="1273.20" width="8.00" height="2.00" fill="#8e8e8e" />
<rect x="1372.20" y="1281.67" width="4.20" height="2.00" fill="#8e8e8e" />
<rect x="1372.20" y="1290.13" width="4.20" height="2.00" fill="#8e8e8e" />
<rect x="1372.20" y="1298.60" width="4.20" height="2.00" fill="#8e8e8e" />
<rect x="1372.20" y="1307.07" width="4.20" height="2.00" fill="#8e8e8e" />
<rect x="1372.20" y="1315.53" width="4.20" height="2.00" fill="#8e8e8e" />
<rect x="1372.20" y="1324.00" width="8.00" height="2.00" fill="#8e8e8e" />
<rect x="1372.20" y="1332.47" width="4.20" height="2.00" fill="#8e8e8e" />
<rect x="1372.20" y="1340.93" width="4.20" height="2.00" fill="#8e8e8e" />
<rect x="1372.20" y="1349.40" width="4.20" height="2.00" fill="#8e8e8e" />
<rect x="1372.20" y="1357.87" width="4.20" height="2.00" fill="#8e8e8e" />
<rect x="1372.20" y="1366.33" width="4.20" height="2.00" fill="#8e8e8e" />
<rect x="1372.20" y="1374.80" width="8.00" height="2.00" fill="#8e8e8e" />
<rect x="1372.20" y="1383.27" width="4.20" height="2.00" fill="#8e8e8e" />
<rect x="1372.20" y="1391.73" width="4.20" height="2.00" fill="#8e8e8e" />
<rect x="1372.20" y="1400.20" width="4.20" height="2.00" fill="#8e8e8e" />
<rect x="1372.20" y="1408.67" width="4.20" height="2.00" fill="#8e8e8e" />
<rect x="1372.20" y="1417.13" width="4.20" height="2.00" fill="#8e8e8e" />
<rect x="1372.20" y="1425.60" width="8.00" height="2.00" fill="#8e8e8e" />
<rect x="1372.20" y="1434.07" width="4.20" height="2.00" fill="#8e8e8e" />
<rect x="1372.20" y="1442.53" width="4.20" height="2.00" fill="#8e8e8e" />
<rect x="1372.20" y="1451.00" width="4.20" height="2.00" fill="#8e8e8e" />
<rect x="1372.20" y="1459.47" width="4.20" height="2.00" fill="#8e8e8e" />
<rect x="1372.20" y="1467.93" width="4.20" height="2.00" fill="#8e8e8e" />
<rect x="1372.20" y="1476.40" width="8.00" height="2.00" fill="#8e8e8e" />
<rect x="1372.20" y="1484.87" width="4.20" height="2.00" fill="#8e8e8e" />
<rect x="1372.20" y="1493.34" width="4.20" height="2.00" fill="#8e8e8e" />
<rect x="1372.20" y="1501.80" width="4.20" height="2.00" fill="#8e8e8e" />
<rect x="1372.20" y="1510.27" width="4.20" height="2.00" fill="#8e8e8e" />
<rect x="1372.20" y="1518.74" width="4.20" height="2.00" fill="#8e8e8e" />
<rect x="1372.20" y="1527.20" width="8.00" height="2.00" fill="#8e8e8e" />
<rect x="1372.20" y="1535.67" width="4.20" height="2.00" fill="#8e8e8e" />
<rect x="1372.20" y="1544.14" width="4.20" height="2.00" fill="#8e8e8e" />
<rect x="1372.20" y="1552.60" width="4.20" height="2.00" fill="#8e8e8e" />
<rect x="1372.20" y="1561.07" width="4.20" height="2.00" fill="#8e8e8e" />
<rect x="1372.20" y="1569.54" width="4.20" height="2.00" fill="#8e8e8e" />
<rect x="1372.20" y="1578.00" width="8.00" height="2.00" fill="#8e8e8e" />
<text transform="translate(1386.94,1077.60) scale(1.0351,1)" font-size="18.26" fill="#9a9a9a" stroke="#9a9a9a" stroke-width="0.4" >0</text>
<text transform="translate(1386.85,1128.40) scale(1.0351,1)" font-size="18.26" fill="#9a9a9a" stroke="#9a9a9a" stroke-width="0.4" >-6</text>
<text transform="translate(1386.85,1179.20) scale(1.0351,1)" font-size="18.26" fill="#9a9a9a" stroke="#9a9a9a" stroke-width="0.4" >-12</text>
<text transform="translate(1386.85,1230.00) scale(1.0351,1)" font-size="18.26" fill="#9a9a9a" stroke="#9a9a9a" stroke-width="0.4" >-18</text>
<text transform="translate(1386.85,1280.80) scale(1.0351,1)" font-size="18.26" fill="#9a9a9a" stroke="#9a9a9a" stroke-width="0.4" >-24</text>
<text transform="translate(1386.85,1331.60) scale(1.0351,1)" font-size="18.26" fill="#9a9a9a" stroke="#9a9a9a" stroke-width="0.4" >-30</text>
<text transform="translate(1386.85,1382.40) scale(1.0351,1)" font-size="18.26" fill="#9a9a9a" stroke="#9a9a9a" stroke-width="0.4" >-36</text>
<text transform="translate(1386.85,1433.20) scale(1.0351,1)" font-size="18.26" fill="#9a9a9a" stroke="#9a9a9a" stroke-width="0.4" >-42</text>
<text transform="translate(1386.85,1484.00) scale(1.0351,1)" font-size="18.26" fill="#9a9a9a" stroke="#9a9a9a" stroke-width="0.4" >-48</text>
<text transform="translate(1386.85,1534.80) scale(1.0351,1)" font-size="18.26" fill="#9a9a9a" stroke="#9a9a9a" stroke-width="0.4" >-54</text>
<text transform="translate(1386.76,1580.00) scale(0.8987,1)" font-size="20.58" fill="#9a9a9a" stroke="#9a9a9a" stroke-width="0.4" >dB</text>
<rect x="1294.30" y="1070.00" width="5.60" height="499.70" fill="#000" />
<rect x="1296.10" y="1072.00" width="2.00" height="495.70" fill="#1f1f1f" />
<rect x="1285.80" y="1080.00" width="7.60" height="2.00" fill="#8e8e8e" />
<rect x="1298.60" y="1080.00" width="7.60" height="2.00" fill="#8e8e8e" />
<text transform="translate(1272.31,1088.00) scale(0.9478,1)" font-size="17.39" fill="#9a9a9a" stroke="#9a9a9a" stroke-width="0.4" >6</text>
<rect x="1285.80" y="1134.00" width="7.60" height="2.00" fill="#8e8e8e" />
<rect x="1298.60" y="1134.00" width="7.60" height="2.00" fill="#8e8e8e" />
<text transform="translate(1272.31,1142.00) scale(0.9478,1)" font-size="17.39" fill="#9a9a9a" stroke="#9a9a9a" stroke-width="0.4" >3</text>
<rect x="1285.80" y="1177.00" width="7.60" height="2.00" fill="#8e8e8e" />
<rect x="1298.60" y="1177.00" width="7.60" height="2.00" fill="#8e8e8e" />
<text transform="translate(1272.39,1185.00) scale(0.9478,1)" font-size="17.39" fill="#9a9a9a" stroke="#9a9a9a" stroke-width="0.4" >1</text>
<rect x="1285.80" y="1201.00" width="7.60" height="2.00" fill="#8e8e8e" />
<rect x="1298.60" y="1201.00" width="7.60" height="2.00" fill="#8e8e8e" />
<text transform="translate(1272.23,1209.00) scale(0.9478,1)" font-size="17.39" fill="#9a9a9a" stroke="#9a9a9a" stroke-width="0.4" >0</text>
<rect x="1285.80" y="1223.00" width="7.60" height="2.00" fill="#8e8e8e" />
<rect x="1298.60" y="1223.00" width="7.60" height="2.00" fill="#8e8e8e" />
<text transform="translate(1266.87,1231.00) scale(0.9478,1)" font-size="17.39" fill="#9a9a9a" stroke="#9a9a9a" stroke-width="0.4" >-1</text>
<rect x="1285.80" y="1284.00" width="7.60" height="2.00" fill="#8e8e8e" />
<rect x="1298.60" y="1284.00" width="7.60" height="2.00" fill="#8e8e8e" />
<text transform="translate(1266.62,1292.00) scale(0.9478,1)" font-size="17.39" fill="#9a9a9a" stroke="#9a9a9a" stroke-width="0.4" >-4</text>
<rect x="1285.80" y="1334.00" width="7.60" height="2.00" fill="#8e8e8e" />
<rect x="1298.60" y="1334.00" width="7.60" height="2.00" fill="#8e8e8e" />
<text transform="translate(1266.95,1342.00) scale(0.9478,1)" font-size="17.39" fill="#9a9a9a" stroke="#9a9a9a" stroke-width="0.4" >-7</text>
<rect x="1285.80" y="1376.00" width="7.60" height="2.00" fill="#8e8e8e" />
<rect x="1298.60" y="1376.00" width="7.60" height="2.00" fill="#8e8e8e" />
<text transform="translate(1257.56,1384.00) scale(0.9478,1)" font-size="17.39" fill="#9a9a9a" stroke="#9a9a9a" stroke-width="0.4" >-10</text>
<rect x="1285.80" y="1408.00" width="7.60" height="2.00" fill="#8e8e8e" />
<rect x="1298.60" y="1408.00" width="7.60" height="2.00" fill="#8e8e8e" />
<text transform="translate(1257.64,1416.00) scale(0.9478,1)" font-size="17.39" fill="#9a9a9a" stroke="#9a9a9a" stroke-width="0.4" >-13</text>
<rect x="1285.80" y="1436.00" width="7.60" height="2.00" fill="#8e8e8e" />
<rect x="1298.60" y="1436.00" width="7.60" height="2.00" fill="#8e8e8e" />
<text transform="translate(1257.64,1444.00) scale(0.9478,1)" font-size="17.39" fill="#9a9a9a" stroke="#9a9a9a" stroke-width="0.4" >-16</text>
<rect x="1285.80" y="1458.00" width="7.60" height="2.00" fill="#8e8e8e" />
<rect x="1298.60" y="1458.00" width="7.60" height="2.00" fill="#8e8e8e" />
<text transform="translate(1257.72,1466.00) scale(0.9478,1)" font-size="17.39" fill="#9a9a9a" stroke="#9a9a9a" stroke-width="0.4" >-19</text>
<rect x="1285.80" y="1492.00" width="7.60" height="2.00" fill="#8e8e8e" />
<rect x="1298.60" y="1492.00" width="7.60" height="2.00" fill="#8e8e8e" />
<text transform="translate(1257.64,1500.00) scale(0.9478,1)" font-size="17.39" fill="#9a9a9a" stroke="#9a9a9a" stroke-width="0.4" >-25</text>
<rect x="1285.80" y="1514.00" width="7.60" height="2.00" fill="#8e8e8e" />
<rect x="1298.60" y="1514.00" width="7.60" height="2.00" fill="#8e8e8e" />
<text transform="translate(1257.72,1522.00) scale(0.9478,1)" font-size="17.39" fill="#9a9a9a" stroke="#9a9a9a" stroke-width="0.4" >-31</text>
<rect x="1285.80" y="1542.00" width="7.60" height="2.00" fill="#8e8e8e" />
<rect x="1298.60" y="1542.00" width="7.60" height="2.00" fill="#8e8e8e" />
<rect x="1285.80" y="1558.00" width="7.60" height="2.00" fill="#8e8e8e" />
<rect x="1298.60" y="1558.00" width="7.60" height="2.00" fill="#8e8e8e" />
<text transform="translate(1264.23,1566.00) scale(0.9478,1)" font-size="17.39" fill="#9a9a9a" stroke="#9a9a9a" stroke-width="0.4" >-∞</text>
<rect x="1292.00" y="1097.80" width="2.00" height="2.00" fill="#8e8e8e" />
<rect x="1292.00" y="1113.70" width="2.00" height="2.00" fill="#8e8e8e" />
<rect x="1292.00" y="1144.00" width="2.00" height="2.00" fill="#8e8e8e" />
<rect x="1292.00" y="1154.00" width="2.00" height="2.00" fill="#8e8e8e" />
<rect x="1292.00" y="1166.00" width="2.00" height="2.00" fill="#8e8e8e" />
<rect x="1292.00" y="1244.00" width="2.00" height="2.00" fill="#8e8e8e" />
<rect x="1292.00" y="1266.00" width="2.00" height="2.00" fill="#8e8e8e" />
<rect x="1292.00" y="1301.80" width="2.00" height="2.00" fill="#8e8e8e" />
<rect x="1292.00" y="1318.00" width="2.00" height="2.00" fill="#8e8e8e" />
<rect x="1292.00" y="1350.00" width="2.00" height="2.00" fill="#8e8e8e" />
<rect x="1292.00" y="1361.80" width="2.00" height="2.00" fill="#8e8e8e" />
<rect x="1292.00" y="1387.80" width="2.00" height="2.00" fill="#8e8e8e" />
<rect x="1292.00" y="1397.70" width="2.00" height="2.00" fill="#8e8e8e" />
<rect x="1292.00" y="1417.80" width="2.00" height="2.00" fill="#8e8e8e" />
<rect x="1292.00" y="1428.00" width="2.00" height="2.00" fill="#8e8e8e" />
<rect x="1292.00" y="1443.60" width="2.00" height="2.00" fill="#8e8e8e" />
<rect x="1292.00" y="1452.00" width="2.00" height="2.00" fill="#8e8e8e" />
<rect x="1292.00" y="1465.50" width="2.00" height="2.00" fill="#8e8e8e" />
<rect x="1292.00" y="1474.60" width="2.00" height="2.00" fill="#8e8e8e" />
<rect x="1292.00" y="1482.00" width="2.00" height="2.00" fill="#8e8e8e" />
<rect x="1292.00" y="1489.50" width="2.00" height="2.00" fill="#8e8e8e" />
<rect x="1292.00" y="1496.60" width="2.00" height="2.00" fill="#8e8e8e" />
<rect x="1292.00" y="1500.40" width="2.00" height="2.00" fill="#8e8e8e" />
<rect x="1292.00" y="1504.30" width="2.00" height="2.00" fill="#8e8e8e" />
<rect x="1292.00" y="1508.20" width="2.00" height="2.00" fill="#8e8e8e" />
<rect x="1292.00" y="1521.80" width="2.00" height="2.00" fill="#8e8e8e" />
<rect x="1292.00" y="1528.20" width="2.00" height="2.00" fill="#8e8e8e" />
<rect x="1292.00" y="1534.00" width="2.00" height="2.00" fill="#8e8e8e" />
<rect x="1292.00" y="1538.60" width="2.00" height="2.00" fill="#8e8e8e" />
<rect x="1286" y="1172" width="22" height="58" rx="5" fill="#1b1b1b" stroke="#828282" stroke-width="4"/>
<rect x="1292" y="1199.3" width="10" height="3.6" rx="1.8" fill="#828282"/>
<text transform="translate(1261.18,1619.00) scale(0.8967,1)" font-size="22.90" fill="#4a96f5" stroke="#4a96f5" stroke-width="0.4" >0.0</text>
<text transform="translate(1249.00,1662.00) scale(0.8883,1)" font-size="23.48" fill="#9a9a9a" stroke="#9a9a9a" stroke-width="0.4" >A7</text>
<text transform="translate(1305.55,1662.00) scale(0.9248,1)" font-size="24.06" fill="#bdbdbd" stroke="#bdbdbd" stroke-width="0.4" >Ambience</text>
<rect x="1420.20" y="224.00" width="1.60" height="1455.50" fill="#272727" />
<rect x="1437.00" y="384.00" width="161.50" height="2.20" fill="#3c3c3c" />
<path d="M1580.00 247.45 L1591.00 247.45 L1585.50 253.95 Z" fill="#6f6f6f"/>
<path d="M1580.00 277.75 L1591.00 277.75 L1585.50 284.25 Z" fill="#6f6f6f"/>
<path d="M1580.00 307.75 L1591.00 307.75 L1585.50 314.25 Z" fill="#6f6f6f"/>
<path d="M1580.00 337.75 L1591.00 337.75 L1585.50 344.25 Z" fill="#6f6f6f"/>
<path d="M1580.00 368.05 L1591.00 368.05 L1585.50 374.55 Z" fill="#6f6f6f"/>
<path d="M1580.00 397.15 L1591.00 397.15 L1585.50 403.65 Z" fill="#6f6f6f"/>
<path d="M1580.00 427.35 L1591.00 427.35 L1585.50 433.85 Z" fill="#6f6f6f"/>
<path d="M1580.00 457.75 L1591.00 457.75 L1585.50 464.25 Z" fill="#6f6f6f"/>
<path d="M1580.00 487.35 L1591.00 487.35 L1585.50 493.85 Z" fill="#6f6f6f"/>
<path d="M1580.00 517.45 L1591.00 517.45 L1585.50 523.95 Z" fill="#6f6f6f"/>
<path d="M1436.5 541 Q1437.5 535.3 1444 535.3 L1578.6 535.3" fill="none" stroke="#7a7a7a" stroke-width="2"/>
<circle cx="1578.6" cy="551.4" r="16.2" fill="none" stroke="#777" stroke-width="2.2"/>
<path d="M1569.85 681.00 L1577.20 688.00 L1584.55 681.00" fill="none" stroke="#3a3a3a" stroke-width="2.2"/>
<text transform="translate(1443.18,740.00) scale(0.8879,1)" font-size="24.20" fill="#c6c6c6" stroke="#c6c6c6" stroke-width="0.4" >Music sub</text>
<path d="M1569.85 727.00 L1577.20 735.40 L1584.55 727.00" fill="none" stroke="#c8c8c8" stroke-width="2.2"/>
<circle cx="1516" cy="813" r="44.05" fill="none" stroke="#858585" stroke-width="3.4"/>
<rect x="1514.20" y="770.60" width="3.60" height="42.60" fill="#858585" />
<text transform="translate(1457.08,856.20) scale(0.9788,1)" font-size="23.19" fill="#4a96f5" stroke="#4a96f5" stroke-width="0.4" >L</text>
<text transform="translate(1565.14,856.20) scale(0.8408,1)" font-size="23.19" fill="#4a96f5" stroke="#4a96f5" stroke-width="0.4" >R</text>
<text transform="translate(1502.18,890.00) scale(0.9260,1)" font-size="22.17" fill="#4a96f5" stroke="#4a96f5" stroke-width="0.4" >0.0</text>
<text transform="translate(1443.24,973.50) scale(0.8932,1)" font-size="23.19" fill="#c6c6c6" stroke="#c6c6c6" stroke-width="0.4" >Read</text>
<path d="M1569.85 961.30 L1577.20 969.70 L1584.55 961.30" fill="none" stroke="#c8c8c8" stroke-width="2.2"/>
<g fill="#bababa"><rect x="1465.65" y="1003.9" width="2.2" height="14.2"/><rect x="1478.15" y="1003.9" width="2.2" height="14.2"/></g>
<path d="M1466.75 1005.10 L1473.00 1011.80 L1479.25 1005.10" fill="none" stroke="#bababa" stroke-width="2.3"/>
<g fill="#bababa"><rect x="1513.85" y="1003.90" width="8.2" height="2.2"/><rect x="1511.65" y="1006.10" width="2.2" height="3.5"/><rect x="1513.85" y="1009.60" width="6.2" height="2.2"/><rect x="1520.05" y="1011.80" width="2.0" height="4.1"/><rect x="1511.65" y="1015.90" width="8.4" height="2.2"/></g>
<g fill="#bababa"><rect x="1555.80" y="1003.90" width="2.2" height="14.2"/><rect x="1558.00" y="1003.90" width="6.0" height="2.2"/><rect x="1564.00" y="1006.10" width="2.1" height="3.5"/><rect x="1558.00" y="1009.60" width="6.0" height="2.2"/><rect x="1564.00" y="1011.80" width="2.1" height="6.3"/></g>
<text transform="translate(1451.84,1065.70) scale(0.9929,1)" font-size="16.67" fill="#9a9a9a" stroke="#9a9a9a" stroke-width="0.4" >dB</text>
<rect x="1512.00" y="1048.00" width="49.80" height="535.60" fill="#000" />
<rect x="1514.00" y="1050.00" width="45.80" height="531.60" fill="#161616" />
<rect x="1514.00" y="1066.80" width="45.80" height="2.00" fill="#000" />
<rect x="1536.20" y="1050.00" width="1.80" height="17.00" fill="#000" />
<rect x="1514.00" y="1578.00" width="22.00" height="2.30" fill="#f2f200" />
<rect x="1538.00" y="1578.00" width="21.80" height="2.30" fill="#f2f200" />
<rect x="1562.20" y="1070.00" width="8.00" height="2.00" fill="#8e8e8e" />
<rect x="1562.20" y="1078.47" width="4.20" height="2.00" fill="#8e8e8e" />
<rect x="1562.20" y="1086.93" width="4.20" height="2.00" fill="#8e8e8e" />
<rect x="1562.20" y="1095.40" width="4.20" height="2.00" fill="#8e8e8e" />
<rect x="1562.20" y="1103.87" width="4.20" height="2.00" fill="#8e8e8e" />
<rect x="1562.20" y="1112.33" width="4.20" height="2.00" fill="#8e8e8e" />
<rect x="1562.20" y="1120.80" width="8.00" height="2.00" fill="#8e8e8e" />
<rect x="1562.20" y="1129.27" width="4.20" height="2.00" fill="#8e8e8e" />
<rect x="1562.20" y="1137.73" width="4.20" height="2.00" fill="#8e8e8e" />
<rect x="1562.20" y="1146.20" width="4.20" height="2.00" fill="#8e8e8e" />
<rect x="1562.20" y="1154.67" width="4.20" height="2.00" fill="#8e8e8e" />
<rect x="1562.20" y="1163.13" width="4.20" height="2.00" fill="#8e8e8e" />
<rect x="1562.20" y="1171.60" width="8.00" height="2.00" fill="#8e8e8e" />
<rect x="1562.20" y="1180.07" width="4.20" height="2.00" fill="#8e8e8e" />
<rect x="1562.20" y="1188.53" width="4.20" height="2.00" fill="#8e8e8e" />
<rect x="1562.20" y="1197.00" width="4.20" height="2.00" fill="#8e8e8e" />
<rect x="1562.20" y="1205.47" width="4.20" height="2.00" fill="#8e8e8e" />
<rect x="1562.20" y="1213.93" width="4.20" height="2.00" fill="#8e8e8e" />
<rect x="1562.20" y="1222.40" width="8.00" height="2.00" fill="#8e8e8e" />
<rect x="1562.20" y="1230.87" width="4.20" height="2.00" fill="#8e8e8e" />
<rect x="1562.20" y="1239.33" width="4.20" height="2.00" fill="#8e8e8e" />
<rect x="1562.20" y="1247.80" width="4.20" height="2.00" fill="#8e8e8e" />
<rect x="1562.20" y="1256.27" width="4.20" height="2.00" fill="#8e8e8e" />
<rect x="1562.20" y="1264.73" width="4.20" height="2.00" fill="#8e8e8e" />
<rect x="1562.20" y="1273.20" width="8.00" height="2.00" fill="#8e8e8e" />
<rect x="1562.20" y="1281.67" width="4.20" height="2.00" fill="#8e8e8e" />
<rect x="1562.20" y="1290.13" width="4.20" height="2.00" fill="#8e8e8e" />
<rect x="1562.20" y="1298.60" width="4.20" height="2.00" fill="#8e8e8e" />
<rect x="1562.20" y="1307.07" width="4.20" height="2.00" fill="#8e8e8e" />
<rect x="1562.20" y="1315.53" width="4.20" height="2.00" fill="#8e8e8e" />
<rect x="1562.20" y="1324.00" width="8.00" height="2.00" fill="#8e8e8e" />
<rect x="1562.20" y="1332.47" width="4.20" height="2.00" fill="#8e8e8e" />
<rect x="1562.20" y="1340.93" width="4.20" height="2.00" fill="#8e8e8e" />
<rect x="1562.20" y="1349.40" width="4.20" height="2.00" fill="#8e8e8e" />
<rect x="1562.20" y="1357.87" width="4.20" height="2.00" fill="#8e8e8e" />
<rect x="1562.20" y="1366.33" width="4.20" height="2.00" fill="#8e8e8e" />
<rect x="1562.20" y="1374.80" width="8.00" height="2.00" fill="#8e8e8e" />
<rect x="1562.20" y="1383.27" width="4.20" height="2.00" fill="#8e8e8e" />
<rect x="1562.20" y="1391.73" width="4.20" height="2.00" fill="#8e8e8e" />
<rect x="1562.20" y="1400.20" width="4.20" height="2.00" fill="#8e8e8e" />
<rect x="1562.20" y="1408.67" width="4.20" height="2.00" fill="#8e8e8e" />
<rect x="1562.20" y="1417.13" width="4.20" height="2.00" fill="#8e8e8e" />
<rect x="1562.20" y="1425.60" width="8.00" height="2.00" fill="#8e8e8e" />
<rect x="1562.20" y="1434.07" width="4.20" height="2.00" fill="#8e8e8e" />
<rect x="1562.20" y="1442.53" width="4.20" height="2.00" fill="#8e8e8e" />
<rect x="1562.20" y="1451.00" width="4.20" height="2.00" fill="#8e8e8e" />
<rect x="1562.20" y="1459.47" width="4.20" height="2.00" fill="#8e8e8e" />
<rect x="1562.20" y="1467.93" width="4.20" height="2.00" fill="#8e8e8e" />
<rect x="1562.20" y="1476.40" width="8.00" height="2.00" fill="#8e8e8e" />
<rect x="1562.20" y="1484.87" width="4.20" height="2.00" fill="#8e8e8e" />
<rect x="1562.20" y="1493.34" width="4.20" height="2.00" fill="#8e8e8e" />
<rect x="1562.20" y="1501.80" width="4.20" height="2.00" fill="#8e8e8e" />
<rect x="1562.20" y="1510.27" width="4.20" height="2.00" fill="#8e8e8e" />
<rect x="1562.20" y="1518.74" width="4.20" height="2.00" fill="#8e8e8e" />
<rect x="1562.20" y="1527.20" width="8.00" height="2.00" fill="#8e8e8e" />
<rect x="1562.20" y="1535.67" width="4.20" height="2.00" fill="#8e8e8e" />
<rect x="1562.20" y="1544.14" width="4.20" height="2.00" fill="#8e8e8e" />
<rect x="1562.20" y="1552.60" width="4.20" height="2.00" fill="#8e8e8e" />
<rect x="1562.20" y="1561.07" width="4.20" height="2.00" fill="#8e8e8e" />
<rect x="1562.20" y="1569.54" width="4.20" height="2.00" fill="#8e8e8e" />
<rect x="1562.20" y="1578.00" width="8.00" height="2.00" fill="#8e8e8e" />
<text transform="translate(1576.94,1077.60) scale(1.0351,1)" font-size="18.26" fill="#9a9a9a" stroke="#9a9a9a" stroke-width="0.4" >0</text>
<text transform="translate(1576.85,1128.40) scale(1.0351,1)" font-size="18.26" fill="#9a9a9a" stroke="#9a9a9a" stroke-width="0.4" >-6</text>
<text transform="translate(1576.85,1179.20) scale(1.0351,1)" font-size="18.26" fill="#9a9a9a" stroke="#9a9a9a" stroke-width="0.4" >-12</text>
<text transform="translate(1576.85,1230.00) scale(1.0351,1)" font-size="18.26" fill="#9a9a9a" stroke="#9a9a9a" stroke-width="0.4" >-18</text>
<text transform="translate(1576.85,1280.80) scale(1.0351,1)" font-size="18.26" fill="#9a9a9a" stroke="#9a9a9a" stroke-width="0.4" >-24</text>
<text transform="translate(1576.85,1331.60) scale(1.0351,1)" font-size="18.26" fill="#9a9a9a" stroke="#9a9a9a" stroke-width="0.4" >-30</text>
<text transform="translate(1576.85,1382.40) scale(1.0351,1)" font-size="18.26" fill="#9a9a9a" stroke="#9a9a9a" stroke-width="0.4" >-36</text>
<text transform="translate(1576.85,1433.20) scale(1.0351,1)" font-size="18.26" fill="#9a9a9a" stroke="#9a9a9a" stroke-width="0.4" >-42</text>
<text transform="translate(1576.85,1484.00) scale(1.0351,1)" font-size="18.26" fill="#9a9a9a" stroke="#9a9a9a" stroke-width="0.4" >-48</text>
<text transform="translate(1576.85,1534.80) scale(1.0351,1)" font-size="18.26" fill="#9a9a9a" stroke="#9a9a9a" stroke-width="0.4" >-54</text>
<text transform="translate(1576.76,1580.00) scale(0.8987,1)" font-size="20.58" fill="#9a9a9a" stroke="#9a9a9a" stroke-width="0.4" >dB</text>
<rect x="1484.30" y="1070.00" width="5.60" height="499.70" fill="#000" />
<rect x="1486.10" y="1072.00" width="2.00" height="495.70" fill="#1f1f1f" />
<rect x="1475.80" y="1080.00" width="7.60" height="2.00" fill="#8e8e8e" />
<rect x="1488.60" y="1080.00" width="7.60" height="2.00" fill="#8e8e8e" />
<text transform="translate(1462.31,1088.00) scale(0.9478,1)" font-size="17.39" fill="#9a9a9a" stroke="#9a9a9a" stroke-width="0.4" >6</text>
<rect x="1475.80" y="1134.00" width="7.60" height="2.00" fill="#8e8e8e" />
<rect x="1488.60" y="1134.00" width="7.60" height="2.00" fill="#8e8e8e" />
<text transform="translate(1462.31,1142.00) scale(0.9478,1)" font-size="17.39" fill="#9a9a9a" stroke="#9a9a9a" stroke-width="0.4" >3</text>
<rect x="1475.80" y="1177.00" width="7.60" height="2.00" fill="#8e8e8e" />
<rect x="1488.60" y="1177.00" width="7.60" height="2.00" fill="#8e8e8e" />
<text transform="translate(1462.39,1185.00) scale(0.9478,1)" font-size="17.39" fill="#9a9a9a" stroke="#9a9a9a" stroke-width="0.4" >1</text>
<rect x="1475.80" y="1201.00" width="7.60" height="2.00" fill="#8e8e8e" />
<rect x="1488.60" y="1201.00" width="7.60" height="2.00" fill="#8e8e8e" />
<text transform="translate(1462.23,1209.00) scale(0.9478,1)" font-size="17.39" fill="#9a9a9a" stroke="#9a9a9a" stroke-width="0.4" >0</text>
<rect x="1475.80" y="1223.00" width="7.60" height="2.00" fill="#8e8e8e" />
<rect x="1488.60" y="1223.00" width="7.60" height="2.00" fill="#8e8e8e" />
<text transform="translate(1456.87,1231.00) scale(0.9478,1)" font-size="17.39" fill="#9a9a9a" stroke="#9a9a9a" stroke-width="0.4" >-1</text>
<rect x="1475.80" y="1284.00" width="7.60" height="2.00" fill="#8e8e8e" />
<rect x="1488.60" y="1284.00" width="7.60" height="2.00" fill="#8e8e8e" />
<text transform="translate(1456.62,1292.00) scale(0.9478,1)" font-size="17.39" fill="#9a9a9a" stroke="#9a9a9a" stroke-width="0.4" >-4</text>
<rect x="1475.80" y="1334.00" width="7.60" height="2.00" fill="#8e8e8e" />
<rect x="1488.60" y="1334.00" width="7.60" height="2.00" fill="#8e8e8e" />
<text transform="translate(1456.95,1342.00) scale(0.9478,1)" font-size="17.39" fill="#9a9a9a" stroke="#9a9a9a" stroke-width="0.4" >-7</text>
<rect x="1475.80" y="1376.00" width="7.60" height="2.00" fill="#8e8e8e" />
<rect x="1488.60" y="1376.00" width="7.60" height="2.00" fill="#8e8e8e" />
<text transform="translate(1447.56,1384.00) scale(0.9478,1)" font-size="17.39" fill="#9a9a9a" stroke="#9a9a9a" stroke-width="0.4" >-10</text>
<rect x="1475.80" y="1408.00" width="7.60" height="2.00" fill="#8e8e8e" />
<rect x="1488.60" y="1408.00" width="7.60" height="2.00" fill="#8e8e8e" />
<text transform="translate(1447.64,1416.00) scale(0.9478,1)" font-size="17.39" fill="#9a9a9a" stroke="#9a9a9a" stroke-width="0.4" >-13</text>
<rect x="1475.80" y="1436.00" width="7.60" height="2.00" fill="#8e8e8e" />
<rect x="1488.60" y="1436.00" width="7.60" height="2.00" fill="#8e8e8e" />
<text transform="translate(1447.64,1444.00) scale(0.9478,1)" font-size="17.39" fill="#9a9a9a" stroke="#9a9a9a" stroke-width="0.4" >-16</text>
<rect x="1475.80" y="1458.00" width="7.60" height="2.00" fill="#8e8e8e" />
<rect x="1488.60" y="1458.00" width="7.60" height="2.00" fill="#8e8e8e" />
<text transform="translate(1447.72,1466.00) scale(0.9478,1)" font-size="17.39" fill="#9a9a9a" stroke="#9a9a9a" stroke-width="0.4" >-19</text>
<rect x="1475.80" y="1492.00" width="7.60" height="2.00" fill="#8e8e8e" />
<rect x="1488.60" y="1492.00" width="7.60" height="2.00" fill="#8e8e8e" />
<text transform="translate(1447.64,1500.00) scale(0.9478,1)" font-size="17.39" fill="#9a9a9a" stroke="#9a9a9a" stroke-width="0.4" >-25</text>
<rect x="1475.80" y="1514.00" width="7.60" height="2.00" fill="#8e8e8e" />
<rect x="1488.60" y="1514.00" width="7.60" height="2.00" fill="#8e8e8e" />
<text transform="translate(1447.72,1522.00) scale(0.9478,1)" font-size="17.39" fill="#9a9a9a" stroke="#9a9a9a" stroke-width="0.4" >-31</text>
<rect x="1475.80" y="1542.00" width="7.60" height="2.00" fill="#8e8e8e" />
<rect x="1488.60" y="1542.00" width="7.60" height="2.00" fill="#8e8e8e" />
<rect x="1475.80" y="1558.00" width="7.60" height="2.00" fill="#8e8e8e" />
<rect x="1488.60" y="1558.00" width="7.60" height="2.00" fill="#8e8e8e" />
<text transform="translate(1454.23,1566.00) scale(0.9478,1)" font-size="17.39" fill="#9a9a9a" stroke="#9a9a9a" stroke-width="0.4" >-∞</text>
<rect x="1482.00" y="1097.80" width="2.00" height="2.00" fill="#8e8e8e" />
<rect x="1482.00" y="1113.70" width="2.00" height="2.00" fill="#8e8e8e" />
<rect x="1482.00" y="1144.00" width="2.00" height="2.00" fill="#8e8e8e" />
<rect x="1482.00" y="1154.00" width="2.00" height="2.00" fill="#8e8e8e" />
<rect x="1482.00" y="1166.00" width="2.00" height="2.00" fill="#8e8e8e" />
<rect x="1482.00" y="1244.00" width="2.00" height="2.00" fill="#8e8e8e" />
<rect x="1482.00" y="1266.00" width="2.00" height="2.00" fill="#8e8e8e" />
<rect x="1482.00" y="1301.80" width="2.00" height="2.00" fill="#8e8e8e" />
<rect x="1482.00" y="1318.00" width="2.00" height="2.00" fill="#8e8e8e" />
<rect x="1482.00" y="1350.00" width="2.00" height="2.00" fill="#8e8e8e" />
<rect x="1482.00" y="1361.80" width="2.00" height="2.00" fill="#8e8e8e" />
<rect x="1482.00" y="1387.80" width="2.00" height="2.00" fill="#8e8e8e" />
<rect x="1482.00" y="1397.70" width="2.00" height="2.00" fill="#8e8e8e" />
<rect x="1482.00" y="1417.80" width="2.00" height="2.00" fill="#8e8e8e" />
<rect x="1482.00" y="1428.00" width="2.00" height="2.00" fill="#8e8e8e" />
<rect x="1482.00" y="1443.60" width="2.00" height="2.00" fill="#8e8e8e" />
<rect x="1482.00" y="1452.00" width="2.00" height="2.00" fill="#8e8e8e" />
<rect x="1482.00" y="1465.50" width="2.00" height="2.00" fill="#8e8e8e" />
<rect x="1482.00" y="1474.60" width="2.00" height="2.00" fill="#8e8e8e" />
<rect x="1482.00" y="1482.00" width="2.00" height="2.00" fill="#8e8e8e" />
<rect x="1482.00" y="1489.50" width="2.00" height="2.00" fill="#8e8e8e" />
<rect x="1482.00" y="1496.60" width="2.00" height="2.00" fill="#8e8e8e" />
<rect x="1482.00" y="1500.40" width="2.00" height="2.00" fill="#8e8e8e" />
<rect x="1482.00" y="1504.30" width="2.00" height="2.00" fill="#8e8e8e" />
<rect x="1482.00" y="1508.20" width="2.00" height="2.00" fill="#8e8e8e" />
<rect x="1482.00" y="1521.80" width="2.00" height="2.00" fill="#8e8e8e" />
<rect x="1482.00" y="1528.20" width="2.00" height="2.00" fill="#8e8e8e" />
<rect x="1482.00" y="1534.00" width="2.00" height="2.00" fill="#8e8e8e" />
<rect x="1482.00" y="1538.60" width="2.00" height="2.00" fill="#8e8e8e" />
<rect x="1476" y="1172" width="22" height="58" rx="5" fill="#1b1b1b" stroke="#828282" stroke-width="4"/>
<rect x="1482" y="1199.3" width="10" height="3.6" rx="1.8" fill="#828282"/>
<text transform="translate(1451.18,1619.00) scale(0.8967,1)" font-size="22.90" fill="#4a96f5" stroke="#4a96f5" stroke-width="0.4" >0.0</text>
<text transform="translate(1439.00,1662.00) scale(0.8807,1)" font-size="23.48" fill="#9a9a9a" stroke="#9a9a9a" stroke-width="0.4" >A8</text>
<text transform="translate(1505.79,1662.00) scale(0.9248,1)" font-size="24.06" fill="#bdbdbd" stroke="#bdbdbd" stroke-width="0.4" >Music 1</text>
<rect x="1610.20" y="224.00" width="1.60" height="1455.50" fill="#272727" />
<rect x="1627.00" y="384.00" width="161.50" height="2.20" fill="#3c3c3c" />
<path d="M1770.00 247.45 L1781.00 247.45 L1775.50 253.95 Z" fill="#6f6f6f"/>
<path d="M1770.00 277.75 L1781.00 277.75 L1775.50 284.25 Z" fill="#6f6f6f"/>
<path d="M1770.00 307.75 L1781.00 307.75 L1775.50 314.25 Z" fill="#6f6f6f"/>
<path d="M1770.00 337.75 L1781.00 337.75 L1775.50 344.25 Z" fill="#6f6f6f"/>
<path d="M1770.00 368.05 L1781.00 368.05 L1775.50 374.55 Z" fill="#6f6f6f"/>
<path d="M1770.00 397.15 L1781.00 397.15 L1775.50 403.65 Z" fill="#6f6f6f"/>
<path d="M1770.00 427.35 L1781.00 427.35 L1775.50 433.85 Z" fill="#6f6f6f"/>
<path d="M1770.00 457.75 L1781.00 457.75 L1775.50 464.25 Z" fill="#6f6f6f"/>
<path d="M1770.00 487.35 L1781.00 487.35 L1775.50 493.85 Z" fill="#6f6f6f"/>
<path d="M1770.00 517.45 L1781.00 517.45 L1775.50 523.95 Z" fill="#6f6f6f"/>
<path d="M1626.5 541 Q1627.5 535.3 1634 535.3 L1768.6 535.3" fill="none" stroke="#7a7a7a" stroke-width="2"/>
<circle cx="1768.6" cy="551.4" r="16.2" fill="none" stroke="#777" stroke-width="2.2"/>
<path d="M1759.85 681.00 L1767.20 688.00 L1774.55 681.00" fill="none" stroke="#3a3a3a" stroke-width="2.2"/>
<text transform="translate(1633.18,740.00) scale(0.8879,1)" font-size="24.20" fill="#c6c6c6" stroke="#c6c6c6" stroke-width="0.4" >Music sub</text>
<path d="M1759.85 727.00 L1767.20 735.40 L1774.55 727.00" fill="none" stroke="#c8c8c8" stroke-width="2.2"/>
<circle cx="1706" cy="813" r="44.05" fill="none" stroke="#858585" stroke-width="3.4"/>
<rect x="1704.20" y="770.60" width="3.60" height="42.60" fill="#858585" />
<text transform="translate(1647.08,856.20) scale(0.9788,1)" font-size="23.19" fill="#4a96f5" stroke="#4a96f5" stroke-width="0.4" >L</text>
<text transform="translate(1755.14,856.20) scale(0.8408,1)" font-size="23.19" fill="#4a96f5" stroke="#4a96f5" stroke-width="0.4" >R</text>
<text transform="translate(1692.18,890.00) scale(0.9260,1)" font-size="22.17" fill="#4a96f5" stroke="#4a96f5" stroke-width="0.4" >0.0</text>
<text transform="translate(1633.24,973.50) scale(0.8932,1)" font-size="23.19" fill="#c6c6c6" stroke="#c6c6c6" stroke-width="0.4" >Read</text>
<path d="M1759.85 961.30 L1767.20 969.70 L1774.55 961.30" fill="none" stroke="#c8c8c8" stroke-width="2.2"/>
<g fill="#bababa"><rect x="1655.65" y="1003.9" width="2.2" height="14.2"/><rect x="1668.15" y="1003.9" width="2.2" height="14.2"/></g>
<path d="M1656.75 1005.10 L1663.00 1011.80 L1669.25 1005.10" fill="none" stroke="#bababa" stroke-width="2.3"/>
<g fill="#bababa"><rect x="1703.85" y="1003.90" width="8.2" height="2.2"/><rect x="1701.65" y="1006.10" width="2.2" height="3.5"/><rect x="1703.85" y="1009.60" width="6.2" height="2.2"/><rect x="1710.05" y="1011.80" width="2.0" height="4.1"/><rect x="1701.65" y="1015.90" width="8.4" height="2.2"/></g>
<g fill="#bababa"><rect x="1745.80" y="1003.90" width="2.2" height="14.2"/><rect x="1748.00" y="1003.90" width="6.0" height="2.2"/><rect x="1754.00" y="1006.10" width="2.1" height="3.5"/><rect x="1748.00" y="1009.60" width="6.0" height="2.2"/><rect x="1754.00" y="1011.80" width="2.1" height="6.3"/></g>
<text transform="translate(1641.84,1065.70) scale(0.9929,1)" font-size="16.67" fill="#9a9a9a" stroke="#9a9a9a" stroke-width="0.4" >dB</text>
<rect x="1702.00" y="1048.00" width="49.80" height="535.60" fill="#000" />
<rect x="1704.00" y="1050.00" width="45.80" height="531.60" fill="#161616" />
<rect x="1704.00" y="1066.80" width="45.80" height="2.00" fill="#000" />
<rect x="1726.20" y="1050.00" width="1.80" height="17.00" fill="#000" />
<rect x="1704.00" y="1578.00" width="22.00" height="2.30" fill="#f2f200" />
<rect x="1728.00" y="1578.00" width="21.80" height="2.30" fill="#f2f200" />
<rect x="1752.20" y="1070.00" width="8.00" height="2.00" fill="#8e8e8e" />
<rect x="1752.20" y="1078.47" width="4.20" height="2.00" fill="#8e8e8e" />
<rect x="1752.20" y="1086.93" width="4.20" height="2.00" fill="#8e8e8e" />
<rect x="1752.20" y="1095.40" width="4.20" height="2.00" fill="#8e8e8e" />
<rect x="1752.20" y="1103.87" width="4.20" height="2.00" fill="#8e8e8e" />
<rect x="1752.20" y="1112.33" width="4.20" height="2.00" fill="#8e8e8e" />
<rect x="1752.20" y="1120.80" width="8.00" height="2.00" fill="#8e8e8e" />
<rect x="1752.20" y="1129.27" width="4.20" height="2.00" fill="#8e8e8e" />
<rect x="1752.20" y="1137.73" width="4.20" height="2.00" fill="#8e8e8e" />
<rect x="1752.20" y="1146.20" width="4.20" height="2.00" fill="#8e8e8e" />
<rect x="1752.20" y="1154.67" width="4.20" height="2.00" fill="#8e8e8e" />
<rect x="1752.20" y="1163.13" width="4.20" height="2.00" fill="#8e8e8e" />
<rect x="1752.20" y="1171.60" width="8.00" height="2.00" fill="#8e8e8e" />
<rect x="1752.20" y="1180.07" width="4.20" height="2.00" fill="#8e8e8e" />
<rect x="1752.20" y="1188.53" width="4.20" height="2.00" fill="#8e8e8e" />
<rect x="1752.20" y="1197.00" width="4.20" height="2.00" fill="#8e8e8e" />
<rect x="1752.20" y="1205.47" width="4.20" height="2.00" fill="#8e8e8e" />
<rect x="1752.20" y="1213.93" width="4.20" height="2.00" fill="#8e8e8e" />
<rect x="1752.20" y="1222.40" width="8.00" height="2.00" fill="#8e8e8e" />
<rect x="1752.20" y="1230.87" width="4.20" height="2.00" fill="#8e8e8e" />
<rect x="1752.20" y="1239.33" width="4.20" height="2.00" fill="#8e8e8e" />
<rect x="1752.20" y="1247.80" width="4.20" height="2.00" fill="#8e8e8e" />
<rect x="1752.20" y="1256.27" width="4.20" height="2.00" fill="#8e8e8e" />
<rect x="1752.20" y="1264.73" width="4.20" height="2.00" fill="#8e8e8e" />
<rect x="1752.20" y="1273.20" width="8.00" height="2.00" fill="#8e8e8e" />
<rect x="1752.20" y="1281.67" width="4.20" height="2.00" fill="#8e8e8e" />
<rect x="1752.20" y="1290.13" width="4.20" height="2.00" fill="#8e8e8e" />
<rect x="1752.20" y="1298.60" width="4.20" height="2.00" fill="#8e8e8e" />
<rect x="1752.20" y="1307.07" width="4.20" height="2.00" fill="#8e8e8e" />
<rect x="1752.20" y="1315.53" width="4.20" height="2.00" fill="#8e8e8e" />
<rect x="1752.20" y="1324.00" width="8.00" height="2.00" fill="#8e8e8e" />
<rect x="1752.20" y="1332.47" width="4.20" height="2.00" fill="#8e8e8e" />
<rect x="1752.20" y="1340.93" width="4.20" height="2.00" fill="#8e8e8e" />
<rect x="1752.20" y="1349.40" width="4.20" height="2.00" fill="#8e8e8e" />
<rect x="1752.20" y="1357.87" width="4.20" height="2.00" fill="#8e8e8e" />
<rect x="1752.20" y="1366.33" width="4.20" height="2.00" fill="#8e8e8e" />
<rect x="1752.20" y="1374.80" width="8.00" height="2.00" fill="#8e8e8e" />
<rect x="1752.20" y="1383.27" width="4.20" height="2.00" fill="#8e8e8e" />
<rect x="1752.20" y="1391.73" width="4.20" height="2.00" fill="#8e8e8e" />
<rect x="1752.20" y="1400.20" width="4.20" height="2.00" fill="#8e8e8e" />
<rect x="1752.20" y="1408.67" width="4.20" height="2.00" fill="#8e8e8e" />
<rect x="1752.20" y="1417.13" width="4.20" height="2.00" fill="#8e8e8e" />
<rect x="1752.20" y="1425.60" width="8.00" height="2.00" fill="#8e8e8e" />
<rect x="1752.20" y="1434.07" width="4.20" height="2.00" fill="#8e8e8e" />
<rect x="1752.20" y="1442.53" width="4.20" height="2.00" fill="#8e8e8e" />
<rect x="1752.20" y="1451.00" width="4.20" height="2.00" fill="#8e8e8e" />
<rect x="1752.20" y="1459.47" width="4.20" height="2.00" fill="#8e8e8e" />
<rect x="1752.20" y="1467.93" width="4.20" height="2.00" fill="#8e8e8e" />
<rect x="1752.20" y="1476.40" width="8.00" height="2.00" fill="#8e8e8e" />
<rect x="1752.20" y="1484.87" width="4.20" height="2.00" fill="#8e8e8e" />
<rect x="1752.20" y="1493.34" width="4.20" height="2.00" fill="#8e8e8e" />
<rect x="1752.20" y="1501.80" width="4.20" height="2.00" fill="#8e8e8e" />
<rect x="1752.20" y="1510.27" width="4.20" height="2.00" fill="#8e8e8e" />
<rect x="1752.20" y="1518.74" width="4.20" height="2.00" fill="#8e8e8e" />
<rect x="1752.20" y="1527.20" width="8.00" height="2.00" fill="#8e8e8e" />
<rect x="1752.20" y="1535.67" width="4.20" height="2.00" fill="#8e8e8e" />
<rect x="1752.20" y="1544.14" width="4.20" height="2.00" fill="#8e8e8e" />
<rect x="1752.20" y="1552.60" width="4.20" height="2.00" fill="#8e8e8e" />
<rect x="1752.20" y="1561.07" width="4.20" height="2.00" fill="#8e8e8e" />
<rect x="1752.20" y="1569.54" width="4.20" height="2.00" fill="#8e8e8e" />
<rect x="1752.20" y="1578.00" width="8.00" height="2.00" fill="#8e8e8e" />
<text transform="translate(1766.94,1077.60) scale(1.0351,1)" font-size="18.26" fill="#9a9a9a" stroke="#9a9a9a" stroke-width="0.4" >0</text>
<text transform="translate(1766.85,1128.40) scale(1.0351,1)" font-size="18.26" fill="#9a9a9a" stroke="#9a9a9a" stroke-width="0.4" >-6</text>
<text transform="translate(1766.85,1179.20) scale(1.0351,1)" font-size="18.26" fill="#9a9a9a" stroke="#9a9a9a" stroke-width="0.4" >-12</text>
<text transform="translate(1766.85,1230.00) scale(1.0351,1)" font-size="18.26" fill="#9a9a9a" stroke="#9a9a9a" stroke-width="0.4" >-18</text>
<text transform="translate(1766.85,1280.80) scale(1.0351,1)" font-size="18.26" fill="#9a9a9a" stroke="#9a9a9a" stroke-width="0.4" >-24</text>
<text transform="translate(1766.85,1331.60) scale(1.0351,1)" font-size="18.26" fill="#9a9a9a" stroke="#9a9a9a" stroke-width="0.4" >-30</text>
<text transform="translate(1766.85,1382.40) scale(1.0351,1)" font-size="18.26" fill="#9a9a9a" stroke="#9a9a9a" stroke-width="0.4" >-36</text>
<text transform="translate(1766.85,1433.20) scale(1.0351,1)" font-size="18.26" fill="#9a9a9a" stroke="#9a9a9a" stroke-width="0.4" >-42</text>
<text transform="translate(1766.85,1484.00) scale(1.0351,1)" font-size="18.26" fill="#9a9a9a" stroke="#9a9a9a" stroke-width="0.4" >-48</text>
<text transform="translate(1766.85,1534.80) scale(1.0351,1)" font-size="18.26" fill="#9a9a9a" stroke="#9a9a9a" stroke-width="0.4" >-54</text>
<text transform="translate(1766.76,1580.00) scale(0.8987,1)" font-size="20.58" fill="#9a9a9a" stroke="#9a9a9a" stroke-width="0.4" >dB</text>
<rect x="1674.30" y="1070.00" width="5.60" height="499.70" fill="#000" />
<rect x="1676.10" y="1072.00" width="2.00" height="495.70" fill="#1f1f1f" />
<rect x="1665.80" y="1080.00" width="7.60" height="2.00" fill="#8e8e8e" />
<rect x="1678.60" y="1080.00" width="7.60" height="2.00" fill="#8e8e8e" />
<text transform="translate(1652.31,1088.00) scale(0.9478,1)" font-size="17.39" fill="#9a9a9a" stroke="#9a9a9a" stroke-width="0.4" >6</text>
<rect x="1665.80" y="1134.00" width="7.60" height="2.00" fill="#8e8e8e" />
<rect x="1678.60" y="1134.00" width="7.60" height="2.00" fill="#8e8e8e" />
<text transform="translate(1652.31,1142.00) scale(0.9478,1)" font-size="17.39" fill="#9a9a9a" stroke="#9a9a9a" stroke-width="0.4" >3</text>
<rect x="1665.80" y="1177.00" width="7.60" height="2.00" fill="#8e8e8e" />
<rect x="1678.60" y="1177.00" width="7.60" height="2.00" fill="#8e8e8e" />
<text transform="translate(1652.39,1185.00) scale(0.9478,1)" font-size="17.39" fill="#9a9a9a" stroke="#9a9a9a" stroke-width="0.4" >1</text>
<rect x="1665.80" y="1201.00" width="7.60" height="2.00" fill="#8e8e8e" />
<rect x="1678.60" y="1201.00" width="7.60" height="2.00" fill="#8e8e8e" />
<text transform="translate(1652.23,1209.00) scale(0.9478,1)" font-size="17.39" fill="#9a9a9a" stroke="#9a9a9a" stroke-width="0.4" >0</text>
<rect x="1665.80" y="1223.00" width="7.60" height="2.00" fill="#8e8e8e" />
<rect x="1678.60" y="1223.00" width="7.60" height="2.00" fill="#8e8e8e" />
<text transform="translate(1646.87,1231.00) scale(0.9478,1)" font-size="17.39" fill="#9a9a9a" stroke="#9a9a9a" stroke-width="0.4" >-1</text>
<rect x="1665.80" y="1284.00" width="7.60" height="2.00" fill="#8e8e8e" />
<rect x="1678.60" y="1284.00" width="7.60" height="2.00" fill="#8e8e8e" />
<text transform="translate(1646.62,1292.00) scale(0.9478,1)" font-size="17.39" fill="#9a9a9a" stroke="#9a9a9a" stroke-width="0.4" >-4</text>
<rect x="1665.80" y="1334.00" width="7.60" height="2.00" fill="#8e8e8e" />
<rect x="1678.60" y="1334.00" width="7.60" height="2.00" fill="#8e8e8e" />
<text transform="translate(1646.95,1342.00) scale(0.9478,1)" font-size="17.39" fill="#9a9a9a" stroke="#9a9a9a" stroke-width="0.4" >-7</text>
<rect x="1665.80" y="1376.00" width="7.60" height="2.00" fill="#8e8e8e" />
<rect x="1678.60" y="1376.00" width="7.60" height="2.00" fill="#8e8e8e" />
<text transform="translate(1637.56,1384.00) scale(0.9478,1)" font-size="17.39" fill="#9a9a9a" stroke="#9a9a9a" stroke-width="0.4" >-10</text>
<rect x="1665.80" y="1408.00" width="7.60" height="2.00" fill="#8e8e8e" />
<rect x="1678.60" y="1408.00" width="7.60" height="2.00" fill="#8e8e8e" />
<text transform="translate(1637.64,1416.00) scale(0.9478,1)" font-size="17.39" fill="#9a9a9a" stroke="#9a9a9a" stroke-width="0.4" >-13</text>
<rect x="1665.80" y="1436.00" width="7.60" height="2.00" fill="#8e8e8e" />
<rect x="1678.60" y="1436.00" width="7.60" height="2.00" fill="#8e8e8e" />
<text transform="translate(1637.64,1444.00) scale(0.9478,1)" font-size="17.39" fill="#9a9a9a" stroke="#9a9a9a" stroke-width="0.4" >-16</text>
<rect x="1665.80" y="1458.00" width="7.60" height="2.00" fill="#8e8e8e" />
<rect x="1678.60" y="1458.00" width="7.60" height="2.00" fill="#8e8e8e" />
<text transform="translate(1637.72,1466.00) scale(0.9478,1)" font-size="17.39" fill="#9a9a9a" stroke="#9a9a9a" stroke-width="0.4" >-19</text>
<rect x="1665.80" y="1492.00" width="7.60" height="2.00" fill="#8e8e8e" />
<rect x="1678.60" y="1492.00" width="7.60" height="2.00" fill="#8e8e8e" />
<text transform="translate(1637.64,1500.00) scale(0.9478,1)" font-size="17.39" fill="#9a9a9a" stroke="#9a9a9a" stroke-width="0.4" >-25</text>
<rect x="1665.80" y="1514.00" width="7.60" height="2.00" fill="#8e8e8e" />
<rect x="1678.60" y="1514.00" width="7.60" height="2.00" fill="#8e8e8e" />
<text transform="translate(1637.72,1522.00) scale(0.9478,1)" font-size="17.39" fill="#9a9a9a" stroke="#9a9a9a" stroke-width="0.4" >-31</text>
<rect x="1665.80" y="1542.00" width="7.60" height="2.00" fill="#8e8e8e" />
<rect x="1678.60" y="1542.00" width="7.60" height="2.00" fill="#8e8e8e" />
<rect x="1665.80" y="1558.00" width="7.60" height="2.00" fill="#8e8e8e" />
<rect x="1678.60" y="1558.00" width="7.60" height="2.00" fill="#8e8e8e" />
<text transform="translate(1644.23,1566.00) scale(0.9478,1)" font-size="17.39" fill="#9a9a9a" stroke="#9a9a9a" stroke-width="0.4" >-∞</text>
<rect x="1672.00" y="1097.80" width="2.00" height="2.00" fill="#8e8e8e" />
<rect x="1672.00" y="1113.70" width="2.00" height="2.00" fill="#8e8e8e" />
<rect x="1672.00" y="1144.00" width="2.00" height="2.00" fill="#8e8e8e" />
<rect x="1672.00" y="1154.00" width="2.00" height="2.00" fill="#8e8e8e" />
<rect x="1672.00" y="1166.00" width="2.00" height="2.00" fill="#8e8e8e" />
<rect x="1672.00" y="1244.00" width="2.00" height="2.00" fill="#8e8e8e" />
<rect x="1672.00" y="1266.00" width="2.00" height="2.00" fill="#8e8e8e" />
<rect x="1672.00" y="1301.80" width="2.00" height="2.00" fill="#8e8e8e" />
<rect x="1672.00" y="1318.00" width="2.00" height="2.00" fill="#8e8e8e" />
<rect x="1672.00" y="1350.00" width="2.00" height="2.00" fill="#8e8e8e" />
<rect x="1672.00" y="1361.80" width="2.00" height="2.00" fill="#8e8e8e" />
<rect x="1672.00" y="1387.80" width="2.00" height="2.00" fill="#8e8e8e" />
<rect x="1672.00" y="1397.70" width="2.00" height="2.00" fill="#8e8e8e" />
<rect x="1672.00" y="1417.80" width="2.00" height="2.00" fill="#8e8e8e" />
<rect x="1672.00" y="1428.00" width="2.00" height="2.00" fill="#8e8e8e" />
<rect x="1672.00" y="1443.60" width="2.00" height="2.00" fill="#8e8e8e" />
<rect x="1672.00" y="1452.00" width="2.00" height="2.00" fill="#8e8e8e" />
<rect x="1672.00" y="1465.50" width="2.00" height="2.00" fill="#8e8e8e" />
<rect x="1672.00" y="1474.60" width="2.00" height="2.00" fill="#8e8e8e" />
<rect x="1672.00" y="1482.00" width="2.00" height="2.00" fill="#8e8e8e" />
<rect x="1672.00" y="1489.50" width="2.00" height="2.00" fill="#8e8e8e" />
<rect x="1672.00" y="1496.60" width="2.00" height="2.00" fill="#8e8e8e" />
<rect x="1672.00" y="1500.40" width="2.00" height="2.00" fill="#8e8e8e" />
<rect x="1672.00" y="1504.30" width="2.00" height="2.00" fill="#8e8e8e" />
<rect x="1672.00" y="1508.20" width="2.00" height="2.00" fill="#8e8e8e" />
<rect x="1672.00" y="1521.80" width="2.00" height="2.00" fill="#8e8e8e" />
<rect x="1672.00" y="1528.20" width="2.00" height="2.00" fill="#8e8e8e" />
<rect x="1672.00" y="1534.00" width="2.00" height="2.00" fill="#8e8e8e" />
<rect x="1672.00" y="1538.60" width="2.00" height="2.00" fill="#8e8e8e" />
<rect x="1666" y="1172" width="22" height="58" rx="5" fill="#1b1b1b" stroke="#828282" stroke-width="4"/>
<rect x="1672" y="1199.3" width="10" height="3.6" rx="1.8" fill="#828282"/>
<text transform="translate(1641.18,1619.00) scale(0.8967,1)" font-size="22.90" fill="#4a96f5" stroke="#4a96f5" stroke-width="0.4" >0.0</text>
<text transform="translate(1629.00,1662.00) scale(0.8845,1)" font-size="23.48" fill="#9a9a9a" stroke="#9a9a9a" stroke-width="0.4" >A9</text>
<text transform="translate(1695.84,1662.00) scale(0.9248,1)" font-size="24.06" fill="#bdbdbd" stroke="#bdbdbd" stroke-width="0.4" >Music 2</text>
<rect x="1800.20" y="224.00" width="1.60" height="1455.50" fill="#272727" />
<rect x="1817.00" y="384.00" width="161.50" height="2.20" fill="#3c3c3c" />
<path d="M1960.00 247.45 L1971.00 247.45 L1965.50 253.95 Z" fill="#6f6f6f"/>
<path d="M1960.00 277.75 L1971.00 277.75 L1965.50 284.25 Z" fill="#6f6f6f"/>
<path d="M1960.00 307.75 L1971.00 307.75 L1965.50 314.25 Z" fill="#6f6f6f"/>
<path d="M1960.00 337.75 L1971.00 337.75 L1965.50 344.25 Z" fill="#6f6f6f"/>
<path d="M1960.00 368.05 L1971.00 368.05 L1965.50 374.55 Z" fill="#6f6f6f"/>
<path d="M1960.00 397.15 L1971.00 397.15 L1965.50 403.65 Z" fill="#6f6f6f"/>
<path d="M1960.00 427.35 L1971.00 427.35 L1965.50 433.85 Z" fill="#6f6f6f"/>
<path d="M1960.00 457.75 L1971.00 457.75 L1965.50 464.25 Z" fill="#6f6f6f"/>
<path d="M1960.00 487.35 L1971.00 487.35 L1965.50 493.85 Z" fill="#6f6f6f"/>
<path d="M1960.00 517.45 L1971.00 517.45 L1965.50 523.95 Z" fill="#6f6f6f"/>
<path d="M1816.5 541 Q1817.5 535.3 1824 535.3 L1958.6 535.3" fill="none" stroke="#7a7a7a" stroke-width="2"/>
<circle cx="1958.6" cy="551.4" r="16.2" fill="none" stroke="#777" stroke-width="2.2"/>
<path d="M1949.85 681.00 L1957.20 688.00 L1964.55 681.00" fill="none" stroke="#3a3a3a" stroke-width="2.2"/>
<text transform="translate(1823.18,740.00) scale(0.8879,1)" font-size="24.20" fill="#c6c6c6" stroke="#c6c6c6" stroke-width="0.4" >Master</text>
<path d="M1949.85 727.00 L1957.20 735.40 L1964.55 727.00" fill="none" stroke="#c8c8c8" stroke-width="2.2"/>
<circle cx="1896" cy="813" r="44.05" fill="none" stroke="#858585" stroke-width="3.4"/>
<rect x="1894.20" y="770.60" width="3.60" height="42.60" fill="#858585" />
<text transform="translate(1837.08,856.20) scale(0.9788,1)" font-size="23.19" fill="#4a96f5" stroke="#4a96f5" stroke-width="0.4" >L</text>
<text transform="translate(1945.14,856.20) scale(0.8408,1)" font-size="23.19" fill="#4a96f5" stroke="#4a96f5" stroke-width="0.4" >R</text>
<text transform="translate(1882.18,890.00) scale(0.9260,1)" font-size="22.17" fill="#4a96f5" stroke="#4a96f5" stroke-width="0.4" >0.0</text>
<text transform="translate(1809.80,934.00) scale(0.9382,1)" font-size="22.75" fill="#9c9c9c" stroke="#9c9c9c" stroke-width="0.4" >1-2, 3-4</text>
<g fill="#a8a8a8"><rect x="1944" y="912.3" width="8" height="6"/><rect x="1962" y="914.3" width="6" height="6"/><rect x="1962" y="922.3" width="6" height="6"/><rect x="1962" y="930.3" width="6" height="5.6"/></g>
<path d="M1951 915.3 L1955.5 915.3 L1955.5 925.3 L1962 925.3" fill="none" stroke="#a8a8a8" stroke-width="2"/>
<text transform="translate(1823.24,973.50) scale(0.8932,1)" font-size="23.19" fill="#c6c6c6" stroke="#c6c6c6" stroke-width="0.4" >Read</text>
<path d="M1949.85 961.30 L1957.20 969.70 L1964.55 961.30" fill="none" stroke="#c8c8c8" stroke-width="2.2"/>
<g fill="#bababa"><rect x="1845.65" y="1003.9" width="2.2" height="14.2"/><rect x="1858.15" y="1003.9" width="2.2" height="14.2"/></g>
<path d="M1846.75 1005.10 L1853.00 1011.80 L1859.25 1005.10" fill="none" stroke="#bababa" stroke-width="2.3"/>
<g fill="#bababa"><rect x="1893.85" y="1003.90" width="8.2" height="2.2"/><rect x="1891.65" y="1006.10" width="2.2" height="3.5"/><rect x="1893.85" y="1009.60" width="6.2" height="2.2"/><rect x="1900.05" y="1011.80" width="2.0" height="4.1"/><rect x="1891.65" y="1015.90" width="8.4" height="2.2"/></g>
<text transform="translate(1831.84,1065.70) scale(0.9929,1)" font-size="16.67" fill="#9a9a9a" stroke="#9a9a9a" stroke-width="0.4" >dB</text>
<rect x="1892.00" y="1048.00" width="49.80" height="535.60" fill="#000" />
<rect x="1894.00" y="1050.00" width="45.80" height="531.60" fill="#161616" />
<rect x="1894.00" y="1066.80" width="45.80" height="2.00" fill="#000" />
<rect x="1916.20" y="1050.00" width="1.80" height="17.00" fill="#000" />
<rect x="1894.00" y="1578.00" width="22.00" height="2.30" fill="#f2f200" />
<rect x="1918.00" y="1578.00" width="21.80" height="2.30" fill="#f2f200" />
<rect x="1942.20" y="1070.00" width="8.00" height="2.00" fill="#8e8e8e" />
<rect x="1942.20" y="1078.47" width="4.20" height="2.00" fill="#8e8e8e" />
<rect x="1942.20" y="1086.93" width="4.20" height="2.00" fill="#8e8e8e" />
<rect x="1942.20" y="1095.40" width="4.20" height="2.00" fill="#8e8e8e" />
<rect x="1942.20" y="1103.87" width="4.20" height="2.00" fill="#8e8e8e" />
<rect x="1942.20" y="1112.33" width="4.20" height="2.00" fill="#8e8e8e" />
<rect x="1942.20" y="1120.80" width="8.00" height="2.00" fill="#8e8e8e" />
<rect x="1942.20" y="1129.27" width="4.20" height="2.00" fill="#8e8e8e" />
<rect x="1942.20" y="1137.73" width="4.20" height="2.00" fill="#8e8e8e" />
<rect x="1942.20" y="1146.20" width="4.20" height="2.00" fill="#8e8e8e" />
<rect x="1942.20" y="1154.67" width="4.20" height="2.00" fill="#8e8e8e" />
<rect x="1942.20" y="1163.13" width="4.20" height="2.00" fill="#8e8e8e" />
<rect x="1942.20" y="1171.60" width="8.00" height="2.00" fill="#8e8e8e" />
<rect x="1942.20" y="1180.07" width="4.20" height="2.00" fill="#8e8e8e" />
<rect x="1942.20" y="1188.53" width="4.20" height="2.00" fill="#8e8e8e" />
<rect x="1942.20" y="1197.00" width="4.20" height="2.00" fill="#8e8e8e" />
<rect x="1942.20" y="1205.47" width="4.20" height="2.00" fill="#8e8e8e" />
<rect x="1942.20" y="1213.93" width="4.20" height="2.00" fill="#8e8e8e" />
<rect x="1942.20" y="1222.40" width="8.00" height="2.00" fill="#8e8e8e" />
<rect x="1942.20" y="1230.87" width="4.20" height="2.00" fill="#8e8e8e" />
<rect x="1942.20" y="1239.33" width="4.20" height="2.00" fill="#8e8e8e" />
<rect x="1942.20" y="1247.80" width="4.20" height="2.00" fill="#8e8e8e" />
<rect x="1942.20" y="1256.27" width="4.20" height="2.00" fill="#8e8e8e" />
<rect x="1942.20" y="1264.73" width="4.20" height="2.00" fill="#8e8e8e" />
<rect x="1942.20" y="1273.20" width="8.00" height="2.00" fill="#8e8e8e" />
<rect x="1942.20" y="1281.67" width="4.20" height="2.00" fill="#8e8e8e" />
<rect x="1942.20" y="1290.13" width="4.20" height="2.00" fill="#8e8e8e" />
<rect x="1942.20" y="1298.60" width="4.20" height="2.00" fill="#8e8e8e" />
<rect x="1942.20" y="1307.07" width="4.20" height="2.00" fill="#8e8e8e" />
<rect x="1942.20" y="1315.53" width="4.20" height="2.00" fill="#8e8e8e" />
<rect x="1942.20" y="1324.00" width="8.00" height="2.00" fill="#8e8e8e" />
<rect x="1942.20" y="1332.47" width="4.20" height="2.00" fill="#8e8e8e" />
<rect x="1942.20" y="1340.93" width="4.20" height="2.00" fill="#8e8e8e" />
<rect x="1942.20" y="1349.40" width="4.20" height="2.00" fill="#8e8e8e" />
<rect x="1942.20" y="1357.87" width="4.20" height="2.00" fill="#8e8e8e" />
<rect x="1942.20" y="1366.33" width="4.20" height="2.00" fill="#8e8e8e" />
<rect x="1942.20" y="1374.80" width="8.00" height="2.00" fill="#8e8e8e" />
<rect x="1942.20" y="1383.27" width="4.20" height="2.00" fill="#8e8e8e" />
<rect x="1942.20" y="1391.73" width="4.20" height="2.00" fill="#8e8e8e" />
<rect x="1942.20" y="1400.20" width="4.20" height="2.00" fill="#8e8e8e" />
<rect x="1942.20" y="1408.67" width="4.20" height="2.00" fill="#8e8e8e" />
<rect x="1942.20" y="1417.13" width="4.20" height="2.00" fill="#8e8e8e" />
<rect x="1942.20" y="1425.60" width="8.00" height="2.00" fill="#8e8e8e" />
<rect x="1942.20" y="1434.07" width="4.20" height="2.00" fill="#8e8e8e" />
<rect x="1942.20" y="1442.53" width="4.20" height="2.00" fill="#8e8e8e" />
<rect x="1942.20" y="1451.00" width="4.20" height="2.00" fill="#8e8e8e" />
<rect x="1942.20" y="1459.47" width="4.20" height="2.00" fill="#8e8e8e" />
<rect x="1942.20" y="1467.93" width="4.20" height="2.00" fill="#8e8e8e" />
<rect x="1942.20" y="1476.40" width="8.00" height="2.00" fill="#8e8e8e" />
<rect x="1942.20" y="1484.87" width="4.20" height="2.00" fill="#8e8e8e" />
<rect x="1942.20" y="1493.34" width="4.20" height="2.00" fill="#8e8e8e" />
<rect x="1942.20" y="1501.80" width="4.20" height="2.00" fill="#8e8e8e" />
<rect x="1942.20" y="1510.27" width="4.20" height="2.00" fill="#8e8e8e" />
<rect x="1942.20" y="1518.74" width="4.20" height="2.00" fill="#8e8e8e" />
<rect x="1942.20" y="1527.20" width="8.00" height="2.00" fill="#8e8e8e" />
<rect x="1942.20" y="1535.67" width="4.20" height="2.00" fill="#8e8e8e" />
<rect x="1942.20" y="1544.14" width="4.20" height="2.00" fill="#8e8e8e" />
<rect x="1942.20" y="1552.60" width="4.20" height="2.00" fill="#8e8e8e" />
<rect x="1942.20" y="1561.07" width="4.20" height="2.00" fill="#8e8e8e" />
<rect x="1942.20" y="1569.54" width="4.20" height="2.00" fill="#8e8e8e" />
<rect x="1942.20" y="1578.00" width="8.00" height="2.00" fill="#8e8e8e" />
<text transform="translate(1956.94,1077.60) scale(1.0351,1)" font-size="18.26" fill="#9a9a9a" stroke="#9a9a9a" stroke-width="0.4" >0</text>
<text transform="translate(1956.85,1128.40) scale(1.0351,1)" font-size="18.26" fill="#9a9a9a" stroke="#9a9a9a" stroke-width="0.4" >-6</text>
<text transform="translate(1956.85,1179.20) scale(1.0351,1)" font-size="18.26" fill="#9a9a9a" stroke="#9a9a9a" stroke-width="0.4" >-12</text>
<text transform="translate(1956.85,1230.00) scale(1.0351,1)" font-size="18.26" fill="#9a9a9a" stroke="#9a9a9a" stroke-width="0.4" >-18</text>
<text transform="translate(1956.85,1280.80) scale(1.0351,1)" font-size="18.26" fill="#9a9a9a" stroke="#9a9a9a" stroke-width="0.4" >-24</text>
<text transform="translate(1956.85,1331.60) scale(1.0351,1)" font-size="18.26" fill="#9a9a9a" stroke="#9a9a9a" stroke-width="0.4" >-30</text>
<text transform="translate(1956.85,1382.40) scale(1.0351,1)" font-size="18.26" fill="#9a9a9a" stroke="#9a9a9a" stroke-width="0.4" >-36</text>
<text transform="translate(1956.85,1433.20) scale(1.0351,1)" font-size="18.26" fill="#9a9a9a" stroke="#9a9a9a" stroke-width="0.4" >-42</text>
<text transform="translate(1956.85,1484.00) scale(1.0351,1)" font-size="18.26" fill="#9a9a9a" stroke="#9a9a9a" stroke-width="0.4" >-48</text>
<text transform="translate(1956.85,1534.80) scale(1.0351,1)" font-size="18.26" fill="#9a9a9a" stroke="#9a9a9a" stroke-width="0.4" >-54</text>
<text transform="translate(1956.76,1580.00) scale(0.8987,1)" font-size="20.58" fill="#9a9a9a" stroke="#9a9a9a" stroke-width="0.4" >dB</text>
<rect x="1864.30" y="1070.00" width="5.60" height="499.70" fill="#000" />
<rect x="1866.10" y="1072.00" width="2.00" height="495.70" fill="#1f1f1f" />
<rect x="1855.80" y="1080.00" width="7.60" height="2.00" fill="#8e8e8e" />
<rect x="1868.60" y="1080.00" width="7.60" height="2.00" fill="#8e8e8e" />
<text transform="translate(1842.31,1088.00) scale(0.9478,1)" font-size="17.39" fill="#9a9a9a" stroke="#9a9a9a" stroke-width="0.4" >6</text>
<rect x="1855.80" y="1134.00" width="7.60" height="2.00" fill="#8e8e8e" />
<rect x="1868.60" y="1134.00" width="7.60" height="2.00" fill="#8e8e8e" />
<text transform="translate(1842.31,1142.00) scale(0.9478,1)" font-size="17.39" fill="#9a9a9a" stroke="#9a9a9a" stroke-width="0.4" >3</text>
<rect x="1855.80" y="1177.00" width="7.60" height="2.00" fill="#8e8e8e" />
<rect x="1868.60" y="1177.00" width="7.60" height="2.00" fill="#8e8e8e" />
<text transform="translate(1842.39,1185.00) scale(0.9478,1)" font-size="17.39" fill="#9a9a9a" stroke="#9a9a9a" stroke-width="0.4" >1</text>
<rect x="1855.80" y="1201.00" width="7.60" height="2.00" fill="#8e8e8e" />
<rect x="1868.60" y="1201.00" width="7.60" height="2.00" fill="#8e8e8e" />
<text transform="translate(1842.23,1209.00) scale(0.9478,1)" font-size="17.39" fill="#9a9a9a" stroke="#9a9a9a" stroke-width="0.4" >0</text>
<rect x="1855.80" y="1223.00" width="7.60" height="2.00" fill="#8e8e8e" />
<rect x="1868.60" y="1223.00" width="7.60" height="2.00" fill="#8e8e8e" />
<text transform="translate(1836.87,1231.00) scale(0.9478,1)" font-size="17.39" fill="#9a9a9a" stroke="#9a9a9a" stroke-width="0.4" >-1</text>
<rect x="1855.80" y="1284.00" width="7.60" height="2.00" fill="#8e8e8e" />
<rect x="1868.60" y="1284.00" width="7.60" height="2.00" fill="#8e8e8e" />
<text transform="translate(1836.62,1292.00) scale(0.9478,1)" font-size="17.39" fill="#9a9a9a" stroke="#9a9a9a" stroke-width="0.4" >-4</text>
<rect x="1855.80" y="1334.00" width="7.60" height="2.00" fill="#8e8e8e" />
<rect x="1868.60" y="1334.00" width="7.60" height="2.00" fill="#8e8e8e" />
<text transform="translate(1836.95,1342.00) scale(0.9478,1)" font-size="17.39" fill="#9a9a9a" stroke="#9a9a9a" stroke-width="0.4" >-7</text>
<rect x="1855.80" y="1376.00" width="7.60" height="2.00" fill="#8e8e8e" />
<rect x="1868.60" y="1376.00" width="7.60" height="2.00" fill="#8e8e8e" />
<text transform="translate(1827.56,1384.00) scale(0.9478,1)" font-size="17.39" fill="#9a9a9a" stroke="#9a9a9a" stroke-width="0.4" >-10</text>
<rect x="1855.80" y="1408.00" width="7.60" height="2.00" fill="#8e8e8e" />
<rect x="1868.60" y="1408.00" width="7.60" height="2.00" fill="#8e8e8e" />
<text transform="translate(1827.64,1416.00) scale(0.9478,1)" font-size="17.39" fill="#9a9a9a" stroke="#9a9a9a" stroke-width="0.4" >-13</text>
<rect x="1855.80" y="1436.00" width="7.60" height="2.00" fill="#8e8e8e" />
<rect x="1868.60" y="1436.00" width="7.60" height="2.00" fill="#8e8e8e" />
<text transform="translate(1827.64,1444.00) scale(0.9478,1)" font-size="17.39" fill="#9a9a9a" stroke="#9a9a9a" stroke-width="0.4" >-16</text>
<rect x="1855.80" y="1458.00" width="7.60" height="2.00" fill="#8e8e8e" />
<rect x="1868.60" y="1458.00" width="7.60" height="2.00" fill="#8e8e8e" />
<text transform="translate(1827.72,1466.00) scale(0.9478,1)" font-size="17.39" fill="#9a9a9a" stroke="#9a9a9a" stroke-width="0.4" >-19</text>
<rect x="1855.80" y="1492.00" width="7.60" height="2.00" fill="#8e8e8e" />
<rect x="1868.60" y="1492.00" width="7.60" height="2.00" fill="#8e8e8e" />
<text transform="translate(1827.64,1500.00) scale(0.9478,1)" font-size="17.39" fill="#9a9a9a" stroke="#9a9a9a" stroke-width="0.4" >-25</text>
<rect x="1855.80" y="1514.00" width="7.60" height="2.00" fill="#8e8e8e" />
<rect x="1868.60" y="1514.00" width="7.60" height="2.00" fill="#8e8e8e" />
<text transform="translate(1827.72,1522.00) scale(0.9478,1)" font-size="17.39" fill="#9a9a9a" stroke="#9a9a9a" stroke-width="0.4" >-31</text>
<rect x="1855.80" y="1542.00" width="7.60" height="2.00" fill="#8e8e8e" />
<rect x="1868.60" y="1542.00" width="7.60" height="2.00" fill="#8e8e8e" />
<rect x="1855.80" y="1558.00" width="7.60" height="2.00" fill="#8e8e8e" />
<rect x="1868.60" y="1558.00" width="7.60" height="2.00" fill="#8e8e8e" />
<text transform="translate(1834.23,1566.00) scale(0.9478,1)" font-size="17.39" fill="#9a9a9a" stroke="#9a9a9a" stroke-width="0.4" >-∞</text>
<rect x="1862.00" y="1097.80" width="2.00" height="2.00" fill="#8e8e8e" />
<rect x="1862.00" y="1113.70" width="2.00" height="2.00" fill="#8e8e8e" />
<rect x="1862.00" y="1144.00" width="2.00" height="2.00" fill="#8e8e8e" />
<rect x="1862.00" y="1154.00" width="2.00" height="2.00" fill="#8e8e8e" />
<rect x="1862.00" y="1166.00" width="2.00" height="2.00" fill="#8e8e8e" />
<rect x="1862.00" y="1244.00" width="2.00" height="2.00" fill="#8e8e8e" />
<rect x="1862.00" y="1266.00" width="2.00" height="2.00" fill="#8e8e8e" />
<rect x="1862.00" y="1301.80" width="2.00" height="2.00" fill="#8e8e8e" />
<rect x="1862.00" y="1318.00" width="2.00" height="2.00" fill="#8e8e8e" />
<rect x="1862.00" y="1350.00" width="2.00" height="2.00" fill="#8e8e8e" />
<rect x="1862.00" y="1361.80" width="2.00" height="2.00" fill="#8e8e8e" />
<rect x="1862.00" y="1387.80" width="2.00" height="2.00" fill="#8e8e8e" />
<rect x="1862.00" y="1397.70" width="2.00" height="2.00" fill="#8e8e8e" />
<rect x="1862.00" y="1417.80" width="2.00" height="2.00" fill="#8e8e8e" />
<rect x="1862.00" y="1428.00" width="2.00" height="2.00" fill="#8e8e8e" />
<rect x="1862.00" y="1443.60" width="2.00" height="2.00" fill="#8e8e8e" />
<rect x="1862.00" y="1452.00" width="2.00" height="2.00" fill="#8e8e8e" />
<rect x="1862.00" y="1465.50" width="2.00" height="2.00" fill="#8e8e8e" />
<rect x="1862.00" y="1474.60" width="2.00" height="2.00" fill="#8e8e8e" />
<rect x="1862.00" y="1482.00" width="2.00" height="2.00" fill="#8e8e8e" />
<rect x="1862.00" y="1489.50" width="2.00" height="2.00" fill="#8e8e8e" />
<rect x="1862.00" y="1496.60" width="2.00" height="2.00" fill="#8e8e8e" />
<rect x="1862.00" y="1500.40" width="2.00" height="2.00" fill="#8e8e8e" />
<rect x="1862.00" y="1504.30" width="2.00" height="2.00" fill="#8e8e8e" />
<rect x="1862.00" y="1508.20" width="2.00" height="2.00" fill="#8e8e8e" />
<rect x="1862.00" y="1521.80" width="2.00" height="2.00" fill="#8e8e8e" />
<rect x="1862.00" y="1528.20" width="2.00" height="2.00" fill="#8e8e8e" />
<rect x="1862.00" y="1534.00" width="2.00" height="2.00" fill="#8e8e8e" />
<rect x="1862.00" y="1538.60" width="2.00" height="2.00" fill="#8e8e8e" />
<rect x="1856" y="1172" width="22" height="58" rx="5" fill="#1b1b1b" stroke="#828282" stroke-width="4"/>
<rect x="1862" y="1199.3" width="10" height="3.6" rx="1.8" fill="#828282"/>
<text transform="translate(1831.18,1619.00) scale(0.8967,1)" font-size="22.90" fill="#4a96f5" stroke="#4a96f5" stroke-width="0.4" >0.0</text>
<text transform="translate(1818.03,1662.00) scale(0.9197,1)" font-size="23.48" fill="#9a9a9a" stroke="#9a9a9a" stroke-width="0.4" >S1</text>
<text transform="translate(1880.17,1662.00) scale(0.9248,1)" font-size="24.06" fill="#bdbdbd" stroke="#bdbdbd" stroke-width="0.4" >Diag sub</text>
<rect x="1990.20" y="224.00" width="1.60" height="1455.50" fill="#272727" />
<rect x="2007.00" y="384.00" width="161.50" height="2.20" fill="#3c3c3c" />
<path d="M2150.00 247.45 L2161.00 247.45 L2155.50 253.95 Z" fill="#6f6f6f"/>
<path d="M2150.00 277.75 L2161.00 277.75 L2155.50 284.25 Z" fill="#6f6f6f"/>
<path d="M2150.00 307.75 L2161.00 307.75 L2155.50 314.25 Z" fill="#6f6f6f"/>
<path d="M2150.00 337.75 L2161.00 337.75 L2155.50 344.25 Z" fill="#6f6f6f"/>
<path d="M2150.00 368.05 L2161.00 368.05 L2155.50 374.55 Z" fill="#6f6f6f"/>
<path d="M2150.00 397.15 L2161.00 397.15 L2155.50 403.65 Z" fill="#6f6f6f"/>
<path d="M2150.00 427.35 L2161.00 427.35 L2155.50 433.85 Z" fill="#6f6f6f"/>
<path d="M2150.00 457.75 L2161.00 457.75 L2155.50 464.25 Z" fill="#6f6f6f"/>
<path d="M2150.00 487.35 L2161.00 487.35 L2155.50 493.85 Z" fill="#6f6f6f"/>
<path d="M2150.00 517.45 L2161.00 517.45 L2155.50 523.95 Z" fill="#6f6f6f"/>
<path d="M2006.5 541 Q2007.5 535.3 2014 535.3 L2148.6 535.3" fill="none" stroke="#7a7a7a" stroke-width="2"/>
<circle cx="2148.6" cy="551.4" r="16.2" fill="none" stroke="#777" stroke-width="2.2"/>
<path d="M2139.85 681.00 L2147.20 688.00 L2154.55 681.00" fill="none" stroke="#3a3a3a" stroke-width="2.2"/>
<text transform="translate(2013.18,740.00) scale(0.8879,1)" font-size="24.20" fill="#c6c6c6" stroke="#c6c6c6" stroke-width="0.4" >Master</text>
<path d="M2139.85 727.00 L2147.20 735.40 L2154.55 727.00" fill="none" stroke="#c8c8c8" stroke-width="2.2"/>
<circle cx="2086" cy="813" r="44.05" fill="none" stroke="#858585" stroke-width="3.4"/>
<rect x="2084.20" y="770.60" width="3.60" height="42.60" fill="#858585" />
<text transform="translate(2027.08,856.20) scale(0.9788,1)" font-size="23.19" fill="#4a96f5" stroke="#4a96f5" stroke-width="0.4" >L</text>
<text transform="translate(2135.14,856.20) scale(0.8408,1)" font-size="23.19" fill="#4a96f5" stroke="#4a96f5" stroke-width="0.4" >R</text>
<text transform="translate(2072.18,890.00) scale(0.9260,1)" font-size="22.17" fill="#4a96f5" stroke="#4a96f5" stroke-width="0.4" >0.0</text>
<text transform="translate(1999.79,934.00) scale(0.9410,1)" font-size="22.75" fill="#9c9c9c" stroke="#9c9c9c" stroke-width="0.4" >1-2, 5-6</text>
<g fill="#a8a8a8"><rect x="2134" y="912.3" width="8" height="6"/><rect x="2152" y="914.3" width="6" height="6"/><rect x="2152" y="922.3" width="6" height="6"/><rect x="2152" y="930.3" width="6" height="5.6"/></g>
<path d="M2141 915.3 L2145.5 915.3 L2145.5 925.3 L2152 925.3" fill="none" stroke="#a8a8a8" stroke-width="2"/>
<text transform="translate(2013.24,973.50) scale(0.8932,1)" font-size="23.19" fill="#c6c6c6" stroke="#c6c6c6" stroke-width="0.4" >Read</text>
<path d="M2139.85 961.30 L2147.20 969.70 L2154.55 961.30" fill="none" stroke="#c8c8c8" stroke-width="2.2"/>
<g fill="#bababa"><rect x="2035.65" y="1003.9" width="2.2" height="14.2"/><rect x="2048.15" y="1003.9" width="2.2" height="14.2"/></g>
<path d="M2036.75 1005.10 L2043.00 1011.80 L2049.25 1005.10" fill="none" stroke="#bababa" stroke-width="2.3"/>
<g fill="#bababa"><rect x="2083.85" y="1003.90" width="8.2" height="2.2"/><rect x="2081.65" y="1006.10" width="2.2" height="3.5"/><rect x="2083.85" y="1009.60" width="6.2" height="2.2"/><rect x="2090.05" y="1011.80" width="2.0" height="4.1"/><rect x="2081.65" y="1015.90" width="8.4" height="2.2"/></g>
<text transform="translate(2021.84,1065.70) scale(0.9929,1)" font-size="16.67" fill="#9a9a9a" stroke="#9a9a9a" stroke-width="0.4" >dB</text>
<rect x="2082.00" y="1048.00" width="49.80" height="535.60" fill="#000" />
<rect x="2084.00" y="1050.00" width="45.80" height="531.60" fill="#161616" />
<rect x="2084.00" y="1066.80" width="45.80" height="2.00" fill="#000" />
<rect x="2106.20" y="1050.00" width="1.80" height="17.00" fill="#000" />
<rect x="2084.00" y="1578.00" width="22.00" height="2.30" fill="#f2f200" />
<rect x="2108.00" y="1578.00" width="21.80" height="2.30" fill="#f2f200" />
<rect x="2132.20" y="1070.00" width="8.00" height="2.00" fill="#8e8e8e" />
<rect x="2132.20" y="1078.47" width="4.20" height="2.00" fill="#8e8e8e" />
<rect x="2132.20" y="1086.93" width="4.20" height="2.00" fill="#8e8e8e" />
<rect x="2132.20" y="1095.40" width="4.20" height="2.00" fill="#8e8e8e" />
<rect x="2132.20" y="1103.87" width="4.20" height="2.00" fill="#8e8e8e" />
<rect x="2132.20" y="1112.33" width="4.20" height="2.00" fill="#8e8e8e" />
<rect x="2132.20" y="1120.80" width="8.00" height="2.00" fill="#8e8e8e" />
<rect x="2132.20" y="1129.27" width="4.20" height="2.00" fill="#8e8e8e" />
<rect x="2132.20" y="1137.73" width="4.20" height="2.00" fill="#8e8e8e" />
<rect x="2132.20" y="1146.20" width="4.20" height="2.00" fill="#8e8e8e" />
<rect x="2132.20" y="1154.67" width="4.20" height="2.00" fill="#8e8e8e" />
<rect x="2132.20" y="1163.13" width="4.20" height="2.00" fill="#8e8e8e" />
<rect x="2132.20" y="1171.60" width="8.00" height="2.00" fill="#8e8e8e" />
<rect x="2132.20" y="1180.07" width="4.20" height="2.00" fill="#8e8e8e" />
<rect x="2132.20" y="1188.53" width="4.20" height="2.00" fill="#8e8e8e" />
<rect x="2132.20" y="1197.00" width="4.20" height="2.00" fill="#8e8e8e" />
<rect x="2132.20" y="1205.47" width="4.20" height="2.00" fill="#8e8e8e" />
<rect x="2132.20" y="1213.93" width="4.20" height="2.00" fill="#8e8e8e" />
<rect x="2132.20" y="1222.40" width="8.00" height="2.00" fill="#8e8e8e" />
<rect x="2132.20" y="1230.87" width="4.20" height="2.00" fill="#8e8e8e" />
<rect x="2132.20" y="1239.33" width="4.20" height="2.00" fill="#8e8e8e" />
<rect x="2132.20" y="1247.80" width="4.20" height="2.00" fill="#8e8e8e" />
<rect x="2132.20" y="1256.27" width="4.20" height="2.00" fill="#8e8e8e" />
<rect x="2132.20" y="1264.73" width="4.20" height="2.00" fill="#8e8e8e" />
<rect x="2132.20" y="1273.20" width="8.00" height="2.00" fill="#8e8e8e" />
<rect x="2132.20" y="1281.67" width="4.20" height="2.00" fill="#8e8e8e" />
<rect x="2132.20" y="1290.13" width="4.20" height="2.00" fill="#8e8e8e" />
<rect x="2132.20" y="1298.60" width="4.20" height="2.00" fill="#8e8e8e" />
<rect x="2132.20" y="1307.07" width="4.20" height="2.00" fill="#8e8e8e" />
<rect x="2132.20" y="1315.53" width="4.20" height="2.00" fill="#8e8e8e" />
<rect x="2132.20" y="1324.00" width="8.00" height="2.00" fill="#8e8e8e" />
<rect x="2132.20" y="1332.47" width="4.20" height="2.00" fill="#8e8e8e" />
<rect x="2132.20" y="1340.93" width="4.20" height="2.00" fill="#8e8e8e" />
<rect x="2132.20" y="1349.40" width="4.20" height="2.00" fill="#8e8e8e" />
<rect x="2132.20" y="1357.87" width="4.20" height="2.00" fill="#8e8e8e" />
<rect x="2132.20" y="1366.33" width="4.20" height="2.00" fill="#8e8e8e" />
<rect x="2132.20" y="1374.80" width="8.00" height="2.00" fill="#8e8e8e" />
<rect x="2132.20" y="1383.27" width="4.20" height="2.00" fill="#8e8e8e" />
<rect x="2132.20" y="1391.73" width="4.20" height="2.00" fill="#8e8e8e" />
<rect x="2132.20" y="1400.20" width="4.20" height="2.00" fill="#8e8e8e" />
<rect x="2132.20" y="1408.67" width="4.20" height="2.00" fill="#8e8e8e" />
<rect x="2132.20" y="1417.13" width="4.20" height="2.00" fill="#8e8e8e" />
<rect x="2132.20" y="1425.60" width="8.00" height="2.00" fill="#8e8e8e" />
<rect x="2132.20" y="1434.07" width="4.20" height="2.00" fill="#8e8e8e" />
<rect x="2132.20" y="1442.53" width="4.20" height="2.00" fill="#8e8e8e" />
<rect x="2132.20" y="1451.00" width="4.20" height="2.00" fill="#8e8e8e" />
<rect x="2132.20" y="1459.47" width="4.20" height="2.00" fill="#8e8e8e" />
<rect x="2132.20" y="1467.93" width="4.20" height="2.00" fill="#8e8e8e" />
<rect x="2132.20" y="1476.40" width="8.00" height="2.00" fill="#8e8e8e" />
<rect x="2132.20" y="1484.87" width="4.20" height="2.00" fill="#8e8e8e" />
<rect x="2132.20" y="1493.34" width="4.20" height="2.00" fill="#8e8e8e" />
<rect x="2132.20" y="1501.80" width="4.20" height="2.00" fill="#8e8e8e" />
<rect x="2132.20" y="1510.27" width="4.20" height="2.00" fill="#8e8e8e" />
<rect x="2132.20" y="1518.74" width="4.20" height="2.00" fill="#8e8e8e" />
<rect x="2132.20" y="1527.20" width="8.00" height="2.00" fill="#8e8e8e" />
<rect x="2132.20" y="1535.67" width="4.20" height="2.00" fill="#8e8e8e" />
<rect x="2132.20" y="1544.14" width="4.20" height="2.00" fill="#8e8e8e" />
<rect x="2132.20" y="1552.60" width="4.20" height="2.00" fill="#8e8e8e" />
<rect x="2132.20" y="1561.07" width="4.20" height="2.00" fill="#8e8e8e" />
<rect x="2132.20" y="1569.54" width="4.20" height="2.00" fill="#8e8e8e" />
<rect x="2132.20" y="1578.00" width="8.00" height="2.00" fill="#8e8e8e" />
<text transform="translate(2146.94,1077.60) scale(1.0351,1)" font-size="18.26" fill="#9a9a9a" stroke="#9a9a9a" stroke-width="0.4" >0</text>
<text transform="translate(2146.85,1128.40) scale(1.0351,1)" font-size="18.26" fill="#9a9a9a" stroke="#9a9a9a" stroke-width="0.4" >-6</text>
<text transform="translate(2146.85,1179.20) scale(1.0351,1)" font-size="18.26" fill="#9a9a9a" stroke="#9a9a9a" stroke-width="0.4" >-12</text>
<text transform="translate(2146.85,1230.00) scale(1.0351,1)" font-size="18.26" fill="#9a9a9a" stroke="#9a9a9a" stroke-width="0.4" >-18</text>
<text transform="translate(2146.85,1280.80) scale(1.0351,1)" font-size="18.26" fill="#9a9a9a" stroke="#9a9a9a" stroke-width="0.4" >-24</text>
<text transform="translate(2146.85,1331.60) scale(1.0351,1)" font-size="18.26" fill="#9a9a9a" stroke="#9a9a9a" stroke-width="0.4" >-30</text>
<text transform="translate(2146.85,1382.40) scale(1.0351,1)" font-size="18.26" fill="#9a9a9a" stroke="#9a9a9a" stroke-width="0.4" >-36</text>
<text transform="translate(2146.85,1433.20) scale(1.0351,1)" font-size="18.26" fill="#9a9a9a" stroke="#9a9a9a" stroke-width="0.4" >-42</text>
<text transform="translate(2146.85,1484.00) scale(1.0351,1)" font-size="18.26" fill="#9a9a9a" stroke="#9a9a9a" stroke-width="0.4" >-48</text>
<text transform="translate(2146.85,1534.80) scale(1.0351,1)" font-size="18.26" fill="#9a9a9a" stroke="#9a9a9a" stroke-width="0.4" >-54</text>
<text transform="translate(2146.76,1580.00) scale(0.8987,1)" font-size="20.58" fill="#9a9a9a" stroke="#9a9a9a" stroke-width="0.4" >dB</text>
<rect x="2054.30" y="1070.00" width="5.60" height="499.70" fill="#000" />
<rect x="2056.10" y="1072.00" width="2.00" height="495.70" fill="#1f1f1f" />
<rect x="2045.80" y="1080.00" width="7.60" height="2.00" fill="#8e8e8e" />
<rect x="2058.60" y="1080.00" width="7.60" height="2.00" fill="#8e8e8e" />
<text transform="translate(2032.31,1088.00) scale(0.9478,1)" font-size="17.39" fill="#9a9a9a" stroke="#9a9a9a" stroke-width="0.4" >6</text>
<rect x="2045.80" y="1134.00" width="7.60" height="2.00" fill="#8e8e8e" />
<rect x="2058.60" y="1134.00" width="7.60" height="2.00" fill="#8e8e8e" />
<text transform="translate(2032.31,1142.00) scale(0.9478,1)" font-size="17.39" fill="#9a9a9a" stroke="#9a9a9a" stroke-width="0.4" >3</text>
<rect x="2045.80" y="1177.00" width="7.60" height="2.00" fill="#8e8e8e" />
<rect x="2058.60" y="1177.00" width="7.60" height="2.00" fill="#8e8e8e" />
<text transform="translate(2032.39,1185.00) scale(0.9478,1)" font-size="17.39" fill="#9a9a9a" stroke="#9a9a9a" stroke-width="0.4" >1</text>
<rect x="2045.80" y="1201.00" width="7.60" height="2.00" fill="#8e8e8e" />
<rect x="2058.60" y="1201.00" width="7.60" height="2.00" fill="#8e8e8e" />
<text transform="translate(2032.23,1209.00) scale(0.9478,1)" font-size="17.39" fill="#9a9a9a" stroke="#9a9a9a" stroke-width="0.4" >0</text>
<rect x="2045.80" y="1223.00" width="7.60" height="2.00" fill="#8e8e8e" />
<rect x="2058.60" y="1223.00" width="7.60" height="2.00" fill="#8e8e8e" />
<text transform="translate(2026.87,1231.00) scale(0.9478,1)" font-size="17.39" fill="#9a9a9a" stroke="#9a9a9a" stroke-width="0.4" >-1</text>
<rect x="2045.80" y="1284.00" width="7.60" height="2.00" fill="#8e8e8e" />
<rect x="2058.60" y="1284.00" width="7.60" height="2.00" fill="#8e8e8e" />
<text transform="translate(2026.62,1292.00) scale(0.9478,1)" font-size="17.39" fill="#9a9a9a" stroke="#9a9a9a" stroke-width="0.4" >-4</text>
<rect x="2045.80" y="1334.00" width="7.60" height="2.00" fill="#8e8e8e" />
<rect x="2058.60" y="1334.00" width="7.60" height="2.00" fill="#8e8e8e" />
<text transform="translate(2026.95,1342.00) scale(0.9478,1)" font-size="17.39" fill="#9a9a9a" stroke="#9a9a9a" stroke-width="0.4" >-7</text>
<rect x="2045.80" y="1376.00" width="7.60" height="2.00" fill="#8e8e8e" />
<rect x="2058.60" y="1376.00" width="7.60" height="2.00" fill="#8e8e8e" />
<text transform="translate(2017.56,1384.00) scale(0.9478,1)" font-size="17.39" fill="#9a9a9a" stroke="#9a9a9a" stroke-width="0.4" >-10</text>
<rect x="2045.80" y="1408.00" width="7.60" height="2.00" fill="#8e8e8e" />
<rect x="2058.60" y="1408.00" width="7.60" height="2.00" fill="#8e8e8e" />
<text transform="translate(2017.64,1416.00) scale(0.9478,1)" font-size="17.39" fill="#9a9a9a" stroke="#9a9a9a" stroke-width="0.4" >-13</text>
<rect x="2045.80" y="1436.00" width="7.60" height="2.00" fill="#8e8e8e" />
<rect x="2058.60" y="1436.00" width="7.60" height="2.00" fill="#8e8e8e" />
<text transform="translate(2017.64,1444.00) scale(0.9478,1)" font-size="17.39" fill="#9a9a9a" stroke="#9a9a9a" stroke-width="0.4" >-16</text>
<rect x="2045.80" y="1458.00" width="7.60" height="2.00" fill="#8e8e8e" />
<rect x="2058.60" y="1458.00" width="7.60" height="2.00" fill="#8e8e8e" />
<text transform="translate(2017.72,1466.00) scale(0.9478,1)" font-size="17.39" fill="#9a9a9a" stroke="#9a9a9a" stroke-width="0.4" >-19</text>
<rect x="2045.80" y="1492.00" width="7.60" height="2.00" fill="#8e8e8e" />
<rect x="2058.60" y="1492.00" width="7.60" height="2.00" fill="#8e8e8e" />
<text transform="translate(2017.64,1500.00) scale(0.9478,1)" font-size="17.39" fill="#9a9a9a" stroke="#9a9a9a" stroke-width="0.4" >-25</text>
<rect x="2045.80" y="1514.00" width="7.60" height="2.00" fill="#8e8e8e" />
<rect x="2058.60" y="1514.00" width="7.60" height="2.00" fill="#8e8e8e" />
<text transform="translate(2017.72,1522.00) scale(0.9478,1)" font-size="17.39" fill="#9a9a9a" stroke="#9a9a9a" stroke-width="0.4" >-31</text>
<rect x="2045.80" y="1542.00" width="7.60" height="2.00" fill="#8e8e8e" />
<rect x="2058.60" y="1542.00" width="7.60" height="2.00" fill="#8e8e8e" />
<rect x="2045.80" y="1558.00" width="7.60" height="2.00" fill="#8e8e8e" />
<rect x="2058.60" y="1558.00" width="7.60" height="2.00" fill="#8e8e8e" />
<text transform="translate(2024.23,1566.00) scale(0.9478,1)" font-size="17.39" fill="#9a9a9a" stroke="#9a9a9a" stroke-width="0.4" >-∞</text>
<rect x="2052.00" y="1097.80" width="2.00" height="2.00" fill="#8e8e8e" />
<rect x="2052.00" y="1113.70" width="2.00" height="2.00" fill="#8e8e8e" />
<rect x="2052.00" y="1144.00" width="2.00" height="2.00" fill="#8e8e8e" />
<rect x="2052.00" y="1154.00" width="2.00" height="2.00" fill="#8e8e8e" />
<rect x="2052.00" y="1166.00" width="2.00" height="2.00" fill="#8e8e8e" />
<rect x="2052.00" y="1244.00" width="2.00" height="2.00" fill="#8e8e8e" />
<rect x="2052.00" y="1266.00" width="2.00" height="2.00" fill="#8e8e8e" />
<rect x="2052.00" y="1301.80" width="2.00" height="2.00" fill="#8e8e8e" />
<rect x="2052.00" y="1318.00" width="2.00" height="2.00" fill="#8e8e8e" />
<rect x="2052.00" y="1350.00" width="2.00" height="2.00" fill="#8e8e8e" />
<rect x="2052.00" y="1361.80" width="2.00" height="2.00" fill="#8e8e8e" />
<rect x="2052.00" y="1387.80" width="2.00" height="2.00" fill="#8e8e8e" />
<rect x="2052.00" y="1397.70" width="2.00" height="2.00" fill="#8e8e8e" />
<rect x="2052.00" y="1417.80" width="2.00" height="2.00" fill="#8e8e8e" />
<rect x="2052.00" y="1428.00" width="2.00" height="2.00" fill="#8e8e8e" />
<rect x="2052.00" y="1443.60" width="2.00" height="2.00" fill="#8e8e8e" />
<rect x="2052.00" y="1452.00" width="2.00" height="2.00" fill="#8e8e8e" />
<rect x="2052.00" y="1465.50" width="2.00" height="2.00" fill="#8e8e8e" />
<rect x="2052.00" y="1474.60" width="2.00" height="2.00" fill="#8e8e8e" />
<rect x="2052.00" y="1482.00" width="2.00" height="2.00" fill="#8e8e8e" />
<rect x="2052.00" y="1489.50" width="2.00" height="2.00" fill="#8e8e8e" />
<rect x="2052.00" y="1496.60" width="2.00" height="2.00" fill="#8e8e8e" />
<rect x="2052.00" y="1500.40" width="2.00" height="2.00" fill="#8e8e8e" />
<rect x="2052.00" y="1504.30" width="2.00" height="2.00" fill="#8e8e8e" />
<rect x="2052.00" y="1508.20" width="2.00" height="2.00" fill="#8e8e8e" />
<rect x="2052.00" y="1521.80" width="2.00" height="2.00" fill="#8e8e8e" />
<rect x="2052.00" y="1528.20" width="2.00" height="2.00" fill="#8e8e8e" />
<rect x="2052.00" y="1534.00" width="2.00" height="2.00" fill="#8e8e8e" />
<rect x="2052.00" y="1538.60" width="2.00" height="2.00" fill="#8e8e8e" />
<rect x="2046" y="1172" width="22" height="58" rx="5" fill="#1b1b1b" stroke="#828282" stroke-width="4"/>
<rect x="2052" y="1199.3" width="10" height="3.6" rx="1.8" fill="#828282"/>
<text transform="translate(2021.18,1619.00) scale(0.8967,1)" font-size="22.90" fill="#4a96f5" stroke="#4a96f5" stroke-width="0.4" >0.0</text>
<text transform="translate(2008.02,1662.00) scale(0.9238,1)" font-size="23.48" fill="#9a9a9a" stroke="#9a9a9a" stroke-width="0.4" >S2</text>
<text transform="translate(2071.78,1662.00) scale(0.9248,1)" font-size="24.06" fill="#bdbdbd" stroke="#bdbdbd" stroke-width="0.4" >SFX sub</text>
<rect x="2180.20" y="224.00" width="1.60" height="1455.50" fill="#272727" />
<rect x="2197.00" y="384.00" width="161.50" height="2.20" fill="#3c3c3c" />
<path d="M2340.00 247.45 L2351.00 247.45 L2345.50 253.95 Z" fill="#6f6f6f"/>
<path d="M2340.00 277.75 L2351.00 277.75 L2345.50 284.25 Z" fill="#6f6f6f"/>
<path d="M2340.00 307.75 L2351.00 307.75 L2345.50 314.25 Z" fill="#6f6f6f"/>
<path d="M2340.00 337.75 L2351.00 337.75 L2345.50 344.25 Z" fill="#6f6f6f"/>
<path d="M2340.00 368.05 L2351.00 368.05 L2345.50 374.55 Z" fill="#6f6f6f"/>
<path d="M2340.00 397.15 L2351.00 397.15 L2345.50 403.65 Z" fill="#6f6f6f"/>
<path d="M2340.00 427.35 L2351.00 427.35 L2345.50 433.85 Z" fill="#6f6f6f"/>
<path d="M2340.00 457.75 L2351.00 457.75 L2345.50 464.25 Z" fill="#6f6f6f"/>
<path d="M2340.00 487.35 L2351.00 487.35 L2345.50 493.85 Z" fill="#6f6f6f"/>
<path d="M2340.00 517.45 L2351.00 517.45 L2345.50 523.95 Z" fill="#6f6f6f"/>
<path d="M2196.5 541 Q2197.5 535.3 2204 535.3 L2338.6 535.3" fill="none" stroke="#7a7a7a" stroke-width="2"/>
<circle cx="2338.6" cy="551.4" r="16.2" fill="none" stroke="#777" stroke-width="2.2"/>
<path d="M2329.85 681.00 L2337.20 688.00 L2344.55 681.00" fill="none" stroke="#3a3a3a" stroke-width="2.2"/>
<text transform="translate(2203.18,740.00) scale(0.8879,1)" font-size="24.20" fill="#c6c6c6" stroke="#c6c6c6" stroke-width="0.4" >Master</text>
<path d="M2329.85 727.00 L2337.20 735.40 L2344.55 727.00" fill="none" stroke="#c8c8c8" stroke-width="2.2"/>
<circle cx="2276" cy="813" r="44.05" fill="none" stroke="#858585" stroke-width="3.4"/>
<rect x="2274.20" y="770.60" width="3.60" height="42.60" fill="#858585" />
<text transform="translate(2217.08,856.20) scale(0.9788,1)" font-size="23.19" fill="#4a96f5" stroke="#4a96f5" stroke-width="0.4" >L</text>
<text transform="translate(2325.14,856.20) scale(0.8408,1)" font-size="23.19" fill="#4a96f5" stroke="#4a96f5" stroke-width="0.4" >R</text>
<text transform="translate(2262.18,890.00) scale(0.9260,1)" font-size="22.17" fill="#4a96f5" stroke="#4a96f5" stroke-width="0.4" >0.0</text>
<text transform="translate(2189.79,934.00) scale(0.9410,1)" font-size="22.75" fill="#9c9c9c" stroke="#9c9c9c" stroke-width="0.4" >1-2, 7-8</text>
<g fill="#a8a8a8"><rect x="2324" y="912.3" width="8" height="6"/><rect x="2342" y="914.3" width="6" height="6"/><rect x="2342" y="922.3" width="6" height="6"/><rect x="2342" y="930.3" width="6" height="5.6"/></g>
<path d="M2331 915.3 L2335.5 915.3 L2335.5 925.3 L2342 925.3" fill="none" stroke="#a8a8a8" stroke-width="2"/>
<text transform="translate(2203.24,973.50) scale(0.8932,1)" font-size="23.19" fill="#c6c6c6" stroke="#c6c6c6" stroke-width="0.4" >Read</text>
<path d="M2329.85 961.30 L2337.20 969.70 L2344.55 961.30" fill="none" stroke="#c8c8c8" stroke-width="2.2"/>
<g fill="#bababa"><rect x="2225.65" y="1003.9" width="2.2" height="14.2"/><rect x="2238.15" y="1003.9" width="2.2" height="14.2"/></g>
<path d="M2226.75 1005.10 L2233.00 1011.80 L2239.25 1005.10" fill="none" stroke="#bababa" stroke-width="2.3"/>
<g fill="#bababa"><rect x="2273.85" y="1003.90" width="8.2" height="2.2"/><rect x="2271.65" y="1006.10" width="2.2" height="3.5"/><rect x="2273.85" y="1009.60" width="6.2" height="2.2"/><rect x="2280.05" y="1011.80" width="2.0" height="4.1"/><rect x="2271.65" y="1015.90" width="8.4" height="2.2"/></g>
<text transform="translate(2211.84,1065.70) scale(0.9929,1)" font-size="16.67" fill="#9a9a9a" stroke="#9a9a9a" stroke-width="0.4" >dB</text>
<rect x="2272.00" y="1048.00" width="49.80" height="535.60" fill="#000" />
<rect x="2274.00" y="1050.00" width="45.80" height="531.60" fill="#161616" />
<rect x="2274.00" y="1066.80" width="45.80" height="2.00" fill="#000" />
<rect x="2296.20" y="1050.00" width="1.80" height="17.00" fill="#000" />
<rect x="2274.00" y="1578.00" width="22.00" height="2.30" fill="#f2f200" />
<rect x="2298.00" y="1578.00" width="21.80" height="2.30" fill="#f2f200" />
<rect x="2322.20" y="1070.00" width="8.00" height="2.00" fill="#8e8e8e" />
<rect x="2322.20" y="1078.47" width="4.20" height="2.00" fill="#8e8e8e" />
<rect x="2322.20" y="1086.93" width="4.20" height="2.00" fill="#8e8e8e" />
<rect x="2322.20" y="1095.40" width="4.20" height="2.00" fill="#8e8e8e" />
<rect x="2322.20" y="1103.87" width="4.20" height="2.00" fill="#8e8e8e" />
<rect x="2322.20" y="1112.33" width="4.20" height="2.00" fill="#8e8e8e" />
<rect x="2322.20" y="1120.80" width="8.00" height="2.00" fill="#8e8e8e" />
<rect x="2322.20" y="1129.27" width="4.20" height="2.00" fill="#8e8e8e" />
<rect x="2322.20" y="1137.73" width="4.20" height="2.00" fill="#8e8e8e" />
<rect x="2322.20" y="1146.20" width="4.20" height="2.00" fill="#8e8e8e" />
<rect x="2322.20" y="1154.67" width="4.20" height="2.00" fill="#8e8e8e" />
<rect x="2322.20" y="1163.13" width="4.20" height="2.00" fill="#8e8e8e" />
<rect x="2322.20" y="1171.60" width="8.00" height="2.00" fill="#8e8e8e" />
<rect x="2322.20" y="1180.07" width="4.20" height="2.00" fill="#8e8e8e" />
<rect x="2322.20" y="1188.53" width="4.20" height="2.00" fill="#8e8e8e" />
<rect x="2322.20" y="1197.00" width="4.20" height="2.00" fill="#8e8e8e" />
<rect x="2322.20" y="1205.47" width="4.20" height="2.00" fill="#8e8e8e" />
<rect x="2322.20" y="1213.93" width="4.20" height="2.00" fill="#8e8e8e" />
<rect x="2322.20" y="1222.40" width="8.00" height="2.00" fill="#8e8e8e" />
<rect x="2322.20" y="1230.87" width="4.20" height="2.00" fill="#8e8e8e" />
<rect x="2322.20" y="1239.33" width="4.20" height="2.00" fill="#8e8e8e" />
<rect x="2322.20" y="1247.80" width="4.20" height="2.00" fill="#8e8e8e" />
<rect x="2322.20" y="1256.27" width="4.20" height="2.00" fill="#8e8e8e" />
<rect x="2322.20" y="1264.73" width="4.20" height="2.00" fill="#8e8e8e" />
<rect x="2322.20" y="1273.20" width="8.00" height="2.00" fill="#8e8e8e" />
<rect x="2322.20" y="1281.67" width="4.20" height="2.00" fill="#8e8e8e" />
<rect x="2322.20" y="1290.13" width="4.20" height="2.00" fill="#8e8e8e" />
<rect x="2322.20" y="1298.60" width="4.20" height="2.00" fill="#8e8e8e" />
<rect x="2322.20" y="1307.07" width="4.20" height="2.00" fill="#8e8e8e" />
<rect x="2322.20" y="1315.53" width="4.20" height="2.00" fill="#8e8e8e" />
<rect x="2322.20" y="1324.00" width="8.00" height="2.00" fill="#8e8e8e" />
<rect x="2322.20" y="1332.47" width="4.20" height="2.00" fill="#8e8e8e" />
<rect x="2322.20" y="1340.93" width="4.20" height="2.00" fill="#8e8e8e" />
<rect x="2322.20" y="1349.40" width="4.20" height="2.00" fill="#8e8e8e" />
<rect x="2322.20" y="1357.87" width="4.20" height="2.00" fill="#8e8e8e" />
<rect x="2322.20" y="1366.33" width="4.20" height="2.00" fill="#8e8e8e" />
<rect x="2322.20" y="1374.80" width="8.00" height="2.00" fill="#8e8e8e" />
<rect x="2322.20" y="1383.27" width="4.20" height="2.00" fill="#8e8e8e" />
<rect x="2322.20" y="1391.73" width="4.20" height="2.00" fill="#8e8e8e" />
<rect x="2322.20" y="1400.20" width="4.20" height="2.00" fill="#8e8e8e" />
<rect x="2322.20" y="1408.67" width="4.20" height="2.00" fill="#8e8e8e" />
<rect x="2322.20" y="1417.13" width="4.20" height="2.00" fill="#8e8e8e" />
<rect x="2322.20" y="1425.60" width="8.00" height="2.00" fill="#8e8e8e" />
<rect x="2322.20" y="1434.07" width="4.20" height="2.00" fill="#8e8e8e" />
<rect x="2322.20" y="1442.53" width="4.20" height="2.00" fill="#8e8e8e" />
<rect x="2322.20" y="1451.00" width="4.20" height="2.00" fill="#8e8e8e" />
<rect x="2322.20" y="1459.47" width="4.20" height="2.00" fill="#8e8e8e" />
<rect x="2322.20" y="1467.93" width="4.20" height="2.00" fill="#8e8e8e" />
<rect x="2322.20" y="1476.40" width="8.00" height="2.00" fill="#8e8e8e" />
<rect x="2322.20" y="1484.87" width="4.20" height="2.00" fill="#8e8e8e" />
<rect x="2322.20" y="1493.34" width="4.20" height="2.00" fill="#8e8e8e" />
<rect x="2322.20" y="1501.80" width="4.20" height="2.00" fill="#8e8e8e" />
<rect x="2322.20" y="1510.27" width="4.20" height="2.00" fill="#8e8e8e" />
<rect x="2322.20" y="1518.74" width="4.20" height="2.00" fill="#8e8e8e" />
<rect x="2322.20" y="1527.20" width="8.00" height="2.00" fill="#8e8e8e" />
<rect x="2322.20" y="1535.67" width="4.20" height="2.00" fill="#8e8e8e" />
<rect x="2322.20" y="1544.14" width="4.20" height="2.00" fill="#8e8e8e" />
<rect x="2322.20" y="1552.60" width="4.20" height="2.00" fill="#8e8e8e" />
<rect x="2322.20" y="1561.07" width="4.20" height="2.00" fill="#8e8e8e" />
<rect x="2322.20" y="1569.54" width="4.20" height="2.00" fill="#8e8e8e" />
<rect x="2322.20" y="1578.00" width="8.00" height="2.00" fill="#8e8e8e" />
<text transform="translate(2336.94,1077.60) scale(1.0351,1)" font-size="18.26" fill="#9a9a9a" stroke="#9a9a9a" stroke-width="0.4" >0</text>
<text transform="translate(2336.85,1128.40) scale(1.0351,1)" font-size="18.26" fill="#9a9a9a" stroke="#9a9a9a" stroke-width="0.4" >-6</text>
<text transform="translate(2336.85,1179.20) scale(1.0351,1)" font-size="18.26" fill="#9a9a9a" stroke="#9a9a9a" stroke-width="0.4" >-12</text>
<text transform="translate(2336.85,1230.00) scale(1.0351,1)" font-size="18.26" fill="#9a9a9a" stroke="#9a9a9a" stroke-width="0.4" >-18</text>
<text transform="translate(2336.85,1280.80) scale(1.0351,1)" font-size="18.26" fill="#9a9a9a" stroke="#9a9a9a" stroke-width="0.4" >-24</text>
<text transform="translate(2336.85,1331.60) scale(1.0351,1)" font-size="18.26" fill="#9a9a9a" stroke="#9a9a9a" stroke-width="0.4" >-30</text>
<text transform="translate(2336.85,1382.40) scale(1.0351,1)" font-size="18.26" fill="#9a9a9a" stroke="#9a9a9a" stroke-width="0.4" >-36</text>
<text transform="translate(2336.85,1433.20) scale(1.0351,1)" font-size="18.26" fill="#9a9a9a" stroke="#9a9a9a" stroke-width="0.4" >-42</text>
<text transform="translate(2336.85,1484.00) scale(1.0351,1)" font-size="18.26" fill="#9a9a9a" stroke="#9a9a9a" stroke-width="0.4" >-48</text>
<text transform="translate(2336.85,1534.80) scale(1.0351,1)" font-size="18.26" fill="#9a9a9a" stroke="#9a9a9a" stroke-width="0.4" >-54</text>
<text transform="translate(2336.76,1580.00) scale(0.8987,1)" font-size="20.58" fill="#9a9a9a" stroke="#9a9a9a" stroke-width="0.4" >dB</text>
<rect x="2244.30" y="1070.00" width="5.60" height="499.70" fill="#000" />
<rect x="2246.10" y="1072.00" width="2.00" height="495.70" fill="#1f1f1f" />
<rect x="2235.80" y="1080.00" width="7.60" height="2.00" fill="#8e8e8e" />
<rect x="2248.60" y="1080.00" width="7.60" height="2.00" fill="#8e8e8e" />
<text transform="translate(2222.31,1088.00) scale(0.9478,1)" font-size="17.39" fill="#9a9a9a" stroke="#9a9a9a" stroke-width="0.4" >6</text>
<rect x="2235.80" y="1134.00" width="7.60" height="2.00" fill="#8e8e8e" />
<rect x="2248.60" y="1134.00" width="7.60" height="2.00" fill="#8e8e8e" />
<text transform="translate(2222.31,1142.00) scale(0.9478,1)" font-size="17.39" fill="#9a9a9a" stroke="#9a9a9a" stroke-width="0.4" >3</text>
<rect x="2235.80" y="1177.00" width="7.60" height="2.00" fill="#8e8e8e" />
<rect x="2248.60" y="1177.00" width="7.60" height="2.00" fill="#8e8e8e" />
<text transform="translate(2222.39,1185.00) scale(0.9478,1)" font-size="17.39" fill="#9a9a9a" stroke="#9a9a9a" stroke-width="0.4" >1</text>
<rect x="2235.80" y="1201.00" width="7.60" height="2.00" fill="#8e8e8e" />
<rect x="2248.60" y="1201.00" width="7.60" height="2.00" fill="#8e8e8e" />
<text transform="translate(2222.23,1209.00) scale(0.9478,1)" font-size="17.39" fill="#9a9a9a" stroke="#9a9a9a" stroke-width="0.4" >0</text>
<rect x="2235.80" y="1223.00" width="7.60" height="2.00" fill="#8e8e8e" />
<rect x="2248.60" y="1223.00" width="7.60" height="2.00" fill="#8e8e8e" />
<text transform="translate(2216.87,1231.00) scale(0.9478,1)" font-size="17.39" fill="#9a9a9a" stroke="#9a9a9a" stroke-width="0.4" >-1</text>
<rect x="2235.80" y="1284.00" width="7.60" height="2.00" fill="#8e8e8e" />
<rect x="2248.60" y="1284.00" width="7.60" height="2.00" fill="#8e8e8e" />
<text transform="translate(2216.62,1292.00) scale(0.9478,1)" font-size="17.39" fill="#9a9a9a" stroke="#9a9a9a" stroke-width="0.4" >-4</text>
<rect x="2235.80" y="1334.00" width="7.60" height="2.00" fill="#8e8e8e" />
<rect x="2248.60" y="1334.00" width="7.60" height="2.00" fill="#8e8e8e" />
<text transform="translate(2216.95,1342.00) scale(0.9478,1)" font-size="17.39" fill="#9a9a9a" stroke="#9a9a9a" stroke-width="0.4" >-7</text>
<rect x="2235.80" y="1376.00" width="7.60" height="2.00" fill="#8e8e8e" />
<rect x="2248.60" y="1376.00" width="7.60" height="2.00" fill="#8e8e8e" />
<text transform="translate(2207.56,1384.00) scale(0.9478,1)" font-size="17.39" fill="#9a9a9a" stroke="#9a9a9a" stroke-width="0.4" >-10</text>
<rect x="2235.80" y="1408.00" width="7.60" height="2.00" fill="#8e8e8e" />
<rect x="2248.60" y="1408.00" width="7.60" height="2.00" fill="#8e8e8e" />
<text transform="translate(2207.64,1416.00) scale(0.9478,1)" font-size="17.39" fill="#9a9a9a" stroke="#9a9a9a" stroke-width="0.4" >-13</text>
<rect x="2235.80" y="1436.00" width="7.60" height="2.00" fill="#8e8e8e" />
<rect x="2248.60" y="1436.00" width="7.60" height="2.00" fill="#8e8e8e" />
<text transform="translate(2207.64,1444.00) scale(0.9478,1)" font-size="17.39" fill="#9a9a9a" stroke="#9a9a9a" stroke-width="0.4" >-16</text>
<rect x="2235.80" y="1458.00" width="7.60" height="2.00" fill="#8e8e8e" />
<rect x="2248.60" y="1458.00" width="7.60" height="2.00" fill="#8e8e8e" />
<text transform="translate(2207.72,1466.00) scale(0.9478,1)" font-size="17.39" fill="#9a9a9a" stroke="#9a9a9a" stroke-width="0.4" >-19</text>
<rect x="2235.80" y="1492.00" width="7.60" height="2.00" fill="#8e8e8e" />
<rect x="2248.60" y="1492.00" width="7.60" height="2.00" fill="#8e8e8e" />
<text transform="translate(2207.64,1500.00) scale(0.9478,1)" font-size="17.39" fill="#9a9a9a" stroke="#9a9a9a" stroke-width="0.4" >-25</text>
<rect x="2235.80" y="1514.00" width="7.60" height="2.00" fill="#8e8e8e" />
<rect x="2248.60" y="1514.00" width="7.60" height="2.00" fill="#8e8e8e" />
<text transform="translate(2207.72,1522.00) scale(0.9478,1)" font-size="17.39" fill="#9a9a9a" stroke="#9a9a9a" stroke-width="0.4" >-31</text>
<rect x="2235.80" y="1542.00" width="7.60" height="2.00" fill="#8e8e8e" />
<rect x="2248.60" y="1542.00" width="7.60" height="2.00" fill="#8e8e8e" />
<rect x="2235.80" y="1558.00" width="7.60" height="2.00" fill="#8e8e8e" />
<rect x="2248.60" y="1558.00" width="7.60" height="2.00" fill="#8e8e8e" />
<text transform="translate(2214.23,1566.00) scale(0.9478,1)" font-size="17.39" fill="#9a9a9a" stroke="#9a9a9a" stroke-width="0.4" >-∞</text>
<rect x="2242.00" y="1097.80" width="2.00" height="2.00" fill="#8e8e8e" />
<rect x="2242.00" y="1113.70" width="2.00" height="2.00" fill="#8e8e8e" />
<rect x="2242.00" y="1144.00" width="2.00" height="2.00" fill="#8e8e8e" />
<rect x="2242.00" y="1154.00" width="2.00" height="2.00" fill="#8e8e8e" />
<rect x="2242.00" y="1166.00" width="2.00" height="2.00" fill="#8e8e8e" />
<rect x="2242.00" y="1244.00" width="2.00" height="2.00" fill="#8e8e8e" />
<rect x="2242.00" y="1266.00" width="2.00" height="2.00" fill="#8e8e8e" />
<rect x="2242.00" y="1301.80" width="2.00" height="2.00" fill="#8e8e8e" />
<rect x="2242.00" y="1318.00" width="2.00" height="2.00" fill="#8e8e8e" />
<rect x="2242.00" y="1350.00" width="2.00" height="2.00" fill="#8e8e8e" />
<rect x="2242.00" y="1361.80" width="2.00" height="2.00" fill="#8e8e8e" />
<rect x="2242.00" y="1387.80" width="2.00" height="2.00" fill="#8e8e8e" />
<rect x="2242.00" y="1397.70" width="2.00" height="2.00" fill="#8e8e8e" />
<rect x="2242.00" y="1417.80" width="2.00" height="2.00" fill="#8e8e8e" />
<rect x="2242.00" y="1428.00" width="2.00" height="2.00" fill="#8e8e8e" />
<rect x="2242.00" y="1443.60" width="2.00" height="2.00" fill="#8e8e8e" />
<rect x="2242.00" y="1452.00" width="2.00" height="2.00" fill="#8e8e8e" />
<rect x="2242.00" y="1465.50" width="2.00" height="2.00" fill="#8e8e8e" />
<rect x="2242.00" y="1474.60" width="2.00" height="2.00" fill="#8e8e8e" />
<rect x="2242.00" y="1482.00" width="2.00" height="2.00" fill="#8e8e8e" />
<rect x="2242.00" y="1489.50" width="2.00" height="2.00" fill="#8e8e8e" />
<rect x="2242.00" y="1496.60" width="2.00" height="2.00" fill="#8e8e8e" />
<rect x="2242.00" y="1500.40" width="2.00" height="2.00" fill="#8e8e8e" />
<rect x="2242.00" y="1504.30" width="2.00" height="2.00" fill="#8e8e8e" />
<rect x="2242.00" y="1508.20" width="2.00" height="2.00" fill="#8e8e8e" />
<rect x="2242.00" y="1521.80" width="2.00" height="2.00" fill="#8e8e8e" />
<rect x="2242.00" y="1528.20" width="2.00" height="2.00" fill="#8e8e8e" />
<rect x="2242.00" y="1534.00" width="2.00" height="2.00" fill="#8e8e8e" />
<rect x="2242.00" y="1538.60" width="2.00" height="2.00" fill="#8e8e8e" />
<rect x="2236" y="1172" width="22" height="58" rx="5" fill="#1b1b1b" stroke="#828282" stroke-width="4"/>
<rect x="2242" y="1199.3" width="10" height="3.6" rx="1.8" fill="#828282"/>
<text transform="translate(2211.18,1619.00) scale(0.8967,1)" font-size="22.90" fill="#4a96f5" stroke="#4a96f5" stroke-width="0.4" >0.0</text>
<text transform="translate(2198.03,1662.00) scale(0.9156,1)" font-size="23.48" fill="#9a9a9a" stroke="#9a9a9a" stroke-width="0.4" >S3</text>
<text transform="translate(2261.06,1662.00) scale(0.9248,1)" font-size="24.06" fill="#bdbdbd" stroke="#bdbdbd" stroke-width="0.4" >Amb sub</text>
<rect x="2370.20" y="224.00" width="1.60" height="1455.50" fill="#272727" />
<rect x="2387.00" y="384.00" width="161.50" height="2.20" fill="#3c3c3c" />
<path d="M2530.00 247.45 L2541.00 247.45 L2535.50 253.95 Z" fill="#6f6f6f"/>
<path d="M2530.00 277.75 L2541.00 277.75 L2535.50 284.25 Z" fill="#6f6f6f"/>
<path d="M2530.00 307.75 L2541.00 307.75 L2535.50 314.25 Z" fill="#6f6f6f"/>
<path d="M2530.00 337.75 L2541.00 337.75 L2535.50 344.25 Z" fill="#6f6f6f"/>
<path d="M2530.00 368.05 L2541.00 368.05 L2535.50 374.55 Z" fill="#6f6f6f"/>
<path d="M2530.00 397.15 L2541.00 397.15 L2535.50 403.65 Z" fill="#6f6f6f"/>
<path d="M2530.00 427.35 L2541.00 427.35 L2535.50 433.85 Z" fill="#6f6f6f"/>
<path d="M2530.00 457.75 L2541.00 457.75 L2535.50 464.25 Z" fill="#6f6f6f"/>
<path d="M2530.00 487.35 L2541.00 487.35 L2535.50 493.85 Z" fill="#6f6f6f"/>
<path d="M2530.00 517.45 L2541.00 517.45 L2535.50 523.95 Z" fill="#6f6f6f"/>
<path d="M2386.5 541 Q2387.5 535.3 2394 535.3 L2528.6 535.3" fill="none" stroke="#7a7a7a" stroke-width="2"/>
<circle cx="2528.6" cy="551.4" r="16.2" fill="none" stroke="#777" stroke-width="2.2"/>
<path d="M2519.85 681.00 L2527.20 688.00 L2534.55 681.00" fill="none" stroke="#3a3a3a" stroke-width="2.2"/>
<text transform="translate(2393.18,740.00) scale(0.8879,1)" font-size="24.20" fill="#c6c6c6" stroke="#c6c6c6" stroke-width="0.4" >Master</text>
<path d="M2519.85 727.00 L2527.20 735.40 L2534.55 727.00" fill="none" stroke="#c8c8c8" stroke-width="2.2"/>
<circle cx="2466" cy="813" r="44.05" fill="none" stroke="#858585" stroke-width="3.4"/>
<rect x="2464.20" y="770.60" width="3.60" height="42.60" fill="#858585" />
<text transform="translate(2407.08,856.20) scale(0.9788,1)" font-size="23.19" fill="#4a96f5" stroke="#4a96f5" stroke-width="0.4" >L</text>
<text transform="translate(2515.14,856.20) scale(0.8408,1)" font-size="23.19" fill="#4a96f5" stroke="#4a96f5" stroke-width="0.4" >R</text>
<text transform="translate(2452.18,890.00) scale(0.9260,1)" font-size="22.17" fill="#4a96f5" stroke="#4a96f5" stroke-width="0.4" >0.0</text>
<text transform="translate(2379.90,934.00) scale(0.8800,1)" font-size="22.75" fill="#9c9c9c" stroke="#9c9c9c" stroke-width="0.4" >1-2, 9-10</text>
<g fill="#a8a8a8"><rect x="2514" y="912.3" width="8" height="6"/><rect x="2532" y="914.3" width="6" height="6"/><rect x="2532" y="922.3" width="6" height="6"/><rect x="2532" y="930.3" width="6" height="5.6"/></g>
<path d="M2521 915.3 L2525.5 915.3 L2525.5 925.3 L2532 925.3" fill="none" stroke="#a8a8a8" stroke-width="2"/>
<text transform="translate(2393.24,973.50) scale(0.8932,1)" font-size="23.19" fill="#c6c6c6" stroke="#c6c6c6" stroke-width="0.4" >Read</text>
<path d="M2519.85 961.30 L2527.20 969.70 L2534.55 961.30" fill="none" stroke="#c8c8c8" stroke-width="2.2"/>
<g fill="#bababa"><rect x="2415.65" y="1003.9" width="2.2" height="14.2"/><rect x="2428.15" y="1003.9" width="2.2" height="14.2"/></g>
<path d="M2416.75 1005.10 L2423.00 1011.80 L2429.25 1005.10" fill="none" stroke="#bababa" stroke-width="2.3"/>
<g fill="#bababa"><rect x="2463.85" y="1003.90" width="8.2" height="2.2"/><rect x="2461.65" y="1006.10" width="2.2" height="3.5"/><rect x="2463.85" y="1009.60" width="6.2" height="2.2"/><rect x="2470.05" y="1011.80" width="2.0" height="4.1"/><rect x="2461.65" y="1015.90" width="8.4" height="2.2"/></g>
<text transform="translate(2401.84,1065.70) scale(0.9929,1)" font-size="16.67" fill="#9a9a9a" stroke="#9a9a9a" stroke-width="0.4" >dB</text>
<rect x="2462.00" y="1048.00" width="49.80" height="535.60" fill="#000" />
<rect x="2464.00" y="1050.00" width="45.80" height="531.60" fill="#161616" />
<rect x="2464.00" y="1066.80" width="45.80" height="2.00" fill="#000" />
<rect x="2486.20" y="1050.00" width="1.80" height="17.00" fill="#000" />
<rect x="2464.00" y="1578.00" width="22.00" height="2.30" fill="#f2f200" />
<rect x="2488.00" y="1578.00" width="21.80" height="2.30" fill="#f2f200" />
<rect x="2512.20" y="1070.00" width="8.00" height="2.00" fill="#8e8e8e" />
<rect x="2512.20" y="1078.47" width="4.20" height="2.00" fill="#8e8e8e" />
<rect x="2512.20" y="1086.93" width="4.20" height="2.00" fill="#8e8e8e" />
<rect x="2512.20" y="1095.40" width="4.20" height="2.00" fill="#8e8e8e" />
<rect x="2512.20" y="1103.87" width="4.20" height="2.00" fill="#8e8e8e" />
<rect x="2512.20" y="1112.33" width="4.20" height="2.00" fill="#8e8e8e" />
<rect x="2512.20" y="1120.80" width="8.00" height="2.00" fill="#8e8e8e" />
<rect x="2512.20" y="1129.27" width="4.20" height="2.00" fill="#8e8e8e" />
<rect x="2512.20" y="1137.73" width="4.20" height="2.00" fill="#8e8e8e" />
<rect x="2512.20" y="1146.20" width="4.20" height="2.00" fill="#8e8e8e" />
<rect x="2512.20" y="1154.67" width="4.20" height="2.00" fill="#8e8e8e" />
<rect x="2512.20" y="1163.13" width="4.20" height="2.00" fill="#8e8e8e" />
<rect x="2512.20" y="1171.60" width="8.00" height="2.00" fill="#8e8e8e" />
<rect x="2512.20" y="1180.07" width="4.20" height="2.00" fill="#8e8e8e" />
<rect x="2512.20" y="1188.53" width="4.20" height="2.00" fill="#8e8e8e" />
<rect x="2512.20" y="1197.00" width="4.20" height="2.00" fill="#8e8e8e" />
<rect x="2512.20" y="1205.47" width="4.20" height="2.00" fill="#8e8e8e" />
<rect x="2512.20" y="1213.93" width="4.20" height="2.00" fill="#8e8e8e" />
<rect x="2512.20" y="1222.40" width="8.00" height="2.00" fill="#8e8e8e" />
<rect x="2512.20" y="1230.87" width="4.20" height="2.00" fill="#8e8e8e" />
<rect x="2512.20" y="1239.33" width="4.20" height="2.00" fill="#8e8e8e" />
<rect x="2512.20" y="1247.80" width="4.20" height="2.00" fill="#8e8e8e" />
<rect x="2512.20" y="1256.27" width="4.20" height="2.00" fill="#8e8e8e" />
<rect x="2512.20" y="1264.73" width="4.20" height="2.00" fill="#8e8e8e" />
<rect x="2512.20" y="1273.20" width="8.00" height="2.00" fill="#8e8e8e" />
<rect x="2512.20" y="1281.67" width="4.20" height="2.00" fill="#8e8e8e" />
<rect x="2512.20" y="1290.13" width="4.20" height="2.00" fill="#8e8e8e" />
<rect x="2512.20" y="1298.60" width="4.20" height="2.00" fill="#8e8e8e" />
<rect x="2512.20" y="1307.07" width="4.20" height="2.00" fill="#8e8e8e" />
<rect x="2512.20" y="1315.53" width="4.20" height="2.00" fill="#8e8e8e" />
<rect x="2512.20" y="1324.00" width="8.00" height="2.00" fill="#8e8e8e" />
<rect x="2512.20" y="1332.47" width="4.20" height="2.00" fill="#8e8e8e" />
<rect x="2512.20" y="1340.93" width="4.20" height="2.00" fill="#8e8e8e" />
<rect x="2512.20" y="1349.40" width="4.20" height="2.00" fill="#8e8e8e" />
<rect x="2512.20" y="1357.87" width="4.20" height="2.00" fill="#8e8e8e" />
<rect x="2512.20" y="1366.33" width="4.20" height="2.00" fill="#8e8e8e" />
<rect x="2512.20" y="1374.80" width="8.00" height="2.00" fill="#8e8e8e" />
<rect x="2512.20" y="1383.27" width="4.20" height="2.00" fill="#8e8e8e" />
<rect x="2512.20" y="1391.73" width="4.20" height="2.00" fill="#8e8e8e" />
<rect x="2512.20" y="1400.20" width="4.20" height="2.00" fill="#8e8e8e" />
<rect x="2512.20" y="1408.67" width="4.20" height="2.00" fill="#8e8e8e" />
<rect x="2512.20" y="1417.13" width="4.20" height="2.00" fill="#8e8e8e" />
<rect x="2512.20" y="1425.60" width="8.00" height="2.00" fill="#8e8e8e" />
<rect x="2512.20" y="1434.07" width="4.20" height="2.00" fill="#8e8e8e" />
<rect x="2512.20" y="1442.53" width="4.20" height="2.00" fill="#8e8e8e" />
<rect x="2512.20" y="1451.00" width="4.20" height="2.00" fill="#8e8e8e" />
<rect x="2512.20" y="1459.47" width="4.20" height="2.00" fill="#8e8e8e" />
<rect x="2512.20" y="1467.93" width="4.20" height="2.00" fill="#8e8e8e" />
<rect x="2512.20" y="1476.40" width="8.00" height="2.00" fill="#8e8e8e" />
<rect x="2512.20" y="1484.87" width="4.20" height="2.00" fill="#8e8e8e" />
<rect x="2512.20" y="1493.34" width="4.20" height="2.00" fill="#8e8e8e" />
<rect x="2512.20" y="1501.80" width="4.20" height="2.00" fill="#8e8e8e" />
<rect x="2512.20" y="1510.27" width="4.20" height="2.00" fill="#8e8e8e" />
<rect x="2512.20" y="1518.74" width="4.20" height="2.00" fill="#8e8e8e" />
<rect x="2512.20" y="1527.20" width="8.00" height="2.00" fill="#8e8e8e" />
<rect x="2512.20" y="1535.67" width="4.20" height="2.00" fill="#8e8e8e" />
<rect x="2512.20" y="1544.14" width="4.20" height="2.00" fill="#8e8e8e" />
<rect x="2512.20" y="1552.60" width="4.20" height="2.00" fill="#8e8e8e" />
<rect x="2512.20" y="1561.07" width="4.20" height="2.00" fill="#8e8e8e" />
<rect x="2512.20" y="1569.54" width="4.20" height="2.00" fill="#8e8e8e" />
<rect x="2512.20" y="1578.00" width="8.00" height="2.00" fill="#8e8e8e" />
<text transform="translate(2526.94,1077.60) scale(1.0351,1)" font-size="18.26" fill="#9a9a9a" stroke="#9a9a9a" stroke-width="0.4" >0</text>
<text transform="translate(2526.85,1128.40) scale(1.0351,1)" font-size="18.26" fill="#9a9a9a" stroke="#9a9a9a" stroke-width="0.4" >-6</text>
<text transform="translate(2526.85,1179.20) scale(1.0351,1)" font-size="18.26" fill="#9a9a9a" stroke="#9a9a9a" stroke-width="0.4" >-12</text>
<text transform="translate(2526.85,1230.00) scale(1.0351,1)" font-size="18.26" fill="#9a9a9a" stroke="#9a9a9a" stroke-width="0.4" >-18</text>
<text transform="translate(2526.85,1280.80) scale(1.0351,1)" font-size="18.26" fill="#9a9a9a" stroke="#9a9a9a" stroke-width="0.4" >-24</text>
<text transform="translate(2526.85,1331.60) scale(1.0351,1)" font-size="18.26" fill="#9a9a9a" stroke="#9a9a9a" stroke-width="0.4" >-30</text>
<text transform="translate(2526.85,1382.40) scale(1.0351,1)" font-size="18.26" fill="#9a9a9a" stroke="#9a9a9a" stroke-width="0.4" >-36</text>
<text transform="translate(2526.85,1433.20) scale(1.0351,1)" font-size="18.26" fill="#9a9a9a" stroke="#9a9a9a" stroke-width="0.4" >-42</text>
<text transform="translate(2526.85,1484.00) scale(1.0351,1)" font-size="18.26" fill="#9a9a9a" stroke="#9a9a9a" stroke-width="0.4" >-48</text>
<text transform="translate(2526.85,1534.80) scale(1.0351,1)" font-size="18.26" fill="#9a9a9a" stroke="#9a9a9a" stroke-width="0.4" >-54</text>
<text transform="translate(2526.76,1580.00) scale(0.8987,1)" font-size="20.58" fill="#9a9a9a" stroke="#9a9a9a" stroke-width="0.4" >dB</text>
<rect x="2434.30" y="1070.00" width="5.60" height="499.70" fill="#000" />
<rect x="2436.10" y="1072.00" width="2.00" height="495.70" fill="#1f1f1f" />
<rect x="2425.80" y="1080.00" width="7.60" height="2.00" fill="#8e8e8e" />
<rect x="2438.60" y="1080.00" width="7.60" height="2.00" fill="#8e8e8e" />
<text transform="translate(2412.31,1088.00) scale(0.9478,1)" font-size="17.39" fill="#9a9a9a" stroke="#9a9a9a" stroke-width="0.4" >6</text>
<rect x="2425.80" y="1134.00" width="7.60" height="2.00" fill="#8e8e8e" />
<rect x="2438.60" y="1134.00" width="7.60" height="2.00" fill="#8e8e8e" />
<text transform="translate(2412.31,1142.00) scale(0.9478,1)" font-size="17.39" fill="#9a9a9a" stroke="#9a9a9a" stroke-width="0.4" >3</text>
<rect x="2425.80" y="1177.00" width="7.60" height="2.00" fill="#8e8e8e" />
<rect x="2438.60" y="1177.00" width="7.60" height="2.00" fill="#8e8e8e" />
<text transform="translate(2412.39,1185.00) scale(0.9478,1)" font-size="17.39" fill="#9a9a9a" stroke="#9a9a9a" stroke-width="0.4" >1</text>
<rect x="2425.80" y="1201.00" width="7.60" height="2.00" fill="#8e8e8e" />
<rect x="2438.60" y="1201.00" width="7.60" height="2.00" fill="#8e8e8e" />
<text transform="translate(2412.23,1209.00) scale(0.9478,1)" font-size="17.39" fill="#9a9a9a" stroke="#9a9a9a" stroke-width="0.4" >0</text>
<rect x="2425.80" y="1223.00" width="7.60" height="2.00" fill="#8e8e8e" />
<rect x="2438.60" y="1223.00" width="7.60" height="2.00" fill="#8e8e8e" />
<text transform="translate(2406.87,1231.00) scale(0.9478,1)" font-size="17.39" fill="#9a9a9a" stroke="#9a9a9a" stroke-width="0.4" >-1</text>
<rect x="2425.80" y="1284.00" width="7.60" height="2.00" fill="#8e8e8e" />
<rect x="2438.60" y="1284.00" width="7.60" height="2.00" fill="#8e8e8e" />
<text transform="translate(2406.62,1292.00) scale(0.9478,1)" font-size="17.39" fill="#9a9a9a" stroke="#9a9a9a" stroke-width="0.4" >-4</text>
<rect x="2425.80" y="1334.00" width="7.60" height="2.00" fill="#8e8e8e" />
<rect x="2438.60" y="1334.00" width="7.60" height="2.00" fill="#8e8e8e" />
<text transform="translate(2406.95,1342.00) scale(0.9478,1)" font-size="17.39" fill="#9a9a9a" stroke="#9a9a9a" stroke-width="0.4" >-7</text>
<rect x="2425.80" y="1376.00" width="7.60" height="2.00" fill="#8e8e8e" />
<rect x="2438.60" y="1376.00" width="7.60" height="2.00" fill="#8e8e8e" />
<text transform="translate(2397.56,1384.00) scale(0.9478,1)" font-size="17.39" fill="#9a9a9a" stroke="#9a9a9a" stroke-width="0.4" >-10</text>
<rect x="2425.80" y="1408.00" width="7.60" height="2.00" fill="#8e8e8e" />
<rect x="2438.60" y="1408.00" width="7.60" height="2.00" fill="#8e8e8e" />
<text transform="translate(2397.64,1416.00) scale(0.9478,1)" font-size="17.39" fill="#9a9a9a" stroke="#9a9a9a" stroke-width="0.4" >-13</text>
<rect x="2425.80" y="1436.00" width="7.60" height="2.00" fill="#8e8e8e" />
<rect x="2438.60" y="1436.00" width="7.60" height="2.00" fill="#8e8e8e" />
<text transform="translate(2397.64,1444.00) scale(0.9478,1)" font-size="17.39" fill="#9a9a9a" stroke="#9a9a9a" stroke-width="0.4" >-16</text>
<rect x="2425.80" y="1458.00" width="7.60" height="2.00" fill="#8e8e8e" />
<rect x="2438.60" y="1458.00" width="7.60" height="2.00" fill="#8e8e8e" />
<text transform="translate(2397.72,1466.00) scale(0.9478,1)" font-size="17.39" fill="#9a9a9a" stroke="#9a9a9a" stroke-width="0.4" >-19</text>
<rect x="2425.80" y="1492.00" width="7.60" height="2.00" fill="#8e8e8e" />
<rect x="2438.60" y="1492.00" width="7.60" height="2.00" fill="#8e8e8e" />
<text transform="translate(2397.64,1500.00) scale(0.9478,1)" font-size="17.39" fill="#9a9a9a" stroke="#9a9a9a" stroke-width="0.4" >-25</text>
<rect x="2425.80" y="1514.00" width="7.60" height="2.00" fill="#8e8e8e" />
<rect x="2438.60" y="1514.00" width="7.60" height="2.00" fill="#8e8e8e" />
<text transform="translate(2397.72,1522.00) scale(0.9478,1)" font-size="17.39" fill="#9a9a9a" stroke="#9a9a9a" stroke-width="0.4" >-31</text>
<rect x="2425.80" y="1542.00" width="7.60" height="2.00" fill="#8e8e8e" />
<rect x="2438.60" y="1542.00" width="7.60" height="2.00" fill="#8e8e8e" />
<rect x="2425.80" y="1558.00" width="7.60" height="2.00" fill="#8e8e8e" />
<rect x="2438.60" y="1558.00" width="7.60" height="2.00" fill="#8e8e8e" />
<text transform="translate(2404.23,1566.00) scale(0.9478,1)" font-size="17.39" fill="#9a9a9a" stroke="#9a9a9a" stroke-width="0.4" >-∞</text>
<rect x="2432.00" y="1097.80" width="2.00" height="2.00" fill="#8e8e8e" />
<rect x="2432.00" y="1113.70" width="2.00" height="2.00" fill="#8e8e8e" />
<rect x="2432.00" y="1144.00" width="2.00" height="2.00" fill="#8e8e8e" />
<rect x="2432.00" y="1154.00" width="2.00" height="2.00" fill="#8e8e8e" />
<rect x="2432.00" y="1166.00" width="2.00" height="2.00" fill="#8e8e8e" />
<rect x="2432.00" y="1244.00" width="2.00" height="2.00" fill="#8e8e8e" />
<rect x="2432.00" y="1266.00" width="2.00" height="2.00" fill="#8e8e8e" />
<rect x="2432.00" y="1301.80" width="2.00" height="2.00" fill="#8e8e8e" />
<rect x="2432.00" y="1318.00" width="2.00" height="2.00" fill="#8e8e8e" />
<rect x="2432.00" y="1350.00" width="2.00" height="2.00" fill="#8e8e8e" />
<rect x="2432.00" y="1361.80" width="2.00" height="2.00" fill="#8e8e8e" />
<rect x="2432.00" y="1387.80" width="2.00" height="2.00" fill="#8e8e8e" />
<rect x="2432.00" y="1397.70" width="2.00" height="2.00" fill="#8e8e8e" />
<rect x="2432.00" y="1417.80" width="2.00" height="2.00" fill="#8e8e8e" />
<rect x="2432.00" y="1428.00" width="2.00" height="2.00" fill="#8e8e8e" />
<rect x="2432.00" y="1443.60" width="2.00" height="2.00" fill="#8e8e8e" />
<rect x="2432.00" y="1452.00" width="2.00" height="2.00" fill="#8e8e8e" />
<rect x="2432.00" y="1465.50" width="2.00" height="2.00" fill="#8e8e8e" />
<rect x="2432.00" y="1474.60" width="2.00" height="2.00" fill="#8e8e8e" />
<rect x="2432.00" y="1482.00" width="2.00" height="2.00" fill="#8e8e8e" />
<rect x="2432.00" y="1489.50" width="2.00" height="2.00" fill="#8e8e8e" />
<rect x="2432.00" y="1496.60" width="2.00" height="2.00" fill="#8e8e8e" />
<rect x="2432.00" y="1500.40" width="2.00" height="2.00" fill="#8e8e8e" />
<rect x="2432.00" y="1504.30" width="2.00" height="2.00" fill="#8e8e8e" />
<rect x="2432.00" y="1508.20" width="2.00" height="2.00" fill="#8e8e8e" />
<rect x="2432.00" y="1521.80" width="2.00" height="2.00" fill="#8e8e8e" />
<rect x="2432.00" y="1528.20" width="2.00" height="2.00" fill="#8e8e8e" />
<rect x="2432.00" y="1534.00" width="2.00" height="2.00" fill="#8e8e8e" />
<rect x="2432.00" y="1538.60" width="2.00" height="2.00" fill="#8e8e8e" />
<rect x="2426" y="1172" width="22" height="58" rx="5" fill="#1b1b1b" stroke="#828282" stroke-width="4"/>
<rect x="2432" y="1199.3" width="10" height="3.6" rx="1.8" fill="#828282"/>
<text transform="translate(2401.18,1619.00) scale(0.8967,1)" font-size="22.90" fill="#4a96f5" stroke="#4a96f5" stroke-width="0.4" >0.0</text>
<text transform="translate(2388.04,1662.00) scale(0.9077,1)" font-size="23.48" fill="#9a9a9a" stroke="#9a9a9a" stroke-width="0.4" >S4</text>
<text transform="translate(2443.99,1662.00) scale(0.9248,1)" font-size="24.06" fill="#bdbdbd" stroke="#bdbdbd" stroke-width="0.4" >Music sub</text>
<rect x="2560.20" y="224.00" width="1.60" height="1455.50" fill="#272727" />
<path d="M2719.50 277.75 L2730.50 277.75 L2725.00 284.25 Z" fill="#6f6f6f"/>
<path d="M2719.50 307.75 L2730.50 307.75 L2725.00 314.25 Z" fill="#6f6f6f"/>
<path d="M2719.50 337.75 L2730.50 337.75 L2725.00 344.25 Z" fill="#6f6f6f"/>
<path d="M2719.50 368.05 L2730.50 368.05 L2725.00 374.55 Z" fill="#6f6f6f"/>
<path d="M2720.50 247.00 L2730.50 247.00 L2725.50 253.00 Z" fill="#6a6a6a"/>
<text transform="translate(2577.19,259.40) scale(0.9877,1)" font-size="22.90" fill="#ffffff" stroke="#ffffff" stroke-width="0.4" >Hard Limiter</text>
<g clip-path="url(#lr)"><text transform="translate(2577.33,289.30) scale(0.9271,1)" font-size="22.46" fill="#000000" stroke="#000000" stroke-width="0.4" >Loudness Radar</text></g>
<line x1="2638.15" y1="575.85" x2="2634.97" y2="579.03" stroke="#c8c8c8" stroke-width="2.6" />
<line x1="2631.50" y1="561.00" x2="2628.00" y2="561.00" stroke="#c8c8c8" stroke-width="2.2" />
<line x1="2637.80" y1="545.80" x2="2635.32" y2="543.32" stroke="#c8c8c8" stroke-width="2.2" />
<line x1="2653.00" y1="539.50" x2="2653.00" y2="536.00" stroke="#c8c8c8" stroke-width="2.2" />
<line x1="2668.20" y1="545.80" x2="2670.68" y2="543.32" stroke="#c8c8c8" stroke-width="2.2" />
<line x1="2674.50" y1="561.00" x2="2678.00" y2="561.00" stroke="#c8c8c8" stroke-width="2.2" />
<line x1="2667.85" y1="575.85" x2="2671.03" y2="579.03" stroke="#c8c8c8" stroke-width="2.6" />
<defs><radialGradient id="kg" cx="0.45" cy="0.35" r="0.7"><stop offset="0" stop-color="#f4f4f4"/><stop offset="0.7" stop-color="#e0e0e0"/><stop offset="1" stop-color="#9a9a9a"/></radialGradient></defs>
<circle cx="2653" cy="561" r="17.5" fill="url(#kg)"/>
<line x1="2652.30" y1="560.50" x2="2668.00" y2="574.50" stroke="#000" stroke-width="3.8" />
<circle cx="2718.2" cy="551" r="15.4" fill="#262626" stroke="#858585" stroke-width="2.6"/>
<text transform="translate(2709.25,557.00) scale(1.2687,1)" font-size="19.57" fill="#8e8e8e" font-style="italic" font-family="Liberation Serif" stroke="#8e8e8e" stroke-width="0.4" style="font-family:Liberation Serif">fx</text>
<text transform="translate(2630.78,609.00) scale(1.0274,1)" font-size="21.01" fill="#e6e6e6" stroke="#e6e6e6" stroke-width="0.4" >-0.10</text>
<text transform="translate(2643.72,629.00) scale(0.9265,1)" font-size="21.01" fill="#e6e6e6" stroke="#e6e6e6" stroke-width="0.4" >dB</text>
<g clip-path="url(#ma)"><text transform="translate(2565.90,651.80) scale(1.0484,1)" font-size="19.13" fill="#ffffff" stroke="#ffffff" stroke-width="0.4" >Maximum Amplitude</text></g>
<text transform="translate(2583.15,930.00) scale(0.9487,1)" font-size="23.19" fill="#c6c6c6" stroke="#c6c6c6" stroke-width="0.4" >10</text>
<path d="M2710.65 917.00 L2718.00 925.40 L2725.35 917.00" fill="none" stroke="#c8c8c8" stroke-width="2.2"/>
<text transform="translate(2583.24,973.50) scale(0.8932,1)" font-size="23.19" fill="#c6c6c6" stroke="#c6c6c6" stroke-width="0.4" >Read</text>
<path d="M2710.65 961.30 L2718.00 969.70 L2725.35 961.30" fill="none" stroke="#c8c8c8" stroke-width="2.2"/>
<path d="M2646.1 999.5 L2654.2 1007.3 L2660 1007.3 L2668.1 999.5 L2668.1 1018 L2660 1011.3 L2654.2 1011.3 L2646.1 1018 Z" fill="#a2a2a2"/>
<text transform="translate(2581.86,1061.50) scale(1.0047,1)" font-size="15.94" fill="#9a9a9a" stroke="#9a9a9a" stroke-width="0.4" >dB</text>
<rect x="2640.00" y="1043.70" width="62.00" height="539.30" fill="#000" />
<rect x="2642.00" y="1045.70" width="58.00" height="535.30" fill="#161616" />
<rect x="2642.00" y="1062.00" width="58.00" height="2.00" fill="#000" />
<rect x="2646.90" y="1045.70" width="1.80" height="16.50" fill="#000" />
<rect x="2652.70" y="1045.70" width="1.80" height="16.50" fill="#000" />
<rect x="2658.50" y="1045.70" width="1.80" height="16.50" fill="#000" />
<rect x="2664.30" y="1045.70" width="1.80" height="16.50" fill="#000" />
<rect x="2670.10" y="1045.70" width="1.80" height="16.50" fill="#000" />
<rect x="2675.90" y="1045.70" width="1.80" height="16.50" fill="#000" />
<rect x="2681.70" y="1045.70" width="1.80" height="16.50" fill="#000" />
<rect x="2687.50" y="1045.70" width="1.80" height="16.50" fill="#000" />
<rect x="2693.30" y="1045.70" width="1.80" height="16.50" fill="#000" />
<rect x="2642.50" y="1578.00" width="3.60" height="2.30" fill="#f2f200" />
<rect x="2648.30" y="1578.00" width="3.60" height="2.30" fill="#f2f200" />
<rect x="2654.10" y="1578.00" width="3.60" height="2.30" fill="#f2f200" />
<rect x="2659.90" y="1578.00" width="3.60" height="2.30" fill="#f2f200" />
<rect x="2665.70" y="1578.00" width="3.60" height="2.30" fill="#f2f200" />
<rect x="2671.50" y="1578.00" width="3.60" height="2.30" fill="#f2f200" />
<rect x="2677.30" y="1578.00" width="3.60" height="2.30" fill="#f2f200" />
<rect x="2683.10" y="1578.00" width="3.60" height="2.30" fill="#f2f200" />
<rect x="2688.90" y="1578.00" width="3.60" height="2.30" fill="#f2f200" />
<rect x="2694.70" y="1578.00" width="3.60" height="2.30" fill="#f2f200" />
<rect x="2702.20" y="1066.00" width="8.00" height="2.00" fill="#8e8e8e" />
<rect x="2702.20" y="1074.53" width="4.20" height="2.00" fill="#8e8e8e" />
<rect x="2702.20" y="1083.06" width="4.20" height="2.00" fill="#8e8e8e" />
<rect x="2702.20" y="1091.59" width="4.20" height="2.00" fill="#8e8e8e" />
<rect x="2702.20" y="1100.12" width="4.20" height="2.00" fill="#8e8e8e" />
<rect x="2702.20" y="1108.65" width="4.20" height="2.00" fill="#8e8e8e" />
<rect x="2702.20" y="1117.18" width="8.00" height="2.00" fill="#8e8e8e" />
<rect x="2702.20" y="1125.71" width="4.20" height="2.00" fill="#8e8e8e" />
<rect x="2702.20" y="1134.24" width="4.20" height="2.00" fill="#8e8e8e" />
<rect x="2702.20" y="1142.77" width="4.20" height="2.00" fill="#8e8e8e" />
<rect x="2702.20" y="1151.30" width="4.20" height="2.00" fill="#8e8e8e" />
<rect x="2702.20" y="1159.83" width="4.20" height="2.00" fill="#8e8e8e" />
<rect x="2702.20" y="1168.36" width="8.00" height="2.00" fill="#8e8e8e" />
<rect x="2702.20" y="1176.89" width="4.20" height="2.00" fill="#8e8e8e" />
<rect x="2702.20" y="1185.42" width="4.20" height="2.00" fill="#8e8e8e" />
<rect x="2702.20" y="1193.95" width="4.20" height="2.00" fill="#8e8e8e" />
<rect x="2702.20" y="1202.48" width="4.20" height="2.00" fill="#8e8e8e" />
<rect x="2702.20" y="1211.01" width="4.20" height="2.00" fill="#8e8e8e" />
<rect x="2702.20" y="1219.54" width="8.00" height="2.00" fill="#8e8e8e" />
<rect x="2702.20" y="1228.07" width="4.20" height="2.00" fill="#8e8e8e" />
<rect x="2702.20" y="1236.60" width="4.20" height="2.00" fill="#8e8e8e" />
<rect x="2702.20" y="1245.13" width="4.20" height="2.00" fill="#8e8e8e" />
<rect x="2702.20" y="1253.66" width="4.20" height="2.00" fill="#8e8e8e" />
<rect x="2702.20" y="1262.19" width="4.20" height="2.00" fill="#8e8e8e" />
<rect x="2702.20" y="1270.72" width="8.00" height="2.00" fill="#8e8e8e" />
<rect x="2702.20" y="1279.25" width="4.20" height="2.00" fill="#8e8e8e" />
<rect x="2702.20" y="1287.78" width="4.20" height="2.00" fill="#8e8e8e" />
<rect x="2702.20" y="1296.31" width="4.20" height="2.00" fill="#8e8e8e" />
<rect x="2702.20" y="1304.84" width="4.20" height="2.00" fill="#8e8e8e" />
<rect x="2702.20" y="1313.37" width="4.20" height="2.00" fill="#8e8e8e" />
<rect x="2702.20" y="1321.90" width="8.00" height="2.00" fill="#8e8e8e" />
<rect x="2702.20" y="1330.43" width="4.20" height="2.00" fill="#8e8e8e" />
<rect x="2702.20" y="1338.96" width="4.20" height="2.00" fill="#8e8e8e" />
<rect x="2702.20" y="1347.49" width="4.20" height="2.00" fill="#8e8e8e" />
<rect x="2702.20" y="1356.02" width="4.20" height="2.00" fill="#8e8e8e" />
<rect x="2702.20" y="1364.55" width="4.20" height="2.00" fill="#8e8e8e" />
<rect x="2702.20" y="1373.08" width="8.00" height="2.00" fill="#8e8e8e" />
<rect x="2702.20" y="1381.61" width="4.20" height="2.00" fill="#8e8e8e" />
<rect x="2702.20" y="1390.14" width="4.20" height="2.00" fill="#8e8e8e" />
<rect x="2702.20" y="1398.67" width="4.20" height="2.00" fill="#8e8e8e" />
<rect x="2702.20" y="1407.20" width="4.20" height="2.00" fill="#8e8e8e" />
<rect x="2702.20" y="1415.73" width="4.20" height="2.00" fill="#8e8e8e" />
<rect x="2702.20" y="1424.26" width="8.00" height="2.00" fill="#8e8e8e" />
<rect x="2702.20" y="1432.79" width="4.20" height="2.00" fill="#8e8e8e" />
<rect x="2702.20" y="1441.32" width="4.20" height="2.00" fill="#8e8e8e" />
<rect x="2702.20" y="1449.85" width="4.20" height="2.00" fill="#8e8e8e" />
<rect x="2702.20" y="1458.38" width="4.20" height="2.00" fill="#8e8e8e" />
<rect x="2702.20" y="1466.91" width="4.20" height="2.00" fill="#8e8e8e" />
<rect x="2702.20" y="1475.44" width="8.00" height="2.00" fill="#8e8e8e" />
<rect x="2702.20" y="1483.97" width="4.20" height="2.00" fill="#8e8e8e" />
<rect x="2702.20" y="1492.50" width="4.20" height="2.00" fill="#8e8e8e" />
<rect x="2702.20" y="1501.03" width="4.20" height="2.00" fill="#8e8e8e" />
<rect x="2702.20" y="1509.56" width="4.20" height="2.00" fill="#8e8e8e" />
<rect x="2702.20" y="1518.09" width="4.20" height="2.00" fill="#8e8e8e" />
<rect x="2702.20" y="1526.62" width="8.00" height="2.00" fill="#8e8e8e" />
<rect x="2702.20" y="1535.15" width="4.20" height="2.00" fill="#8e8e8e" />
<rect x="2702.20" y="1543.68" width="4.20" height="2.00" fill="#8e8e8e" />
<rect x="2702.20" y="1552.21" width="4.20" height="2.00" fill="#8e8e8e" />
<rect x="2702.20" y="1560.74" width="4.20" height="2.00" fill="#8e8e8e" />
<rect x="2702.20" y="1569.27" width="4.20" height="2.00" fill="#8e8e8e" />
<rect x="2702.20" y="1577.80" width="8.00" height="2.00" fill="#8e8e8e" />
<text transform="translate(2716.94,1073.60) scale(1.0351,1)" font-size="18.26" fill="#9a9a9a" stroke="#9a9a9a" stroke-width="0.4" >0</text>
<text transform="translate(2716.85,1124.78) scale(1.0351,1)" font-size="18.26" fill="#9a9a9a" stroke="#9a9a9a" stroke-width="0.4" >-6</text>
<text transform="translate(2716.85,1175.96) scale(1.0351,1)" font-size="18.26" fill="#9a9a9a" stroke="#9a9a9a" stroke-width="0.4" >-12</text>
<text transform="translate(2716.85,1227.14) scale(1.0351,1)" font-size="18.26" fill="#9a9a9a" stroke="#9a9a9a" stroke-width="0.4" >-18</text>
<text transform="translate(2716.85,1278.32) scale(1.0351,1)" font-size="18.26" fill="#9a9a9a" stroke="#9a9a9a" stroke-width="0.4" >-24</text>
<text transform="translate(2716.85,1329.50) scale(1.0351,1)" font-size="18.26" fill="#9a9a9a" stroke="#9a9a9a" stroke-width="0.4" >-30</text>
<text transform="translate(2716.85,1380.68) scale(1.0351,1)" font-size="18.26" fill="#9a9a9a" stroke="#9a9a9a" stroke-width="0.4" >-36</text>
<text transform="translate(2716.85,1431.86) scale(1.0351,1)" font-size="18.26" fill="#9a9a9a" stroke="#9a9a9a" stroke-width="0.4" >-42</text>
<text transform="translate(2716.85,1483.04) scale(1.0351,1)" font-size="18.26" fill="#9a9a9a" stroke="#9a9a9a" stroke-width="0.4" >-48</text>
<text transform="translate(2716.85,1534.22) scale(1.0351,1)" font-size="18.26" fill="#9a9a9a" stroke="#9a9a9a" stroke-width="0.4" >-54</text>
<text transform="translate(2716.76,1580.00) scale(0.8987,1)" font-size="20.58" fill="#9a9a9a" stroke="#9a9a9a" stroke-width="0.4" >dB</text>
<rect x="2614.00" y="1070.00" width="5.70" height="499.30" fill="#000" />
<rect x="2615.90" y="1072.00" width="2.00" height="495.30" fill="#1f1f1f" />
<rect x="2606.00" y="1076.50" width="7.00" height="2.00" fill="#8e8e8e" />
<rect x="2619.50" y="1076.50" width="6.50" height="2.00" fill="#8e8e8e" />
<text transform="translate(2592.73,1084.50) scale(0.9478,1)" font-size="17.39" fill="#9a9a9a" stroke="#9a9a9a" stroke-width="0.4" >0</text>
<rect x="2606.00" y="1133.90" width="7.00" height="2.00" fill="#8e8e8e" />
<rect x="2619.50" y="1133.90" width="6.50" height="2.00" fill="#8e8e8e" />
<text transform="translate(2587.45,1141.90) scale(0.9478,1)" font-size="17.39" fill="#9a9a9a" stroke="#9a9a9a" stroke-width="0.4" >-2</text>
<rect x="2606.00" y="1185.90" width="7.00" height="2.00" fill="#8e8e8e" />
<rect x="2619.50" y="1185.90" width="6.50" height="2.00" fill="#8e8e8e" />
<text transform="translate(2587.12,1193.90) scale(0.9478,1)" font-size="17.39" fill="#9a9a9a" stroke="#9a9a9a" stroke-width="0.4" >-4</text>
<rect x="2606.00" y="1251.80" width="7.00" height="2.00" fill="#8e8e8e" />
<rect x="2619.50" y="1251.80" width="6.50" height="2.00" fill="#8e8e8e" />
<text transform="translate(2587.45,1259.80) scale(0.9478,1)" font-size="17.39" fill="#9a9a9a" stroke="#9a9a9a" stroke-width="0.4" >-7</text>
<rect x="2606.00" y="1306.00" width="7.00" height="2.00" fill="#8e8e8e" />
<rect x="2619.50" y="1306.00" width="6.50" height="2.00" fill="#8e8e8e" />
<text transform="translate(2578.06,1314.00) scale(0.9478,1)" font-size="17.39" fill="#9a9a9a" stroke="#9a9a9a" stroke-width="0.4" >-10</text>
<rect x="2606.00" y="1349.80" width="7.00" height="2.00" fill="#8e8e8e" />
<rect x="2619.50" y="1349.80" width="6.50" height="2.00" fill="#8e8e8e" />
<text transform="translate(2578.14,1357.80) scale(0.9478,1)" font-size="17.39" fill="#9a9a9a" stroke="#9a9a9a" stroke-width="0.4" >-13</text>
<rect x="2606.00" y="1387.80" width="7.00" height="2.00" fill="#8e8e8e" />
<rect x="2619.50" y="1387.80" width="6.50" height="2.00" fill="#8e8e8e" />
<text transform="translate(2578.14,1395.80) scale(0.9478,1)" font-size="17.39" fill="#9a9a9a" stroke="#9a9a9a" stroke-width="0.4" >-16</text>
<rect x="2606.00" y="1417.70" width="7.00" height="2.00" fill="#8e8e8e" />
<rect x="2619.50" y="1417.70" width="6.50" height="2.00" fill="#8e8e8e" />
<text transform="translate(2578.22,1425.70) scale(0.9478,1)" font-size="17.39" fill="#9a9a9a" stroke="#9a9a9a" stroke-width="0.4" >-19</text>
<rect x="2606.00" y="1441.80" width="7.00" height="2.00" fill="#8e8e8e" />
<rect x="2619.50" y="1441.80" width="6.50" height="2.00" fill="#8e8e8e" />
<text transform="translate(2578.31,1449.80) scale(0.9478,1)" font-size="17.39" fill="#9a9a9a" stroke="#9a9a9a" stroke-width="0.4" >-22</text>
<rect x="2606.00" y="1479.80" width="7.00" height="2.00" fill="#8e8e8e" />
<rect x="2619.50" y="1479.80" width="6.50" height="2.00" fill="#8e8e8e" />
<text transform="translate(2578.14,1487.80) scale(0.9478,1)" font-size="17.39" fill="#9a9a9a" stroke="#9a9a9a" stroke-width="0.4" >-28</text>
<rect x="2606.00" y="1513.60" width="7.00" height="2.00" fill="#8e8e8e" />
<rect x="2619.50" y="1513.60" width="6.50" height="2.00" fill="#8e8e8e" />
<text transform="translate(2578.31,1521.60) scale(0.9478,1)" font-size="17.39" fill="#9a9a9a" stroke="#9a9a9a" stroke-width="0.4" >-37</text>
<rect x="2606.00" y="1541.70" width="7.00" height="2.00" fill="#8e8e8e" />
<rect x="2619.50" y="1541.70" width="6.50" height="2.00" fill="#8e8e8e" />
<rect x="2606.00" y="1558.00" width="7.00" height="2.00" fill="#8e8e8e" />
<rect x="2619.50" y="1558.00" width="6.50" height="2.00" fill="#8e8e8e" />
<text transform="translate(2584.73,1566.00) scale(0.9478,1)" font-size="17.39" fill="#9a9a9a" stroke="#9a9a9a" stroke-width="0.4" >-∞</text>
<rect x="2612.00" y="1147.90" width="2.00" height="2.00" fill="#8e8e8e" />
<rect x="2612.00" y="1161.80" width="2.00" height="2.00" fill="#8e8e8e" />
<rect x="2612.00" y="1173.80" width="2.00" height="2.00" fill="#8e8e8e" />
<rect x="2612.00" y="1209.90" width="2.00" height="2.00" fill="#8e8e8e" />
<rect x="2612.00" y="1231.60" width="2.00" height="2.00" fill="#8e8e8e" />
<rect x="2612.00" y="1271.70" width="2.00" height="2.00" fill="#8e8e8e" />
<rect x="2612.00" y="1289.80" width="2.00" height="2.00" fill="#8e8e8e" />
<rect x="2612.00" y="1321.90" width="2.00" height="2.00" fill="#8e8e8e" />
<rect x="2612.00" y="1336.00" width="2.00" height="2.00" fill="#8e8e8e" />
<rect x="2612.00" y="1363.80" width="2.00" height="2.00" fill="#8e8e8e" />
<rect x="2612.00" y="1375.70" width="2.00" height="2.00" fill="#8e8e8e" />
<rect x="2612.00" y="1397.80" width="2.00" height="2.00" fill="#8e8e8e" />
<rect x="2612.00" y="1407.70" width="2.00" height="2.00" fill="#8e8e8e" />
<rect x="2612.00" y="1425.80" width="2.00" height="2.00" fill="#8e8e8e" />
<rect x="2612.00" y="1433.60" width="2.00" height="2.00" fill="#8e8e8e" />
<rect x="2612.00" y="1449.40" width="2.00" height="2.00" fill="#8e8e8e" />
<rect x="2612.00" y="1455.70" width="2.00" height="2.00" fill="#8e8e8e" />
<rect x="2612.00" y="1463.80" width="2.00" height="2.00" fill="#8e8e8e" />
<rect x="2612.00" y="1469.30" width="2.00" height="2.00" fill="#8e8e8e" />
<rect x="2612.00" y="1473.80" width="2.00" height="2.00" fill="#8e8e8e" />
<rect x="2612.00" y="1493.70" width="2.00" height="2.00" fill="#8e8e8e" />
<rect x="2612.00" y="1505.50" width="2.00" height="2.00" fill="#8e8e8e" />
<rect x="2612.00" y="1520.90" width="2.00" height="2.00" fill="#8e8e8e" />
<rect x="2612.00" y="1528.00" width="2.00" height="2.00" fill="#8e8e8e" />
<rect x="2612.00" y="1534.40" width="2.00" height="2.00" fill="#8e8e8e" />
<rect x="2606" y="1047.7" width="22" height="58.3" rx="5" fill="#1b1b1b" stroke="#828282" stroke-width="4"/>
<rect x="2612" y="1075" width="10" height="3.6" rx="1.8" fill="#828282"/>
<text transform="translate(2587.07,1619.00) scale(0.9066,1)" font-size="22.90" fill="#4a96f5" stroke="#4a96f5" stroke-width="0.4" >0.0</text>
<text transform="translate(2619.11,1662.00) scale(0.9410,1)" font-size="23.77" fill="#bdbdbd" stroke="#bdbdbd" stroke-width="0.4" >Master</text>
<rect x="2750.20" y="222.00" width="1.60" height="1457.50" fill="#272727" />
<text transform="translate(92.14,1733.60) scale(1.0311,1)" font-size="20.87" fill="#4a96f5" stroke="#4a96f5" stroke-width="0.4" >00:00:00:00</text>
<text transform="translate(2615.12,1734.00) scale(1.0351,1)" font-size="21.16" fill="#9a9a9a" stroke="#9a9a9a" stroke-width="0.4" >00:00:00:00</text>
<g fill="#a6a6a6"><path d="M1290 1709.8 H1293.6 V1719.5 L1290.6 1722.8 L1293.6 1726.1 V1735.8 H1290 V1727.3 L1286.3 1722.8 L1290 1718.3 Z"/><path d="M1296.5 1722.8 L1304 1714.5 L1304 1719.8 L1314 1719.8 L1314 1725.8 L1304 1725.8 L1304 1731.3 Z"/><path d="M1359.6 1709.8 H1356 V1719.5 L1359 1722.8 L1356 1726.1 V1735.8 H1359.6 V1727.3 L1363.5 1722.8 L1359.6 1718.3 Z"/><path d="M1353.5 1722.8 L1344.5 1714.5 L1344.5 1719.8 L1335.8 1719.8 L1335.8 1725.8 L1344.5 1725.8 L1344.5 1731.3 Z"/><path d="M1389.8 1713.8 L1408.7 1723 L1389.8 1732.3 Z"/><path d="M1435.8 1709.8 H1439.4 V1719.5 L1436.4 1722.8 L1439.4 1726.1 V1735.8 H1435.8 V1727.3 L1432 1722.8 L1435.8 1718.3 Z"/><path d="M1443.8 1714.5 L1457.5 1722.8 L1443.8 1730.5 Z"/><path d="M1463.6 1709.8 H1460 V1719.5 L1463 1722.8 L1460 1726.1 V1735.8 H1463.6 V1727.3 L1467.7 1722.8 L1463.6 1718.3 Z"/><path d="M1485.6 1716 L1493.5 1716 L1493.5 1719.5 L1489.5 1719.5 L1489.5 1730.3 L1510.2 1730.3 L1510.2 1722.5 L1514.2 1720.5 L1514.2 1734.3 L1485.6 1734.3 Z"/><path d="M1498 1712 L1511.5 1718 L1498 1724 Z"/></g>
<circle cx="1550" cy="1723.9" r="10.2" fill="#e31e24"/>
</svg>
</body></html>
